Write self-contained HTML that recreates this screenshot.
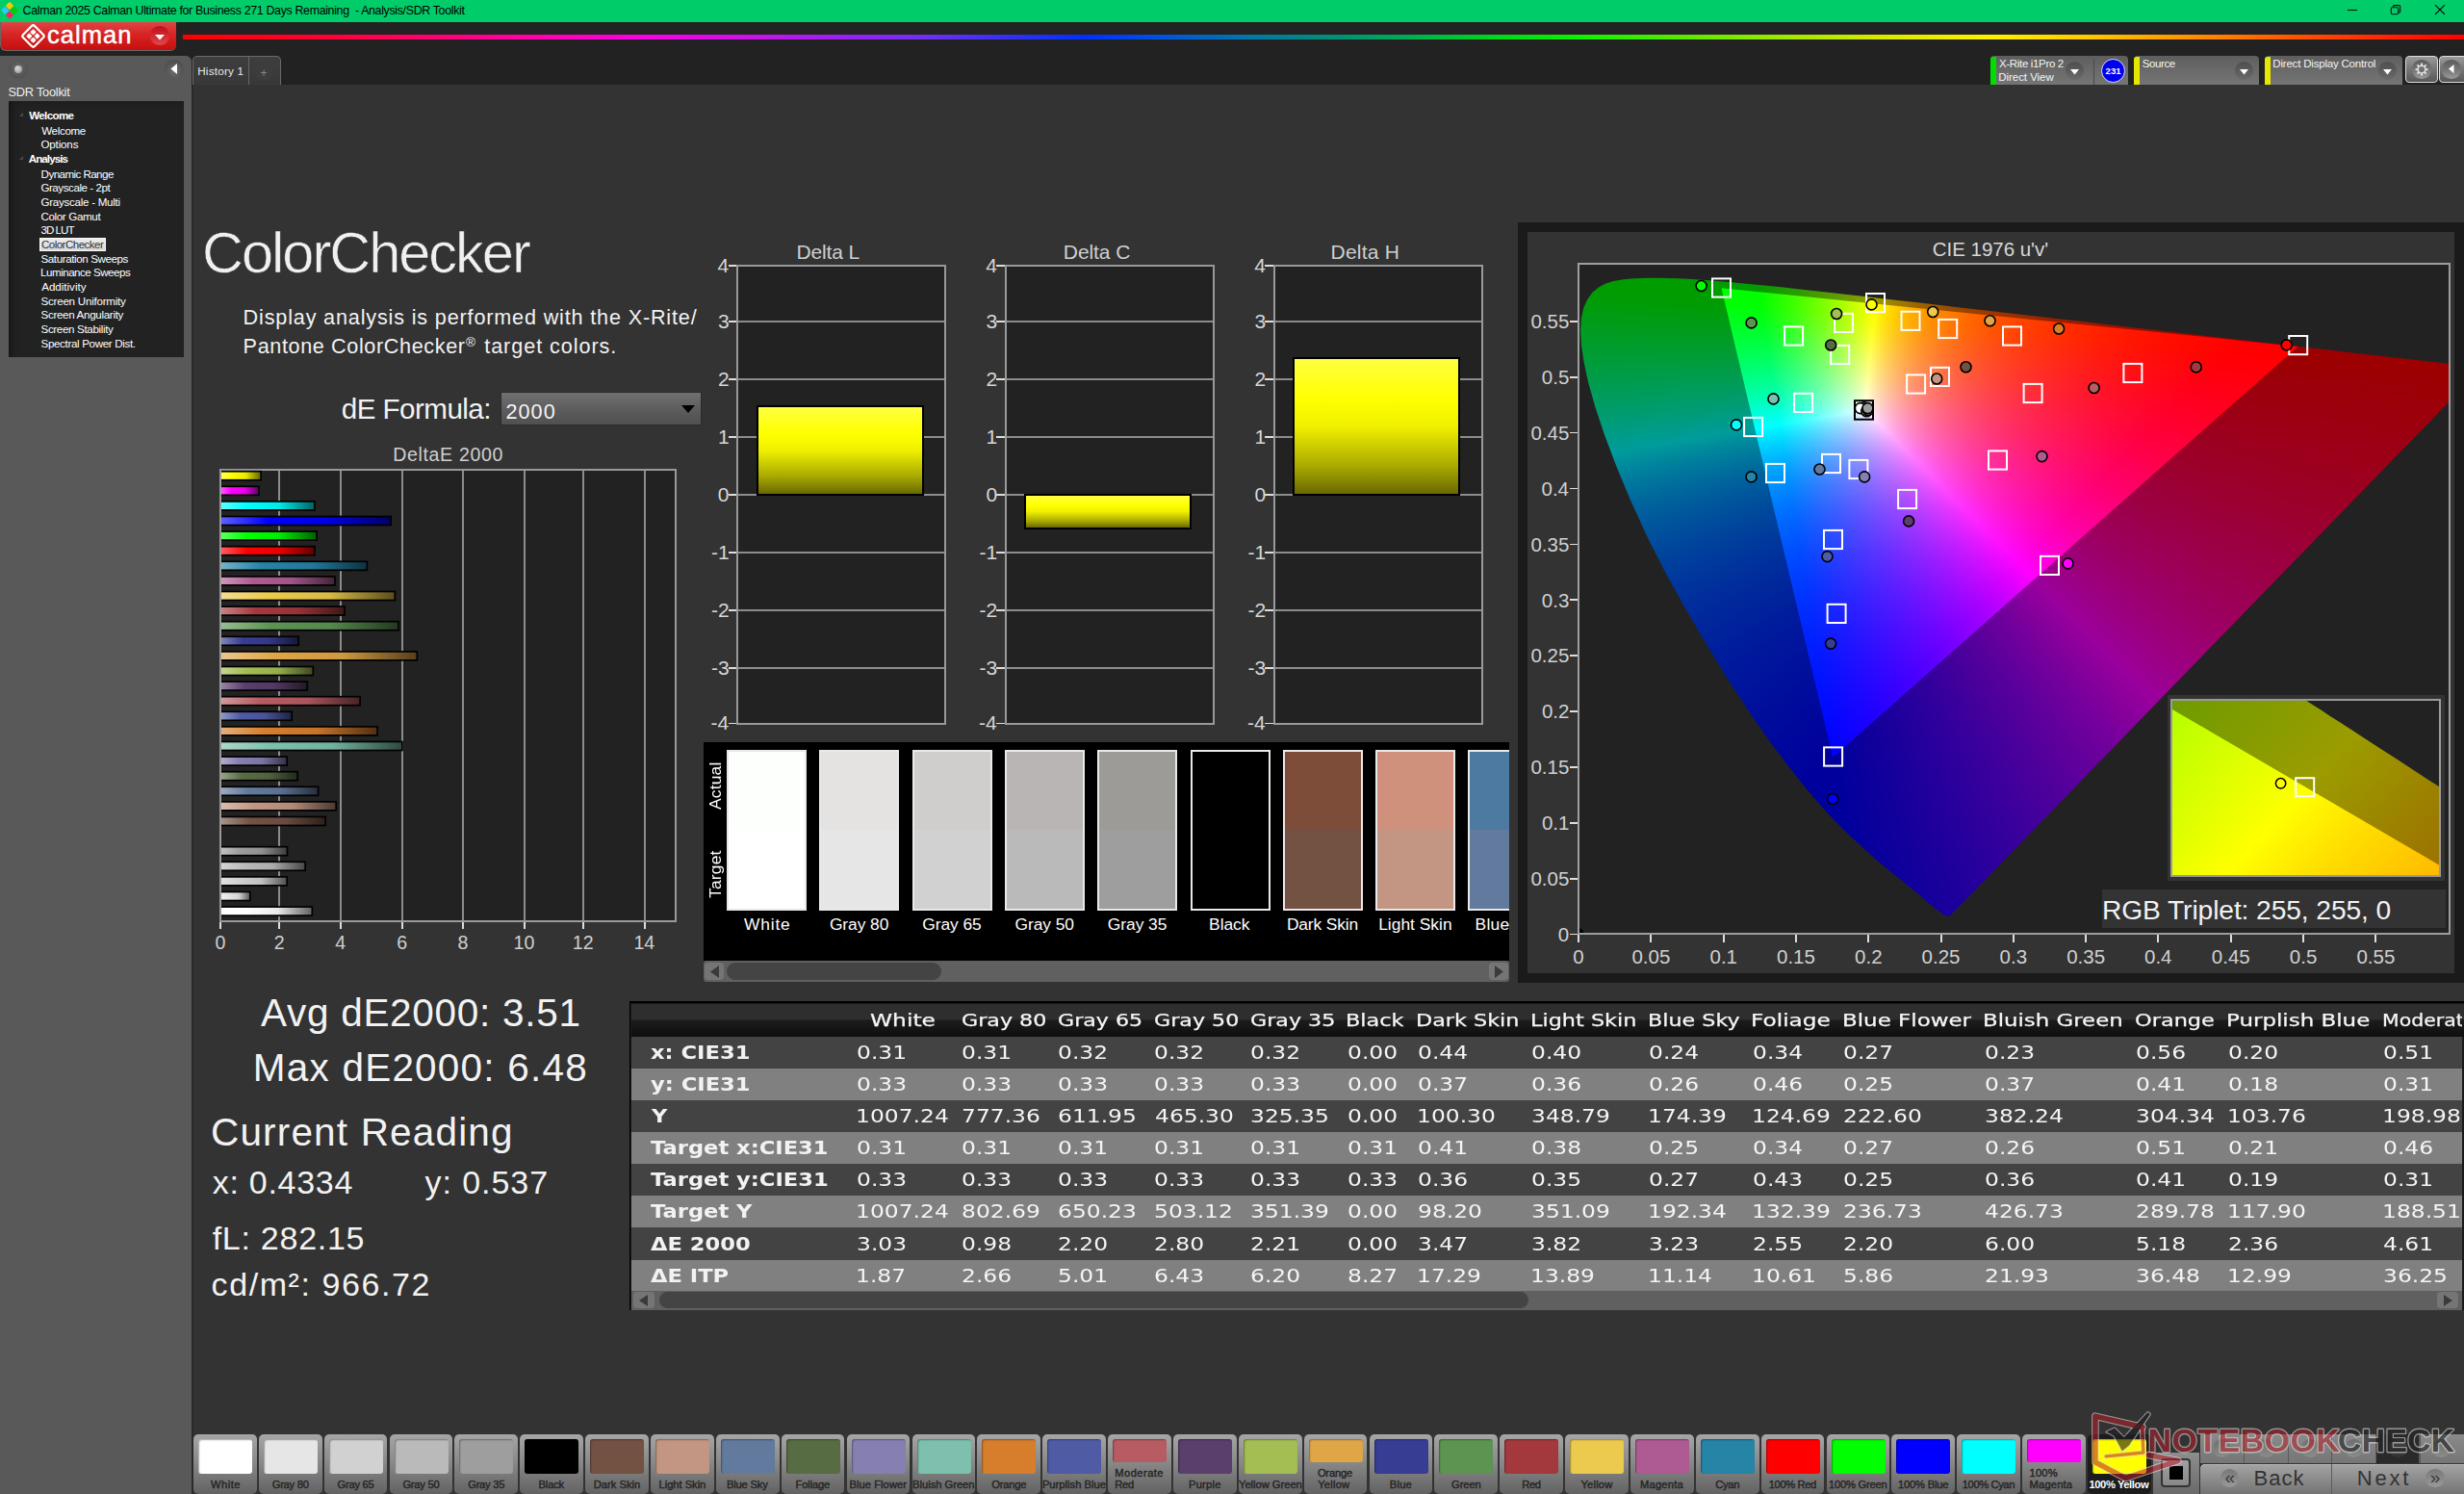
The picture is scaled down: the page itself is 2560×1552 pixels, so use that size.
<!DOCTYPE html>
<html><head><meta charset="utf-8"><title>Calman ColorChecker</title>
<style>
html,body{margin:0;padding:0;background:#333;}
body{width:2560px;height:1552px;overflow:hidden;position:relative;font-family:"Liberation Sans",sans-serif;color:#eee;}
.t{position:absolute;white-space:pre;}
.b{position:absolute;}
svg{position:absolute;overflow:visible;}
.r{position:absolute;height:3px;}

</style></head><body>
<div class="b" style="left:0.0px;top:23.0px;width:2560.0px;height:65.0px;background:#222;"></div>
<div class="b" style="left:200.0px;top:88.0px;width:2360.0px;height:1464.0px;background:#333;"></div>
<div class="b" style="left:0.0px;top:0.0px;width:2560.0px;height:23.0px;background:#00cc6a;"></div>
<svg style="left:2px;top:2px" width="18" height="18" viewBox="0 0 18 18"><g transform="rotate(45 8 9)"><rect x="1.5" y="2.5" width="6" height="6" rx="1" fill="#ffc400"/><rect x="8.3" y="2.5" width="6" height="6" rx="1" fill="#00d000"/><rect x="1.5" y="9.3" width="6" height="6" rx="1" fill="#2ec8ff"/><rect x="8.3" y="9.3" width="6" height="6" rx="1" fill="#ff2060"/></g></svg>
<span class="t" style="left:23.6px;top:5.4px;font-size:12.4px;line-height:12.4px;color:#000;letter-spacing:-0.334px;">Calman 2025 Calman Ultimate for Business 271 Days Remaining  - Analysis/SDR Toolkit</span>
<svg style="left:2420px;top:0" width="140" height="23" viewBox="0 0 140 23" fill="none" stroke="#111" stroke-width="1.1"><path d="M19 10.5h10"/><rect x="64.3" y="7.8" width="7.4" height="6.9" rx="1.2"/><path d="M66.3 7.6v-.8a1.2 1.2 0 0 1 1.2-1.2h5a1.2 1.2 0 0 1 1.2 1.2v5a1.2 1.2 0 0 1-1.2 1.2h-.6"/><path d="M110 5.2l10 9.8M120 5.2l-10 9.8"/></svg>
<div class="b" style="left:0;top:23px;width:183px;height:30px;border-radius:0 0 6px 6px;background:#666"></div>
<div class="b" style="left:1px;top:23px;width:181.5px;height:29px;border-radius:0 0 5px 5px;background:linear-gradient(#e04444,#d62424 45%,#c80e0e)"></div>
<svg style="left:22px;top:25px" width="25" height="25" viewBox="0 0 25 25"><g transform="rotate(45 12.5 12.5)" fill="#fff"><rect x="4" y="4" width="17" height="17" rx="2.2" fill="none" stroke="#fff" stroke-width="2.2"/><rect x="7.3" y="7.3" width="4.6" height="4.6" rx=".8"/><rect x="13.1" y="7.3" width="4.6" height="4.6" rx=".8"/><rect x="7.3" y="13.1" width="4.6" height="4.6" rx=".8"/><rect x="13.1" y="13.1" width="4.6" height="4.6" rx=".8"/></g></svg>
<span class="t" style="left:48.9px;top:23.5px;font-size:25.5px;line-height:25.5px;color:#fff;letter-spacing:1.082px;-webkit-text-stroke:.5px #fff;">calman</span>
<div class="b" style="left:156.3px;top:27.3px;width:19.4px;height:19.4px;border-radius:50%;background:linear-gradient(#c00c1c,#e04848)"></div>
<svg style="left:161px;top:35.5px" width="10" height="6" viewBox="0 0 10 6"><path d="M0 0h10L5 5.6z" fill="#fff"/></svg>
<div class="b" style="left:190.0px;top:35.6px;width:2370.0px;height:5.0px;background:linear-gradient(90deg,#ff0000 0%,#ff0030 6%,#ff0080 12%,#ff00b4 16%,#f800e8 20.3%,#d010e8 24.3%,#a020f0 28.4%,#7030f0 32.5%,#3030f0 36.5%,#0030ff 39.6%,#0050e0 42.6%,#0078a8 46.7%,#008c7c 50%,#00b050 54%,#00dc14 58.1%,#10f000 61.2%,#60e800 66.2%,#a0e800 70.3%,#d8e800 74.3%,#fff000 79.4%,#ffc800 83.5%,#ff8800 88.6%,#ff4800 93.6%,#ff1800 97.7%,#ff0000 100%);filter:blur(.5px);"></div>
<div class="b" style="left:0;top:58px;width:199px;height:1494px;background:#595959;border-radius:0 6px 0 0"></div>
<div class="b" style="left:199.0px;top:88.0px;width:1.5px;height:1464.0px;background:#2a2a2a;"></div>
<div class="b" style="left:9px;top:62px;width:20px;height:20px;border-radius:50%;background:radial-gradient(circle at 50% 45%,#6c6c6c,#505050 70%,#595959)"></div>
<div class="b" style="left:14.5px;top:68px;width:8px;height:8px;border-radius:50%;background:radial-gradient(circle at 40% 35%,#ddd,#888)"></div>
<div class="b" style="left:171px;top:62px;width:20px;height:20px;border-radius:50%;background:radial-gradient(circle at 50% 60%,#6e6e6e,#4c4c4c 75%,#595959)"></div>
<svg style="left:177px;top:66px" width="8" height="11" viewBox="0 0 8 11"><path d="M7 0v11L0.5 5.5z" fill="#fff"/></svg>
<span class="t" style="left:8.5px;top:90.2px;font-size:12.8px;line-height:12.8px;color:#f0f0f0;letter-spacing:-0.235px;">SDR Toolkit</span>
<div class="b" style="left:9px;top:105px;width:182px;height:266px;background:#222;box-shadow:inset 7px 3px 7px -4px #151515"></div>
<span class="t" style="left:30.2px;top:114.2px;font-size:11.6px;line-height:11.6px;color:#fff;font-weight:700;letter-spacing:-0.641px;">Welcome</span>
<svg style="left:19.5px;top:117.0px" width="4" height="4" viewBox="0 0 4 4"><path d="M4 0v4H0z" fill="#4a4a4a"/></svg>
<span class="t" style="left:43.2px;top:130.1px;font-size:11.6px;line-height:11.6px;color:#fff;letter-spacing:-0.329px;">Welcome</span>
<span class="t" style="left:42.5px;top:143.8px;font-size:11.6px;line-height:11.6px;color:#fff;letter-spacing:-0.172px;">Options</span>
<span class="t" style="left:29.7px;top:159.0px;font-size:11.6px;line-height:11.6px;color:#fff;font-weight:700;letter-spacing:-0.911px;">Analysis</span>
<svg style="left:19.5px;top:161.8px" width="4" height="4" viewBox="0 0 4 4"><path d="M4 0v4H0z" fill="#4a4a4a"/></svg>
<span class="t" style="left:42.6px;top:174.9px;font-size:11.6px;line-height:11.6px;color:#fff;letter-spacing:-0.562px;">Dynamic Range</span>
<span class="t" style="left:42.4px;top:188.9px;font-size:11.6px;line-height:11.6px;color:#fff;letter-spacing:-0.448px;">Grayscale - 2pt</span>
<span class="t" style="left:42.4px;top:204.1px;font-size:11.6px;line-height:11.6px;color:#fff;letter-spacing:-0.267px;">Grayscale - Multi</span>
<span class="t" style="left:42.4px;top:218.7px;font-size:11.6px;line-height:11.6px;color:#fff;letter-spacing:-0.343px;">Color Gamut</span>
<span class="t" style="left:42.6px;top:233.2px;font-size:11.6px;line-height:11.6px;color:#fff;letter-spacing:-1.005px;">3D LUT</span>
<div class="b" style="left:41.0px;top:247.2px;width:69.2px;height:13.8px;background:linear-gradient(#ececec,#d8d8d8);border:1px solid #fafafa;box-sizing:border-box;"></div>
<span class="t" style="left:42.9px;top:248.1px;font-size:11.6px;line-height:11.6px;color:#333;letter-spacing:-0.535px;">ColorChecker</span>
<span class="t" style="left:42.5px;top:263.0px;font-size:11.6px;line-height:11.6px;color:#fff;letter-spacing:-0.403px;">Saturation Sweeps</span>
<span class="t" style="left:42.1px;top:277.1px;font-size:11.6px;line-height:11.6px;color:#fff;letter-spacing:-0.502px;">Luminance Sweeps</span>
<span class="t" style="left:43.2px;top:291.9px;font-size:11.6px;line-height:11.6px;color:#fff;letter-spacing:-0.011px;">Additivity</span>
<span class="t" style="left:42.5px;top:306.8px;font-size:11.6px;line-height:11.6px;color:#fff;letter-spacing:-0.234px;">Screen Uniformity</span>
<span class="t" style="left:42.5px;top:320.9px;font-size:11.6px;line-height:11.6px;color:#fff;letter-spacing:-0.314px;">Screen Angularity</span>
<span class="t" style="left:42.5px;top:335.7px;font-size:11.6px;line-height:11.6px;color:#fff;letter-spacing:-0.347px;">Screen Stability</span>
<span class="t" style="left:42.5px;top:350.7px;font-size:11.6px;line-height:11.6px;color:#fff;letter-spacing:-0.344px;">Spectral Power Dist.</span>
<div class="b" style="left:200px;top:58px;width:92px;height:30px;border-radius:5px 5px 0 0;background:linear-gradient(#3e3e3e,#383838);border:1px solid #6a6a6a;border-bottom:none;box-sizing:border-box"></div>
<div class="b" style="left:258.0px;top:59.0px;width:1.2px;height:29.0px;background:#666;"></div>
<span class="t" style="left:205.2px;top:68.2px;font-size:11.7px;line-height:11.7px;color:#e8e8e8;letter-spacing:0.226px;">History 1</span>
<div class="b" style="left:264px;top:64px;width:20px;height:20px;border-radius:50%;background:#3d3d3d"></div>
<span class="t" style="left:270.5px;top:69.8px;font-size:12px;line-height:12px;color:#888;">+</span>
<div class="b" style="left:2068px;top:58px;width:143px;height:30px;border-radius:4px 4px 0 0;background:linear-gradient(#5e5e5e,#6a6a6a 50%,#757575)"></div>
<div class="b" style="left:2068px;top:59px;width:5.5px;height:29px;border-radius:3px 0 0 0;background:#0d0"></div>
<span class="t" style="left:2077.0px;top:60.6px;font-size:11.5px;line-height:11.5px;color:#f4f4f4;letter-spacing:-0.334px;">X-Rite i1Pro 2</span>
<span class="t" style="left:2076.3px;top:74.6px;font-size:11.5px;line-height:11.5px;color:#f4f4f4;letter-spacing:-0.054px;">Direct View</span>
<div class="b" style="left:2146.1px;top:63.5px;width:19px;height:19px;border-radius:50%;background:linear-gradient(#4e4e4e,#6a6a6a)"></div>
<svg style="left:2151.1px;top:72px" width="9" height="5.5" viewBox="0 0 9 5.5"><path d="M0 0h9L4.5 5.5z" fill="#fff"/></svg>
<div class="b" style="left:2174.5px;top:61.0px;width:1.0px;height:27.0px;background:#4a4a4a;"></div>
<div class="b" style="left:2183px;top:60.5px;width:25px;height:25px;border-radius:50%;background:#0000f0;border:1px solid #dde;box-sizing:border-box"></div>
<span class="t" style="left:2187.6px;top:68.5px;font-size:9.6px;line-height:9.6px;color:#fff;font-weight:700;">231</span>
<div class="b" style="left:2217px;top:58px;width:130px;height:30px;border-radius:4px 4px 0 0;background:linear-gradient(#5e5e5e,#6a6a6a 50%,#757575)"></div>
<div class="b" style="left:2217px;top:59px;width:5.5px;height:29px;border-radius:3px 0 0 0;background:#e6e600"></div>
<span class="t" style="left:2225.7px;top:60.6px;font-size:11.5px;line-height:11.5px;color:#f4f4f4;letter-spacing:-0.384px;">Source</span>
<div class="b" style="left:2321.5px;top:63.5px;width:19px;height:19px;border-radius:50%;background:linear-gradient(#4e4e4e,#6a6a6a)"></div>
<svg style="left:2326.5px;top:72px" width="9" height="5.5" viewBox="0 0 9 5.5"><path d="M0 0h9L4.5 5.5z" fill="#fff"/></svg>
<div class="b" style="left:2353px;top:58px;width:143px;height:30px;border-radius:4px 4px 0 0;background:linear-gradient(#5e5e5e,#6a6a6a 50%,#757575)"></div>
<div class="b" style="left:2353px;top:59px;width:5.5px;height:29px;border-radius:3px 0 0 0;background:#e6e600"></div>
<span class="t" style="left:2361.3px;top:60.6px;font-size:11.5px;line-height:11.5px;color:#f4f4f4;letter-spacing:-0.195px;">Direct Display Control</span>
<div class="b" style="left:2470.5px;top:63.5px;width:19px;height:19px;border-radius:50%;background:linear-gradient(#4e4e4e,#6a6a6a)"></div>
<svg style="left:2475.5px;top:72px" width="9" height="5.5" viewBox="0 0 9 5.5"><path d="M0 0h9L4.5 5.5z" fill="#fff"/></svg>
<div class="b" style="left:2499.2px;top:57.8px;width:34.2px;height:28.4px;border-radius:4px;background:linear-gradient(#9a9a9a,#787878 45%,#585858);border:1px solid #dcdcdc;box-sizing:border-box"></div>
<div class="b" style="left:2506.3px;top:62.4px;width:19.4px;height:19.4px;border-radius:50%;background:linear-gradient(#5c5c5c,#747474 50%,#9a9a9a)"></div>
<svg style="left:0;top:0" width="2560" height="100" viewBox="0 0 2560 100"><path d="M2515.14 65.56 L2516.86 65.56 L2517.06 67.62 L2518.41 68.18 L2520.02 66.87 L2521.23 68.08 L2519.92 69.69 L2520.48 71.04 L2522.54 71.24 L2522.54 72.96 L2520.48 73.16 L2519.92 74.51 L2521.23 76.12 L2520.02 77.33 L2518.41 76.02 L2517.06 76.58 L2516.86 78.64 L2515.14 78.64 L2514.94 76.58 L2513.59 76.02 L2511.98 77.33 L2510.77 76.12 L2512.08 74.51 L2511.52 73.16 L2509.46 72.96 L2509.46 71.24 L2511.52 71.04 L2512.08 69.69 L2510.77 68.08 L2511.98 66.87 L2513.59 68.18 L2514.94 67.62Z" fill="#dedede"/><circle cx="2516" cy="72.1" r="3.1" fill="#727272"/></svg>
<div class="b" style="left:2533.6px;top:57.8px;width:30px;height:28.4px;border-radius:4px;background:linear-gradient(#9a9a9a,#787878 45%,#585858);border:1px solid #dcdcdc;box-sizing:border-box"></div>
<div class="b" style="left:2537.2px;top:62.4px;width:19.4px;height:19.4px;border-radius:50%;background:linear-gradient(#5c5c5c,#747474 50%,#9a9a9a)"></div>
<svg style="left:2544px;top:66.9px" width="5.6" height="9.2" viewBox="0 0 5.6 9.2"><path d="M5.6 0v9.2L0 4.6z" fill="#fff"/></svg>
<span class="t" style="left:210.0px;top:232.6px;font-size:59.5px;line-height:59.5px;color:#f0f0f0;letter-spacing:-1.998px;-webkit-text-stroke:.6px #333;">ColorChecker</span>
<span class="t" style="left:252.6px;top:318.7px;font-size:21.6px;line-height:21.6px;color:#f2f2f2;letter-spacing:0.841px;">Display analysis is performed with the X-Rite/</span>
<span class="t" style="left:252.6px;top:349.3px;font-size:21.6px;line-height:21.6px;color:#f2f2f2;letter-spacing:0.629px;">Pantone ColorChecker</span>
<span class="t" style="left:484.1px;top:349.2px;font-size:13.5px;line-height:13.5px;color:#f2f2f2;">®</span>
<span class="t" style="left:503.2px;top:349.3px;font-size:21.6px;line-height:21.6px;color:#f2f2f2;letter-spacing:0.947px;">target colors.</span>
<span class="t" style="left:354.8px;top:409.9px;font-size:29.6px;line-height:29.6px;color:#f2f2f2;letter-spacing:-0.547px;">dE Formula:</span>
<div class="b" style="left:520px;top:407px;width:209px;height:35px;box-sizing:border-box;border:1.5px solid #2a2a2a;background:linear-gradient(#707070,#5a5a5a 60%,#505050)"></div>
<span class="t" style="left:525.4px;top:416.7px;font-size:21.6px;line-height:21.6px;color:#f4f4f4;letter-spacing:1.092px;">2000</span>
<svg style="left:707.5px;top:420.5px" width="14" height="8" viewBox="0 0 14 8"><path d="M0 0h14L7 8z" fill="#000"/></svg>
<span class="t" style="left:408.2px;top:462.8px;font-size:19.6px;line-height:19.6px;color:#cfcfcf;letter-spacing:0.636px;">DeltaE 2000</span>
<div class="b" style="left:228.0px;top:487.0px;width:475.0px;height:471.0px;background:#222;box-sizing:border-box;border:2px solid #999;"></div>
<div class="b" style="left:289.3px;top:489.0px;width:2.0px;height:467.0px;background:#8c8c8c;"></div>
<div class="b" style="left:289.4px;top:958.0px;width:1.8px;height:6.5px;background:#ddd;"></div>
<div class="b" style="left:352.7px;top:489.0px;width:2.0px;height:467.0px;background:#8c8c8c;"></div>
<div class="b" style="left:352.8px;top:958.0px;width:1.8px;height:6.5px;background:#ddd;"></div>
<div class="b" style="left:416.8px;top:489.0px;width:2.0px;height:467.0px;background:#8c8c8c;"></div>
<div class="b" style="left:416.9px;top:958.0px;width:1.8px;height:6.5px;background:#ddd;"></div>
<div class="b" style="left:479.9px;top:489.0px;width:2.0px;height:467.0px;background:#8c8c8c;"></div>
<div class="b" style="left:480.0px;top:958.0px;width:1.8px;height:6.5px;background:#ddd;"></div>
<div class="b" style="left:543.9px;top:489.0px;width:2.0px;height:467.0px;background:#8c8c8c;"></div>
<div class="b" style="left:544.0px;top:958.0px;width:1.8px;height:6.5px;background:#ddd;"></div>
<div class="b" style="left:605.0px;top:489.0px;width:2.0px;height:467.0px;background:#8c8c8c;"></div>
<div class="b" style="left:605.1px;top:958.0px;width:1.8px;height:6.5px;background:#ddd;"></div>
<div class="b" style="left:668.8px;top:489.0px;width:2.0px;height:467.0px;background:#8c8c8c;"></div>
<div class="b" style="left:668.9px;top:958.0px;width:1.8px;height:6.5px;background:#ddd;"></div>
<div class="b" style="left:228.0px;top:958.0px;width:1.8px;height:6.5px;background:#ddd;"></div>
<span class="t" style="left:223.5px;top:970.0px;font-size:19.6px;line-height:19.6px;color:#cfcfcf;">0</span>
<span class="t" style="left:284.8px;top:970.0px;font-size:19.6px;line-height:19.6px;color:#cfcfcf;">2</span>
<span class="t" style="left:348.3px;top:970.0px;font-size:19.6px;line-height:19.6px;color:#cfcfcf;">4</span>
<span class="t" style="left:412.3px;top:970.0px;font-size:19.6px;line-height:19.6px;color:#cfcfcf;">6</span>
<span class="t" style="left:475.5px;top:970.0px;font-size:19.6px;line-height:19.6px;color:#cfcfcf;">8</span>
<span class="t" style="left:533.6px;top:970.0px;font-size:19.6px;line-height:19.6px;color:#cfcfcf;">10</span>
<span class="t" style="left:594.8px;top:970.0px;font-size:19.6px;line-height:19.6px;color:#cfcfcf;">12</span>
<span class="t" style="left:658.4px;top:970.0px;font-size:19.6px;line-height:19.6px;color:#cfcfcf;">14</span>
<svg style="left:0;top:0" width="760" height="1000" viewBox="0 0 760 1000"><defs><linearGradient id="b0"><stop offset="0" stop-color="#ffff61"/><stop offset=".28" stop-color="#ffff00"/><stop offset=".62" stop-color="#ebeb00"/><stop offset="1" stop-color="#616100"/></linearGradient><linearGradient id="b1"><stop offset="0" stop-color="#ff61ff"/><stop offset=".28" stop-color="#ff00ff"/><stop offset=".62" stop-color="#eb00eb"/><stop offset="1" stop-color="#610061"/></linearGradient><linearGradient id="b2"><stop offset="0" stop-color="#61ffff"/><stop offset=".28" stop-color="#00ffff"/><stop offset=".62" stop-color="#00ebeb"/><stop offset="1" stop-color="#006161"/></linearGradient><linearGradient id="b3"><stop offset="0" stop-color="#6161ff"/><stop offset=".28" stop-color="#0000ff"/><stop offset=".62" stop-color="#0000eb"/><stop offset="1" stop-color="#000061"/></linearGradient><linearGradient id="b4"><stop offset="0" stop-color="#61ff61"/><stop offset=".28" stop-color="#00ff00"/><stop offset=".62" stop-color="#00eb00"/><stop offset="1" stop-color="#006100"/></linearGradient><linearGradient id="b5"><stop offset="0" stop-color="#ff6161"/><stop offset=".28" stop-color="#ff0000"/><stop offset=".62" stop-color="#eb0000"/><stop offset="1" stop-color="#610000"/></linearGradient><linearGradient id="b6"><stop offset="0" stop-color="#78b3c8"/><stop offset=".28" stop-color="#2684a7"/><stop offset=".62" stop-color="#23799a"/><stop offset="1" stop-color="#0e323f"/></linearGradient><linearGradient id="b7"><stop offset="0" stop-color="#cd99bc"/><stop offset=".28" stop-color="#af5b93"/><stop offset=".62" stop-color="#a15487"/><stop offset="1" stop-color="#422338"/></linearGradient><linearGradient id="b8"><stop offset="0" stop-color="#f3de91"/><stop offset=".28" stop-color="#ecca4d"/><stop offset=".62" stop-color="#d9ba47"/><stop offset="1" stop-color="#5a4d1d"/></linearGradient><linearGradient id="b9"><stop offset="0" stop-color="#c68487"/><stop offset=".28" stop-color="#a3393d"/><stop offset=".62" stop-color="#963438"/><stop offset="1" stop-color="#3e1617"/></linearGradient><linearGradient id="b10"><stop offset="0" stop-color="#9abd94"/><stop offset=".28" stop-color="#5c9452"/><stop offset=".62" stop-color="#55884b"/><stop offset="1" stop-color="#23381f"/></linearGradient><linearGradient id="b11"><stop offset="0" stop-color="#8487bd"/><stop offset=".28" stop-color="#383d94"/><stop offset=".62" stop-color="#343888"/><stop offset="1" stop-color="#151738"/></linearGradient><linearGradient id="b12"><stop offset="0" stop-color="#ebc78d"/><stop offset=".28" stop-color="#dfa547"/><stop offset=".62" stop-color="#cd9841"/><stop offset="1" stop-color="#553f1b"/></linearGradient><linearGradient id="b13"><stop offset="0" stop-color="#c6d794"/><stop offset=".28" stop-color="#a3be52"/><stop offset=".62" stop-color="#96af4b"/><stop offset="1" stop-color="#3e481f"/></linearGradient><linearGradient id="b14"><stop offset="0" stop-color="#9987a4"/><stop offset=".28" stop-color="#5a3e6c"/><stop offset=".62" stop-color="#533963"/><stop offset="1" stop-color="#221829"/></linearGradient><linearGradient id="b15"><stop offset="0" stop-color="#d39a9e"/><stop offset=".28" stop-color="#b85c63"/><stop offset=".62" stop-color="#a9555b"/><stop offset="1" stop-color="#462326"/></linearGradient><linearGradient id="b16"><stop offset="0" stop-color="#9299c8"/><stop offset=".28" stop-color="#505ba6"/><stop offset=".62" stop-color="#4a5499"/><stop offset="1" stop-color="#1e233f"/></linearGradient><linearGradient id="b17"><stop offset="0" stop-color="#e6af7c"/><stop offset=".28" stop-color="#d67e2c"/><stop offset=".62" stop-color="#c57428"/><stop offset="1" stop-color="#513011"/></linearGradient><linearGradient id="b18"><stop offset="0" stop-color="#aed8cc"/><stop offset=".28" stop-color="#7cc0ad"/><stop offset=".62" stop-color="#72b19f"/><stop offset="1" stop-color="#2f4942"/></linearGradient><linearGradient id="b19"><stop offset="0" stop-color="#b3b0cf"/><stop offset=".28" stop-color="#8580b1"/><stop offset=".62" stop-color="#7a76a3"/><stop offset="1" stop-color="#333143"/></linearGradient><linearGradient id="b20"><stop offset="0" stop-color="#97a48a"/><stop offset=".28" stop-color="#576c43"/><stop offset=".62" stop-color="#50633e"/><stop offset="1" stop-color="#212919"/></linearGradient><linearGradient id="b21"><stop offset="0" stop-color="#9eadc2"/><stop offset=".28" stop-color="#627a9d"/><stop offset=".62" stop-color="#5a7090"/><stop offset="1" stop-color="#252e3c"/></linearGradient><linearGradient id="b22"><stop offset="0" stop-color="#d9beb2"/><stop offset=".28" stop-color="#c29682"/><stop offset=".62" stop-color="#b28a78"/><stop offset="1" stop-color="#4a3931"/></linearGradient><linearGradient id="b23"><stop offset="0" stop-color="#a8948b"/><stop offset=".28" stop-color="#735244"/><stop offset=".62" stop-color="#6a4b3f"/><stop offset="1" stop-color="#2c1f1a"/></linearGradient><linearGradient id="b25"><stop offset="0" stop-color="#c3c3c3"/><stop offset=".28" stop-color="#9e9e9e"/><stop offset=".62" stop-color="#919191"/><stop offset="1" stop-color="#3c3c3c"/></linearGradient><linearGradient id="b26"><stop offset="0" stop-color="#d4d4d4"/><stop offset=".28" stop-color="#bababa"/><stop offset=".62" stop-color="#ababab"/><stop offset="1" stop-color="#474747"/></linearGradient><linearGradient id="b27"><stop offset="0" stop-color="#e2e2e2"/><stop offset=".28" stop-color="#d1d1d1"/><stop offset=".62" stop-color="#c0c0c0"/><stop offset="1" stop-color="#4f4f4f"/></linearGradient><linearGradient id="b28"><stop offset="0" stop-color="#f0f0f0"/><stop offset=".28" stop-color="#e6e6e6"/><stop offset=".62" stop-color="#d4d4d4"/><stop offset="1" stop-color="#575757"/></linearGradient><linearGradient id="b29"><stop offset="0" stop-color="#ffffff"/><stop offset=".28" stop-color="#ffffff"/><stop offset=".62" stop-color="#ebebeb"/><stop offset="1" stop-color="#616161"/></linearGradient></defs><g stroke="#000" stroke-width="1.7"><rect x="229" y="489.7" width="42.1" height="9" fill="url(#b0)"/><rect x="229" y="505.3" width="39.9" height="9" fill="url(#b1)"/><rect x="229" y="520.9" width="97.9" height="9" fill="url(#b2)"/><rect x="229" y="536.5" width="177.2" height="9" fill="url(#b3)"/><rect x="229" y="552.1" width="100.1" height="9" fill="url(#b4)"/><rect x="229" y="567.7" width="97.9" height="9" fill="url(#b5)"/><rect x="229" y="583.3" width="152.4" height="9" fill="url(#b6)"/><rect x="229" y="598.9" width="119.0" height="9" fill="url(#b7)"/><rect x="229" y="614.5" width="181.3" height="9" fill="url(#b8)"/><rect x="229" y="630.1" width="129.0" height="9" fill="url(#b9)"/><rect x="229" y="645.7" width="185.1" height="9" fill="url(#b10)"/><rect x="229" y="661.3" width="81.2" height="9" fill="url(#b11)"/><rect x="229" y="676.9" width="204.3" height="9" fill="url(#b12)"/><rect x="229" y="692.5" width="96.3" height="9" fill="url(#b13)"/><rect x="229" y="708.1" width="90.3" height="9" fill="url(#b14)"/><rect x="229" y="723.7" width="145.1" height="9" fill="url(#b15)"/><rect x="229" y="739.3" width="74.2" height="9" fill="url(#b16)"/><rect x="229" y="754.9" width="163.1" height="9" fill="url(#b17)"/><rect x="229" y="770.5" width="188.9" height="9" fill="url(#b18)"/><rect x="229" y="786.1" width="69.2" height="9" fill="url(#b19)"/><rect x="229" y="801.7" width="80.2" height="9" fill="url(#b20)"/><rect x="229" y="817.3" width="101.6" height="9" fill="url(#b21)"/><rect x="229" y="832.9" width="120.2" height="9" fill="url(#b22)"/><rect x="229" y="848.5" width="109.2" height="9" fill="url(#b23)"/><rect x="229" y="879.7" width="69.5" height="9" fill="url(#b25)"/><rect x="229" y="895.3" width="88.1" height="9" fill="url(#b26)"/><rect x="229" y="910.9" width="69.2" height="9" fill="url(#b27)"/><rect x="229" y="926.5" width="30.8" height="9" fill="url(#b28)"/><rect x="229" y="942.1" width="95.3" height="9" fill="url(#b29)"/></g></svg>
<div class="b" style="left:228.0px;top:487.0px;width:2.0px;height:471.0px;background:#999;"></div>
<span class="t" style="left:827.4px;top:251.3px;font-size:21px;line-height:21px;color:#cfcfcf;letter-spacing:-0.109px;">Delta L</span>
<div class="b" style="left:765.0px;top:275.0px;width:218.0px;height:477.5px;background:#222;box-sizing:border-box;border:2px solid #999;"></div>
<div class="b" style="left:756.5px;top:750.6px;width:8.5px;height:1.8px;background:#ddd;"></div>
<span class="t" style="left:738.5px;top:740.3px;font-size:21px;line-height:21px;color:#d6d6d6;">-4</span>
<div class="b" style="left:767.0px;top:693.2px;width:214.0px;height:2.0px;background:#8c8c8c;"></div>
<div class="b" style="left:756.5px;top:693.3px;width:8.5px;height:1.8px;background:#ddd;"></div>
<span class="t" style="left:738.9px;top:683.0px;font-size:21px;line-height:21px;color:#d6d6d6;">-3</span>
<div class="b" style="left:767.0px;top:633.2px;width:214.0px;height:2.0px;background:#8c8c8c;"></div>
<div class="b" style="left:756.5px;top:633.3px;width:8.5px;height:1.8px;background:#ddd;"></div>
<span class="t" style="left:739.0px;top:623.0px;font-size:21px;line-height:21px;color:#d6d6d6;">-2</span>
<div class="b" style="left:767.0px;top:573.2px;width:214.0px;height:2.0px;background:#8c8c8c;"></div>
<div class="b" style="left:756.5px;top:573.3px;width:8.5px;height:1.8px;background:#ddd;"></div>
<span class="t" style="left:739.0px;top:563.0px;font-size:21px;line-height:21px;color:#d6d6d6;">-1</span>
<div class="b" style="left:767.0px;top:513.2px;width:214.0px;height:2.0px;background:#8c8c8c;"></div>
<div class="b" style="left:756.5px;top:513.3px;width:8.5px;height:1.8px;background:#ddd;"></div>
<span class="t" style="left:745.8px;top:503.0px;font-size:21px;line-height:21px;color:#d6d6d6;">0</span>
<div class="b" style="left:767.0px;top:453.2px;width:214.0px;height:2.0px;background:#8c8c8c;"></div>
<div class="b" style="left:756.5px;top:453.3px;width:8.5px;height:1.8px;background:#ddd;"></div>
<span class="t" style="left:746.0px;top:443.0px;font-size:21px;line-height:21px;color:#d6d6d6;">1</span>
<div class="b" style="left:767.0px;top:393.2px;width:214.0px;height:2.0px;background:#8c8c8c;"></div>
<div class="b" style="left:756.5px;top:393.3px;width:8.5px;height:1.8px;background:#ddd;"></div>
<span class="t" style="left:746.0px;top:383.0px;font-size:21px;line-height:21px;color:#d6d6d6;">2</span>
<div class="b" style="left:767.0px;top:333.2px;width:214.0px;height:2.0px;background:#8c8c8c;"></div>
<div class="b" style="left:756.5px;top:333.3px;width:8.5px;height:1.8px;background:#ddd;"></div>
<span class="t" style="left:745.9px;top:323.0px;font-size:21px;line-height:21px;color:#d6d6d6;">3</span>
<div class="b" style="left:756.5px;top:275.1px;width:8.5px;height:1.8px;background:#ddd;"></div>
<span class="t" style="left:745.6px;top:264.8px;font-size:21px;line-height:21px;color:#d6d6d6;">4</span>
<div class="b" style="left:785.5px;top:421.2px;width:174px;height:94.0px;box-sizing:border-box;border:2.1px solid #000;background:linear-gradient(#ffff40,#ffff00 30%,#f0f000 50%,#a8a800 80%,#686800)"></div>
<span class="t" style="left:1104.8px;top:251.3px;font-size:21px;line-height:21px;color:#cfcfcf;letter-spacing:-0.086px;">Delta C</span>
<div class="b" style="left:1043.6px;top:275.0px;width:218.0px;height:477.5px;background:#222;box-sizing:border-box;border:2px solid #999;"></div>
<div class="b" style="left:1035.1px;top:750.6px;width:8.5px;height:1.8px;background:#ddd;"></div>
<span class="t" style="left:1017.1px;top:740.3px;font-size:21px;line-height:21px;color:#d6d6d6;">-4</span>
<div class="b" style="left:1045.6px;top:693.2px;width:214.0px;height:2.0px;background:#8c8c8c;"></div>
<div class="b" style="left:1035.1px;top:693.3px;width:8.5px;height:1.8px;background:#ddd;"></div>
<span class="t" style="left:1017.4px;top:683.0px;font-size:21px;line-height:21px;color:#d6d6d6;">-3</span>
<div class="b" style="left:1045.6px;top:633.2px;width:214.0px;height:2.0px;background:#8c8c8c;"></div>
<div class="b" style="left:1035.1px;top:633.3px;width:8.5px;height:1.8px;background:#ddd;"></div>
<span class="t" style="left:1017.6px;top:623.0px;font-size:21px;line-height:21px;color:#d6d6d6;">-2</span>
<div class="b" style="left:1045.6px;top:573.2px;width:214.0px;height:2.0px;background:#8c8c8c;"></div>
<div class="b" style="left:1035.1px;top:573.3px;width:8.5px;height:1.8px;background:#ddd;"></div>
<span class="t" style="left:1017.6px;top:563.0px;font-size:21px;line-height:21px;color:#d6d6d6;">-1</span>
<div class="b" style="left:1045.6px;top:513.2px;width:214.0px;height:2.0px;background:#8c8c8c;"></div>
<div class="b" style="left:1035.1px;top:513.3px;width:8.5px;height:1.8px;background:#ddd;"></div>
<span class="t" style="left:1024.4px;top:503.0px;font-size:21px;line-height:21px;color:#d6d6d6;">0</span>
<div class="b" style="left:1045.6px;top:453.2px;width:214.0px;height:2.0px;background:#8c8c8c;"></div>
<div class="b" style="left:1035.1px;top:453.3px;width:8.5px;height:1.8px;background:#ddd;"></div>
<span class="t" style="left:1024.6px;top:443.0px;font-size:21px;line-height:21px;color:#d6d6d6;">1</span>
<div class="b" style="left:1045.6px;top:393.2px;width:214.0px;height:2.0px;background:#8c8c8c;"></div>
<div class="b" style="left:1035.1px;top:393.3px;width:8.5px;height:1.8px;background:#ddd;"></div>
<span class="t" style="left:1024.6px;top:383.0px;font-size:21px;line-height:21px;color:#d6d6d6;">2</span>
<div class="b" style="left:1045.6px;top:333.2px;width:214.0px;height:2.0px;background:#8c8c8c;"></div>
<div class="b" style="left:1035.1px;top:333.3px;width:8.5px;height:1.8px;background:#ddd;"></div>
<span class="t" style="left:1024.5px;top:323.0px;font-size:21px;line-height:21px;color:#d6d6d6;">3</span>
<div class="b" style="left:1035.1px;top:275.1px;width:8.5px;height:1.8px;background:#ddd;"></div>
<span class="t" style="left:1024.2px;top:264.8px;font-size:21px;line-height:21px;color:#d6d6d6;">4</span>
<div class="b" style="left:1064.1px;top:513.4px;width:174px;height:36.9px;box-sizing:border-box;border:2.1px solid #000;background:linear-gradient(#ffff40,#ffff00 30%,#f0f000 50%,#a8a800 80%,#686800)"></div>
<span class="t" style="left:1382.5px;top:251.3px;font-size:21px;line-height:21px;color:#cfcfcf;letter-spacing:0.221px;">Delta H</span>
<div class="b" style="left:1322.6px;top:275.0px;width:218.0px;height:477.5px;background:#222;box-sizing:border-box;border:2px solid #999;"></div>
<div class="b" style="left:1314.1px;top:750.6px;width:8.5px;height:1.8px;background:#ddd;"></div>
<span class="t" style="left:1296.1px;top:740.3px;font-size:21px;line-height:21px;color:#d6d6d6;">-4</span>
<div class="b" style="left:1324.6px;top:693.2px;width:214.0px;height:2.0px;background:#8c8c8c;"></div>
<div class="b" style="left:1314.1px;top:693.3px;width:8.5px;height:1.8px;background:#ddd;"></div>
<span class="t" style="left:1296.5px;top:683.0px;font-size:21px;line-height:21px;color:#d6d6d6;">-3</span>
<div class="b" style="left:1324.6px;top:633.2px;width:214.0px;height:2.0px;background:#8c8c8c;"></div>
<div class="b" style="left:1314.1px;top:633.3px;width:8.5px;height:1.8px;background:#ddd;"></div>
<span class="t" style="left:1296.6px;top:623.0px;font-size:21px;line-height:21px;color:#d6d6d6;">-2</span>
<div class="b" style="left:1324.6px;top:573.2px;width:214.0px;height:2.0px;background:#8c8c8c;"></div>
<div class="b" style="left:1314.1px;top:573.3px;width:8.5px;height:1.8px;background:#ddd;"></div>
<span class="t" style="left:1296.6px;top:563.0px;font-size:21px;line-height:21px;color:#d6d6d6;">-1</span>
<div class="b" style="left:1324.6px;top:513.2px;width:214.0px;height:2.0px;background:#8c8c8c;"></div>
<div class="b" style="left:1314.1px;top:513.3px;width:8.5px;height:1.8px;background:#ddd;"></div>
<span class="t" style="left:1303.4px;top:503.0px;font-size:21px;line-height:21px;color:#d6d6d6;">0</span>
<div class="b" style="left:1324.6px;top:453.2px;width:214.0px;height:2.0px;background:#8c8c8c;"></div>
<div class="b" style="left:1314.1px;top:453.3px;width:8.5px;height:1.8px;background:#ddd;"></div>
<span class="t" style="left:1303.6px;top:443.0px;font-size:21px;line-height:21px;color:#d6d6d6;">1</span>
<div class="b" style="left:1324.6px;top:393.2px;width:214.0px;height:2.0px;background:#8c8c8c;"></div>
<div class="b" style="left:1314.1px;top:393.3px;width:8.5px;height:1.8px;background:#ddd;"></div>
<span class="t" style="left:1303.6px;top:383.0px;font-size:21px;line-height:21px;color:#d6d6d6;">2</span>
<div class="b" style="left:1324.6px;top:333.2px;width:214.0px;height:2.0px;background:#8c8c8c;"></div>
<div class="b" style="left:1314.1px;top:333.3px;width:8.5px;height:1.8px;background:#ddd;"></div>
<span class="t" style="left:1303.5px;top:323.0px;font-size:21px;line-height:21px;color:#d6d6d6;">3</span>
<div class="b" style="left:1314.1px;top:275.1px;width:8.5px;height:1.8px;background:#ddd;"></div>
<span class="t" style="left:1303.2px;top:264.8px;font-size:21px;line-height:21px;color:#d6d6d6;">4</span>
<div class="b" style="left:1343.1px;top:371.2px;width:174px;height:144.0px;box-sizing:border-box;border:2.1px solid #000;background:linear-gradient(#ffff40,#ffff00 30%,#f0f000 50%,#a8a800 80%,#686800)"></div>
<div class="b" style="left:730.5px;top:770.5px;width:837.5px;height:227.0px;background:#000;"></div>
<div class="b" style="left:755.0px;top:779px;width:83.0px;height:167px;box-sizing:border-box;border:2px solid #e9e9e9;background:linear-gradient(#fcfffc 50%,#ffffff 50%)"></div>
<span class="t" style="left:773.0px;top:951.8px;font-size:17.4px;line-height:17.4px;color:#fff;letter-spacing:0.810px;">White</span>
<div class="b" style="left:851.3px;top:779px;width:83.0px;height:167px;box-sizing:border-box;border:2px solid #e9e9e9;background:linear-gradient(#e4e3e1 50%,#e6e6e6 50%)"></div>
<span class="t" style="left:861.9px;top:951.8px;font-size:17.4px;line-height:17.4px;color:#fff;letter-spacing:-0.063px;">Gray 80</span>
<div class="b" style="left:947.6px;top:779px;width:83.0px;height:167px;box-sizing:border-box;border:2px solid #e9e9e9;background:linear-gradient(#cfcecc 50%,#d1d1d1 50%)"></div>
<span class="t" style="left:958.2px;top:951.8px;font-size:17.4px;line-height:17.4px;color:#fff;letter-spacing:-0.048px;">Gray 65</span>
<div class="b" style="left:1043.9px;top:779px;width:83.0px;height:167px;box-sizing:border-box;border:2px solid #e9e9e9;background:linear-gradient(#b9b5b4 50%,#bababa 50%)"></div>
<span class="t" style="left:1054.5px;top:951.8px;font-size:17.4px;line-height:17.4px;color:#fff;letter-spacing:-0.063px;">Gray 50</span>
<div class="b" style="left:1140.2px;top:779px;width:83.0px;height:167px;box-sizing:border-box;border:2px solid #e9e9e9;background:linear-gradient(#9d9b98 50%,#9e9e9e 50%)"></div>
<span class="t" style="left:1150.8px;top:951.8px;font-size:17.4px;line-height:17.4px;color:#fff;letter-spacing:-0.048px;">Gray 35</span>
<div class="b" style="left:1236.5px;top:779px;width:83.0px;height:167px;box-sizing:border-box;border:2px solid #e9e9e9;background:linear-gradient(#000000 50%,#000000 50%)"></div>
<span class="t" style="left:1256.1px;top:951.8px;font-size:17.4px;line-height:17.4px;color:#fff;letter-spacing:-0.059px;">Black</span>
<div class="b" style="left:1332.8px;top:779px;width:83.0px;height:167px;box-sizing:border-box;border:2px solid #e9e9e9;background:linear-gradient(#7d4d3a 50%,#735244 50%)"></div>
<span class="t" style="left:1336.9px;top:951.8px;font-size:17.4px;line-height:17.4px;color:#fff;letter-spacing:-0.124px;">Dark Skin</span>
<div class="b" style="left:1429.1px;top:779px;width:83.0px;height:167px;box-sizing:border-box;border:2px solid #e9e9e9;background:linear-gradient(#cf917b 50%,#c29682 50%)"></div>
<span class="t" style="left:1432.2px;top:951.8px;font-size:17.4px;line-height:17.4px;color:#fff;letter-spacing:0.006px;">Light Skin</span>
<div class="b" style="left:1525.4px;top:779px;width:42.6px;height:167px;box-sizing:border-box;border:2px solid #e9e9e9;border-right:none;background:linear-gradient(#4d7aa0 50%,#627a9d 50%)"></div>
<span class="t" style="left:1532.6px;top:951.8px;font-size:17.4px;line-height:17.4px;color:#fff;letter-spacing:0.263px;">Blue</span>
<span class="t" style="left:734px;top:789px;width:18px;height:54px;font-size:17.4px;line-height:18px;color:#fff;writing-mode:vertical-rl;transform:rotate(180deg);text-align:center;letter-spacing:.2px">Actual</span>
<span class="t" style="left:734px;top:880px;width:18px;height:56px;font-size:17.4px;line-height:18px;color:#fff;writing-mode:vertical-rl;transform:rotate(180deg);text-align:center;letter-spacing:.2px">Target</span>
<div class="b" style="left:730.5px;top:998.0px;width:837.5px;height:21.5px;background:#606060;border-radius:3px;"></div>
<div class="b" style="left:755px;top:999.5px;width:223px;height:18.5px;border-radius:9px;background:#444"></div>
<div class="b" style="left:732px;top:999.5px;width:20px;height:18.5px;border-radius:4px;background:#757575"></div>
<svg style="left:737.5px;top:1002.5px" width="9" height="13" viewBox="0 0 9 13"><path d="M9 0v13L0 6.5z" fill="#3a3a3a"/></svg>
<div class="b" style="left:1546.5px;top:999.5px;width:20px;height:18.5px;border-radius:4px;background:#757575"></div>
<svg style="left:1553px;top:1002.5px" width="9" height="13" viewBox="0 0 9 13"><path d="M0 0v13L9 6.5z" fill="#3a3a3a"/></svg>
<span class="t" style="left:271.0px;top:1031.7px;font-size:40.5px;line-height:40.5px;color:#f2f2f2;letter-spacing:0.711px;">Avg dE2000: 3.51</span>
<span class="t" style="left:262.8px;top:1088.5px;font-size:40.5px;line-height:40.5px;color:#f2f2f2;letter-spacing:1.213px;">Max dE2000: 6.48</span>
<span class="t" style="left:219.0px;top:1155.7px;font-size:40.5px;line-height:40.5px;color:#f2f2f2;letter-spacing:1.171px;">Current Reading</span>
<span class="t" style="left:220.7px;top:1211.2px;font-size:34px;line-height:34px;color:#f2f2f2;letter-spacing:0.723px;">x: 0.4334</span>
<span class="t" style="left:441.5px;top:1211.2px;font-size:34px;line-height:34px;color:#f2f2f2;letter-spacing:0.951px;">y: 0.537</span>
<span class="t" style="left:220.7px;top:1268.7px;font-size:34px;line-height:34px;color:#f2f2f2;letter-spacing:0.730px;">fL: 282.15</span>
<span class="t" style="left:219.6px;top:1317.0px;font-size:34px;line-height:34px;color:#f2f2f2;letter-spacing:1.582px;">cd/m²: 966.72</span>
<div class="b" style="left:653.7px;top:1040.0px;width:1906.3px;height:321.0px;background:#000;"></div>
<div class="b" style="left:655.2px;top:1041.5px;width:1905.3px;height:319.5px;background:#1a1a1a;"></div>
<div class="b" style="left:656.2px;top:1043.0px;width:1905.3px;height:34.0px;background:linear-gradient(#2e2e2e 0,#2e2e2e 46%,#1c1c1c 50%,#0e0e0e 100%);"></div>
<div class="b" style="left:656.2px;top:1041px;width:1901.8px;height:320px;overflow:hidden">
<span class="t" style="left:247.5px;top:10.6px;font-size:17.7px;line-height:17.7px;color:#f6f6f6;font-family:'DejaVu Sans','Liberation Sans',sans-serif;transform:scaleX(1.3216);transform-origin:0 50%;-webkit-text-stroke:.25px #f6f6f6;">White</span>
<span class="t" style="left:342.5px;top:10.6px;font-size:17.7px;line-height:17.7px;color:#f6f6f6;font-family:'DejaVu Sans','Liberation Sans',sans-serif;transform:scaleX(1.2544);transform-origin:0 50%;-webkit-text-stroke:.25px #f6f6f6;">Gray 80</span>
<span class="t" style="left:442.6px;top:10.6px;font-size:17.7px;line-height:17.7px;color:#f6f6f6;font-family:'DejaVu Sans','Liberation Sans',sans-serif;transform:scaleX(1.2506);transform-origin:0 50%;-webkit-text-stroke:.25px #f6f6f6;">Gray 65</span>
<span class="t" style="left:542.6px;top:10.6px;font-size:17.7px;line-height:17.7px;color:#f6f6f6;font-family:'DejaVu Sans','Liberation Sans',sans-serif;transform:scaleX(1.2544);transform-origin:0 50%;-webkit-text-stroke:.25px #f6f6f6;">Gray 50</span>
<span class="t" style="left:642.6px;top:10.6px;font-size:17.7px;line-height:17.7px;color:#f6f6f6;font-family:'DejaVu Sans','Liberation Sans',sans-serif;transform:scaleX(1.2550);transform-origin:0 50%;-webkit-text-stroke:.25px #f6f6f6;">Gray 35</span>
<span class="t" style="left:742.1px;top:10.6px;font-size:17.7px;line-height:17.7px;color:#f6f6f6;font-family:'DejaVu Sans','Liberation Sans',sans-serif;transform:scaleX(1.2642);transform-origin:0 50%;-webkit-text-stroke:.25px #f6f6f6;">Black</span>
<span class="t" style="left:815.3px;top:10.6px;font-size:17.7px;line-height:17.7px;color:#f6f6f6;font-family:'DejaVu Sans','Liberation Sans',sans-serif;transform:scaleX(1.2614);transform-origin:0 50%;-webkit-text-stroke:.25px #f6f6f6;">Dark Skin</span>
<span class="t" style="left:933.4px;top:10.6px;font-size:17.7px;line-height:17.7px;color:#f6f6f6;font-family:'DejaVu Sans','Liberation Sans',sans-serif;transform:scaleX(1.2641);transform-origin:0 50%;-webkit-text-stroke:.25px #f6f6f6;">Light Skin</span>
<span class="t" style="left:1055.5px;top:10.6px;font-size:17.7px;line-height:17.7px;color:#f6f6f6;font-family:'DejaVu Sans','Liberation Sans',sans-serif;transform:scaleX(1.2583);transform-origin:0 50%;-webkit-text-stroke:.25px #f6f6f6;">Blue Sky</span>
<span class="t" style="left:1162.9px;top:10.6px;font-size:17.7px;line-height:17.7px;color:#f6f6f6;font-family:'DejaVu Sans','Liberation Sans',sans-serif;transform:scaleX(1.3114);transform-origin:0 50%;-webkit-text-stroke:.25px #f6f6f6;">Foliage</span>
<span class="t" style="left:1257.6px;top:10.6px;font-size:17.7px;line-height:17.7px;color:#f6f6f6;font-family:'DejaVu Sans','Liberation Sans',sans-serif;transform:scaleX(1.2970);transform-origin:0 50%;-webkit-text-stroke:.25px #f6f6f6;">Blue Flower</span>
<span class="t" style="left:1404.1px;top:10.6px;font-size:17.7px;line-height:17.7px;color:#f6f6f6;font-family:'DejaVu Sans','Liberation Sans',sans-serif;transform:scaleX(1.2921);transform-origin:0 50%;-webkit-text-stroke:.25px #f6f6f6;">Bluish Green</span>
<span class="t" style="left:1562.1px;top:10.6px;font-size:17.7px;line-height:17.7px;color:#f6f6f6;font-family:'DejaVu Sans','Liberation Sans',sans-serif;transform:scaleX(1.2684);transform-origin:0 50%;-webkit-text-stroke:.25px #f6f6f6;">Orange</span>
<span class="t" style="left:1656.9px;top:10.6px;font-size:17.7px;line-height:17.7px;color:#f6f6f6;font-family:'DejaVu Sans','Liberation Sans',sans-serif;transform:scaleX(1.2969);transform-origin:0 50%;-webkit-text-stroke:.25px #f6f6f6;">Purplish Blue</span>
<span class="t" style="left:1818.5px;top:10.6px;font-size:17.7px;line-height:17.7px;color:#f6f6f6;font-family:'DejaVu Sans','Liberation Sans',sans-serif;transform:scaleX(1.1566);transform-origin:0 50%;-webkit-text-stroke:.25px #f6f6f6;">Moderate Red</span>
<div class="b" style="left:0;top:35.8px;width:1910px;height:33.2px;background:#434343"></div>
<span class="t" style="left:20.0px;top:41.9px;font-size:20px;line-height:20px;color:#f2f2f2;font-weight:700;font-family:'DejaVu Sans','Liberation Sans',sans-serif;transform:scaleX(1.1300);transform-origin:0 50%;">x: CIE31</span>
<span class="t" style="left:233.7px;top:41.9px;font-size:20px;line-height:20px;color:#f4f4f4;font-family:'DejaVu Sans','Liberation Sans',sans-serif;transform:scaleX(1.1700);transform-origin:0 50%;">0.31</span>
<span class="t" style="left:343.2px;top:41.9px;font-size:20px;line-height:20px;color:#f4f4f4;font-family:'DejaVu Sans','Liberation Sans',sans-serif;transform:scaleX(1.1700);transform-origin:0 50%;">0.31</span>
<span class="t" style="left:443.3px;top:41.9px;font-size:20px;line-height:20px;color:#f4f4f4;font-family:'DejaVu Sans','Liberation Sans',sans-serif;transform:scaleX(1.1700);transform-origin:0 50%;">0.32</span>
<span class="t" style="left:543.3px;top:41.9px;font-size:20px;line-height:20px;color:#f4f4f4;font-family:'DejaVu Sans','Liberation Sans',sans-serif;transform:scaleX(1.1700);transform-origin:0 50%;">0.32</span>
<span class="t" style="left:643.3px;top:41.9px;font-size:20px;line-height:20px;color:#f4f4f4;font-family:'DejaVu Sans','Liberation Sans',sans-serif;transform:scaleX(1.1700);transform-origin:0 50%;">0.32</span>
<span class="t" style="left:743.7px;top:41.9px;font-size:20px;line-height:20px;color:#f4f4f4;font-family:'DejaVu Sans','Liberation Sans',sans-serif;transform:scaleX(1.1700);transform-origin:0 50%;">0.00</span>
<span class="t" style="left:816.9px;top:41.9px;font-size:20px;line-height:20px;color:#f4f4f4;font-family:'DejaVu Sans','Liberation Sans',sans-serif;transform:scaleX(1.1700);transform-origin:0 50%;">0.44</span>
<span class="t" style="left:935.0px;top:41.9px;font-size:20px;line-height:20px;color:#f4f4f4;font-family:'DejaVu Sans','Liberation Sans',sans-serif;transform:scaleX(1.1700);transform-origin:0 50%;">0.40</span>
<span class="t" style="left:1057.1px;top:41.9px;font-size:20px;line-height:20px;color:#f4f4f4;font-family:'DejaVu Sans','Liberation Sans',sans-serif;transform:scaleX(1.1700);transform-origin:0 50%;">0.24</span>
<span class="t" style="left:1164.6px;top:41.9px;font-size:20px;line-height:20px;color:#f4f4f4;font-family:'DejaVu Sans','Liberation Sans',sans-serif;transform:scaleX(1.1700);transform-origin:0 50%;">0.34</span>
<span class="t" style="left:1259.3px;top:41.9px;font-size:20px;line-height:20px;color:#f4f4f4;font-family:'DejaVu Sans','Liberation Sans',sans-serif;transform:scaleX(1.1700);transform-origin:0 50%;">0.27</span>
<span class="t" style="left:1405.8px;top:41.9px;font-size:20px;line-height:20px;color:#f4f4f4;font-family:'DejaVu Sans','Liberation Sans',sans-serif;transform:scaleX(1.1700);transform-origin:0 50%;">0.23</span>
<span class="t" style="left:1562.8px;top:41.9px;font-size:20px;line-height:20px;color:#f4f4f4;font-family:'DejaVu Sans','Liberation Sans',sans-serif;transform:scaleX(1.1700);transform-origin:0 50%;">0.56</span>
<span class="t" style="left:1658.6px;top:41.9px;font-size:20px;line-height:20px;color:#f4f4f4;font-family:'DejaVu Sans','Liberation Sans',sans-serif;transform:scaleX(1.1700);transform-origin:0 50%;">0.20</span>
<span class="t" style="left:1819.9px;top:41.9px;font-size:20px;line-height:20px;color:#f4f4f4;font-family:'DejaVu Sans','Liberation Sans',sans-serif;transform:scaleX(1.1700);transform-origin:0 50%;">0.51</span>
<div class="b" style="left:0;top:68.9px;width:1910px;height:33.2px;background:#808080"></div>
<span class="t" style="left:20.1px;top:75.0px;font-size:20px;line-height:20px;color:#f2f2f2;font-weight:700;font-family:'DejaVu Sans','Liberation Sans',sans-serif;transform:scaleX(1.1300);transform-origin:0 50%;">y: CIE31</span>
<span class="t" style="left:233.7px;top:75.0px;font-size:20px;line-height:20px;color:#f4f4f4;font-family:'DejaVu Sans','Liberation Sans',sans-serif;transform:scaleX(1.1700);transform-origin:0 50%;">0.33</span>
<span class="t" style="left:343.2px;top:75.0px;font-size:20px;line-height:20px;color:#f4f4f4;font-family:'DejaVu Sans','Liberation Sans',sans-serif;transform:scaleX(1.1700);transform-origin:0 50%;">0.33</span>
<span class="t" style="left:443.3px;top:75.0px;font-size:20px;line-height:20px;color:#f4f4f4;font-family:'DejaVu Sans','Liberation Sans',sans-serif;transform:scaleX(1.1700);transform-origin:0 50%;">0.33</span>
<span class="t" style="left:543.3px;top:75.0px;font-size:20px;line-height:20px;color:#f4f4f4;font-family:'DejaVu Sans','Liberation Sans',sans-serif;transform:scaleX(1.1700);transform-origin:0 50%;">0.33</span>
<span class="t" style="left:643.3px;top:75.0px;font-size:20px;line-height:20px;color:#f4f4f4;font-family:'DejaVu Sans','Liberation Sans',sans-serif;transform:scaleX(1.1700);transform-origin:0 50%;">0.33</span>
<span class="t" style="left:743.7px;top:75.0px;font-size:20px;line-height:20px;color:#f4f4f4;font-family:'DejaVu Sans','Liberation Sans',sans-serif;transform:scaleX(1.1700);transform-origin:0 50%;">0.00</span>
<span class="t" style="left:816.9px;top:75.0px;font-size:20px;line-height:20px;color:#f4f4f4;font-family:'DejaVu Sans','Liberation Sans',sans-serif;transform:scaleX(1.1700);transform-origin:0 50%;">0.37</span>
<span class="t" style="left:935.0px;top:75.0px;font-size:20px;line-height:20px;color:#f4f4f4;font-family:'DejaVu Sans','Liberation Sans',sans-serif;transform:scaleX(1.1700);transform-origin:0 50%;">0.36</span>
<span class="t" style="left:1057.1px;top:75.0px;font-size:20px;line-height:20px;color:#f4f4f4;font-family:'DejaVu Sans','Liberation Sans',sans-serif;transform:scaleX(1.1700);transform-origin:0 50%;">0.26</span>
<span class="t" style="left:1164.6px;top:75.0px;font-size:20px;line-height:20px;color:#f4f4f4;font-family:'DejaVu Sans','Liberation Sans',sans-serif;transform:scaleX(1.1700);transform-origin:0 50%;">0.46</span>
<span class="t" style="left:1259.3px;top:75.0px;font-size:20px;line-height:20px;color:#f4f4f4;font-family:'DejaVu Sans','Liberation Sans',sans-serif;transform:scaleX(1.1700);transform-origin:0 50%;">0.25</span>
<span class="t" style="left:1405.8px;top:75.0px;font-size:20px;line-height:20px;color:#f4f4f4;font-family:'DejaVu Sans','Liberation Sans',sans-serif;transform:scaleX(1.1700);transform-origin:0 50%;">0.37</span>
<span class="t" style="left:1562.8px;top:75.0px;font-size:20px;line-height:20px;color:#f4f4f4;font-family:'DejaVu Sans','Liberation Sans',sans-serif;transform:scaleX(1.1700);transform-origin:0 50%;">0.41</span>
<span class="t" style="left:1658.6px;top:75.0px;font-size:20px;line-height:20px;color:#f4f4f4;font-family:'DejaVu Sans','Liberation Sans',sans-serif;transform:scaleX(1.1700);transform-origin:0 50%;">0.18</span>
<span class="t" style="left:1819.9px;top:75.0px;font-size:20px;line-height:20px;color:#f4f4f4;font-family:'DejaVu Sans','Liberation Sans',sans-serif;transform:scaleX(1.1700);transform-origin:0 50%;">0.31</span>
<div class="b" style="left:0;top:102.0px;width:1910px;height:33.2px;background:#434343"></div>
<span class="t" style="left:20.5px;top:108.1px;font-size:20px;line-height:20px;color:#f2f2f2;font-weight:700;font-family:'DejaVu Sans','Liberation Sans',sans-serif;transform:scaleX(1.1300);transform-origin:0 50%;">Y</span>
<span class="t" style="left:232.7px;top:108.1px;font-size:20px;line-height:20px;color:#f4f4f4;font-family:'DejaVu Sans','Liberation Sans',sans-serif;transform:scaleX(1.1700);transform-origin:0 50%;">1007.24</span>
<span class="t" style="left:342.8px;top:108.1px;font-size:20px;line-height:20px;color:#f4f4f4;font-family:'DejaVu Sans','Liberation Sans',sans-serif;transform:scaleX(1.1700);transform-origin:0 50%;">777.36</span>
<span class="t" style="left:443.3px;top:108.1px;font-size:20px;line-height:20px;color:#f4f4f4;font-family:'DejaVu Sans','Liberation Sans',sans-serif;transform:scaleX(1.1700);transform-origin:0 50%;">611.95</span>
<span class="t" style="left:543.7px;top:108.1px;font-size:20px;line-height:20px;color:#f4f4f4;font-family:'DejaVu Sans','Liberation Sans',sans-serif;transform:scaleX(1.1700);transform-origin:0 50%;">465.30</span>
<span class="t" style="left:643.0px;top:108.1px;font-size:20px;line-height:20px;color:#f4f4f4;font-family:'DejaVu Sans','Liberation Sans',sans-serif;transform:scaleX(1.1700);transform-origin:0 50%;">325.35</span>
<span class="t" style="left:743.7px;top:108.1px;font-size:20px;line-height:20px;color:#f4f4f4;font-family:'DejaVu Sans','Liberation Sans',sans-serif;transform:scaleX(1.1700);transform-origin:0 50%;">0.00</span>
<span class="t" style="left:815.9px;top:108.1px;font-size:20px;line-height:20px;color:#f4f4f4;font-family:'DejaVu Sans','Liberation Sans',sans-serif;transform:scaleX(1.1700);transform-origin:0 50%;">100.30</span>
<span class="t" style="left:934.7px;top:108.1px;font-size:20px;line-height:20px;color:#f4f4f4;font-family:'DejaVu Sans','Liberation Sans',sans-serif;transform:scaleX(1.1700);transform-origin:0 50%;">348.79</span>
<span class="t" style="left:1056.1px;top:108.1px;font-size:20px;line-height:20px;color:#f4f4f4;font-family:'DejaVu Sans','Liberation Sans',sans-serif;transform:scaleX(1.1700);transform-origin:0 50%;">174.39</span>
<span class="t" style="left:1163.6px;top:108.1px;font-size:20px;line-height:20px;color:#f4f4f4;font-family:'DejaVu Sans','Liberation Sans',sans-serif;transform:scaleX(1.1700);transform-origin:0 50%;">124.69</span>
<span class="t" style="left:1259.2px;top:108.1px;font-size:20px;line-height:20px;color:#f4f4f4;font-family:'DejaVu Sans','Liberation Sans',sans-serif;transform:scaleX(1.1700);transform-origin:0 50%;">222.60</span>
<span class="t" style="left:1405.5px;top:108.1px;font-size:20px;line-height:20px;color:#f4f4f4;font-family:'DejaVu Sans','Liberation Sans',sans-serif;transform:scaleX(1.1700);transform-origin:0 50%;">382.24</span>
<span class="t" style="left:1562.5px;top:108.1px;font-size:20px;line-height:20px;color:#f4f4f4;font-family:'DejaVu Sans','Liberation Sans',sans-serif;transform:scaleX(1.1700);transform-origin:0 50%;">304.34</span>
<span class="t" style="left:1657.6px;top:108.1px;font-size:20px;line-height:20px;color:#f4f4f4;font-family:'DejaVu Sans','Liberation Sans',sans-serif;transform:scaleX(1.1700);transform-origin:0 50%;">103.76</span>
<span class="t" style="left:1818.9px;top:108.1px;font-size:20px;line-height:20px;color:#f4f4f4;font-family:'DejaVu Sans','Liberation Sans',sans-serif;transform:scaleX(1.1700);transform-origin:0 50%;">198.98</span>
<div class="b" style="left:0;top:135.1px;width:1910px;height:33.2px;background:#808080"></div>
<span class="t" style="left:20.3px;top:141.2px;font-size:20px;line-height:20px;color:#f2f2f2;font-weight:700;font-family:'DejaVu Sans','Liberation Sans',sans-serif;transform:scaleX(1.1300);transform-origin:0 50%;">Target x:CIE31</span>
<span class="t" style="left:233.7px;top:141.2px;font-size:20px;line-height:20px;color:#f4f4f4;font-family:'DejaVu Sans','Liberation Sans',sans-serif;transform:scaleX(1.1700);transform-origin:0 50%;">0.31</span>
<span class="t" style="left:343.2px;top:141.2px;font-size:20px;line-height:20px;color:#f4f4f4;font-family:'DejaVu Sans','Liberation Sans',sans-serif;transform:scaleX(1.1700);transform-origin:0 50%;">0.31</span>
<span class="t" style="left:443.3px;top:141.2px;font-size:20px;line-height:20px;color:#f4f4f4;font-family:'DejaVu Sans','Liberation Sans',sans-serif;transform:scaleX(1.1700);transform-origin:0 50%;">0.31</span>
<span class="t" style="left:543.3px;top:141.2px;font-size:20px;line-height:20px;color:#f4f4f4;font-family:'DejaVu Sans','Liberation Sans',sans-serif;transform:scaleX(1.1700);transform-origin:0 50%;">0.31</span>
<span class="t" style="left:643.3px;top:141.2px;font-size:20px;line-height:20px;color:#f4f4f4;font-family:'DejaVu Sans','Liberation Sans',sans-serif;transform:scaleX(1.1700);transform-origin:0 50%;">0.31</span>
<span class="t" style="left:743.7px;top:141.2px;font-size:20px;line-height:20px;color:#f4f4f4;font-family:'DejaVu Sans','Liberation Sans',sans-serif;transform:scaleX(1.1700);transform-origin:0 50%;">0.31</span>
<span class="t" style="left:816.9px;top:141.2px;font-size:20px;line-height:20px;color:#f4f4f4;font-family:'DejaVu Sans','Liberation Sans',sans-serif;transform:scaleX(1.1700);transform-origin:0 50%;">0.41</span>
<span class="t" style="left:935.0px;top:141.2px;font-size:20px;line-height:20px;color:#f4f4f4;font-family:'DejaVu Sans','Liberation Sans',sans-serif;transform:scaleX(1.1700);transform-origin:0 50%;">0.38</span>
<span class="t" style="left:1057.1px;top:141.2px;font-size:20px;line-height:20px;color:#f4f4f4;font-family:'DejaVu Sans','Liberation Sans',sans-serif;transform:scaleX(1.1700);transform-origin:0 50%;">0.25</span>
<span class="t" style="left:1164.6px;top:141.2px;font-size:20px;line-height:20px;color:#f4f4f4;font-family:'DejaVu Sans','Liberation Sans',sans-serif;transform:scaleX(1.1700);transform-origin:0 50%;">0.34</span>
<span class="t" style="left:1259.3px;top:141.2px;font-size:20px;line-height:20px;color:#f4f4f4;font-family:'DejaVu Sans','Liberation Sans',sans-serif;transform:scaleX(1.1700);transform-origin:0 50%;">0.27</span>
<span class="t" style="left:1405.8px;top:141.2px;font-size:20px;line-height:20px;color:#f4f4f4;font-family:'DejaVu Sans','Liberation Sans',sans-serif;transform:scaleX(1.1700);transform-origin:0 50%;">0.26</span>
<span class="t" style="left:1562.8px;top:141.2px;font-size:20px;line-height:20px;color:#f4f4f4;font-family:'DejaVu Sans','Liberation Sans',sans-serif;transform:scaleX(1.1700);transform-origin:0 50%;">0.51</span>
<span class="t" style="left:1658.6px;top:141.2px;font-size:20px;line-height:20px;color:#f4f4f4;font-family:'DejaVu Sans','Liberation Sans',sans-serif;transform:scaleX(1.1700);transform-origin:0 50%;">0.21</span>
<span class="t" style="left:1819.9px;top:141.2px;font-size:20px;line-height:20px;color:#f4f4f4;font-family:'DejaVu Sans','Liberation Sans',sans-serif;transform:scaleX(1.1700);transform-origin:0 50%;">0.46</span>
<div class="b" style="left:0;top:168.2px;width:1910px;height:33.2px;background:#434343"></div>
<span class="t" style="left:20.3px;top:174.3px;font-size:20px;line-height:20px;color:#f2f2f2;font-weight:700;font-family:'DejaVu Sans','Liberation Sans',sans-serif;transform:scaleX(1.1300);transform-origin:0 50%;">Target y:CIE31</span>
<span class="t" style="left:233.7px;top:174.3px;font-size:20px;line-height:20px;color:#f4f4f4;font-family:'DejaVu Sans','Liberation Sans',sans-serif;transform:scaleX(1.1700);transform-origin:0 50%;">0.33</span>
<span class="t" style="left:343.2px;top:174.3px;font-size:20px;line-height:20px;color:#f4f4f4;font-family:'DejaVu Sans','Liberation Sans',sans-serif;transform:scaleX(1.1700);transform-origin:0 50%;">0.33</span>
<span class="t" style="left:443.3px;top:174.3px;font-size:20px;line-height:20px;color:#f4f4f4;font-family:'DejaVu Sans','Liberation Sans',sans-serif;transform:scaleX(1.1700);transform-origin:0 50%;">0.33</span>
<span class="t" style="left:543.3px;top:174.3px;font-size:20px;line-height:20px;color:#f4f4f4;font-family:'DejaVu Sans','Liberation Sans',sans-serif;transform:scaleX(1.1700);transform-origin:0 50%;">0.33</span>
<span class="t" style="left:643.3px;top:174.3px;font-size:20px;line-height:20px;color:#f4f4f4;font-family:'DejaVu Sans','Liberation Sans',sans-serif;transform:scaleX(1.1700);transform-origin:0 50%;">0.33</span>
<span class="t" style="left:743.7px;top:174.3px;font-size:20px;line-height:20px;color:#f4f4f4;font-family:'DejaVu Sans','Liberation Sans',sans-serif;transform:scaleX(1.1700);transform-origin:0 50%;">0.33</span>
<span class="t" style="left:816.9px;top:174.3px;font-size:20px;line-height:20px;color:#f4f4f4;font-family:'DejaVu Sans','Liberation Sans',sans-serif;transform:scaleX(1.1700);transform-origin:0 50%;">0.36</span>
<span class="t" style="left:935.0px;top:174.3px;font-size:20px;line-height:20px;color:#f4f4f4;font-family:'DejaVu Sans','Liberation Sans',sans-serif;transform:scaleX(1.1700);transform-origin:0 50%;">0.35</span>
<span class="t" style="left:1057.1px;top:174.3px;font-size:20px;line-height:20px;color:#f4f4f4;font-family:'DejaVu Sans','Liberation Sans',sans-serif;transform:scaleX(1.1700);transform-origin:0 50%;">0.27</span>
<span class="t" style="left:1164.6px;top:174.3px;font-size:20px;line-height:20px;color:#f4f4f4;font-family:'DejaVu Sans','Liberation Sans',sans-serif;transform:scaleX(1.1700);transform-origin:0 50%;">0.43</span>
<span class="t" style="left:1259.3px;top:174.3px;font-size:20px;line-height:20px;color:#f4f4f4;font-family:'DejaVu Sans','Liberation Sans',sans-serif;transform:scaleX(1.1700);transform-origin:0 50%;">0.25</span>
<span class="t" style="left:1405.8px;top:174.3px;font-size:20px;line-height:20px;color:#f4f4f4;font-family:'DejaVu Sans','Liberation Sans',sans-serif;transform:scaleX(1.1700);transform-origin:0 50%;">0.36</span>
<span class="t" style="left:1562.8px;top:174.3px;font-size:20px;line-height:20px;color:#f4f4f4;font-family:'DejaVu Sans','Liberation Sans',sans-serif;transform:scaleX(1.1700);transform-origin:0 50%;">0.41</span>
<span class="t" style="left:1658.6px;top:174.3px;font-size:20px;line-height:20px;color:#f4f4f4;font-family:'DejaVu Sans','Liberation Sans',sans-serif;transform:scaleX(1.1700);transform-origin:0 50%;">0.19</span>
<span class="t" style="left:1819.9px;top:174.3px;font-size:20px;line-height:20px;color:#f4f4f4;font-family:'DejaVu Sans','Liberation Sans',sans-serif;transform:scaleX(1.1700);transform-origin:0 50%;">0.31</span>
<div class="b" style="left:0;top:201.3px;width:1910px;height:33.2px;background:#808080"></div>
<span class="t" style="left:20.3px;top:207.4px;font-size:20px;line-height:20px;color:#f2f2f2;font-weight:700;font-family:'DejaVu Sans','Liberation Sans',sans-serif;transform:scaleX(1.1300);transform-origin:0 50%;">Target Y</span>
<span class="t" style="left:232.7px;top:207.4px;font-size:20px;line-height:20px;color:#f4f4f4;font-family:'DejaVu Sans','Liberation Sans',sans-serif;transform:scaleX(1.1700);transform-origin:0 50%;">1007.24</span>
<span class="t" style="left:343.2px;top:207.4px;font-size:20px;line-height:20px;color:#f4f4f4;font-family:'DejaVu Sans','Liberation Sans',sans-serif;transform:scaleX(1.1700);transform-origin:0 50%;">802.69</span>
<span class="t" style="left:443.3px;top:207.4px;font-size:20px;line-height:20px;color:#f4f4f4;font-family:'DejaVu Sans','Liberation Sans',sans-serif;transform:scaleX(1.1700);transform-origin:0 50%;">650.23</span>
<span class="t" style="left:543.0px;top:207.4px;font-size:20px;line-height:20px;color:#f4f4f4;font-family:'DejaVu Sans','Liberation Sans',sans-serif;transform:scaleX(1.1700);transform-origin:0 50%;">503.12</span>
<span class="t" style="left:643.0px;top:207.4px;font-size:20px;line-height:20px;color:#f4f4f4;font-family:'DejaVu Sans','Liberation Sans',sans-serif;transform:scaleX(1.1700);transform-origin:0 50%;">351.39</span>
<span class="t" style="left:743.7px;top:207.4px;font-size:20px;line-height:20px;color:#f4f4f4;font-family:'DejaVu Sans','Liberation Sans',sans-serif;transform:scaleX(1.1700);transform-origin:0 50%;">0.00</span>
<span class="t" style="left:817.0px;top:207.4px;font-size:20px;line-height:20px;color:#f4f4f4;font-family:'DejaVu Sans','Liberation Sans',sans-serif;transform:scaleX(1.1700);transform-origin:0 50%;">98.20</span>
<span class="t" style="left:934.7px;top:207.4px;font-size:20px;line-height:20px;color:#f4f4f4;font-family:'DejaVu Sans','Liberation Sans',sans-serif;transform:scaleX(1.1700);transform-origin:0 50%;">351.09</span>
<span class="t" style="left:1056.1px;top:207.4px;font-size:20px;line-height:20px;color:#f4f4f4;font-family:'DejaVu Sans','Liberation Sans',sans-serif;transform:scaleX(1.1700);transform-origin:0 50%;">192.34</span>
<span class="t" style="left:1163.6px;top:207.4px;font-size:20px;line-height:20px;color:#f4f4f4;font-family:'DejaVu Sans','Liberation Sans',sans-serif;transform:scaleX(1.1700);transform-origin:0 50%;">132.39</span>
<span class="t" style="left:1259.2px;top:207.4px;font-size:20px;line-height:20px;color:#f4f4f4;font-family:'DejaVu Sans','Liberation Sans',sans-serif;transform:scaleX(1.1700);transform-origin:0 50%;">236.73</span>
<span class="t" style="left:1406.2px;top:207.4px;font-size:20px;line-height:20px;color:#f4f4f4;font-family:'DejaVu Sans','Liberation Sans',sans-serif;transform:scaleX(1.1700);transform-origin:0 50%;">426.73</span>
<span class="t" style="left:1562.7px;top:207.4px;font-size:20px;line-height:20px;color:#f4f4f4;font-family:'DejaVu Sans','Liberation Sans',sans-serif;transform:scaleX(1.1700);transform-origin:0 50%;">289.78</span>
<span class="t" style="left:1657.6px;top:207.4px;font-size:20px;line-height:20px;color:#f4f4f4;font-family:'DejaVu Sans','Liberation Sans',sans-serif;transform:scaleX(1.1700);transform-origin:0 50%;">117.90</span>
<span class="t" style="left:1818.9px;top:207.4px;font-size:20px;line-height:20px;color:#f4f4f4;font-family:'DejaVu Sans','Liberation Sans',sans-serif;transform:scaleX(1.1700);transform-origin:0 50%;">188.51</span>
<div class="b" style="left:0;top:234.4px;width:1910px;height:33.2px;background:#434343"></div>
<span class="t" style="left:20.2px;top:240.5px;font-size:20px;line-height:20px;color:#f2f2f2;font-weight:700;font-family:'DejaVu Sans','Liberation Sans',sans-serif;transform:scaleX(1.1300);transform-origin:0 50%;">ΔE 2000</span>
<span class="t" style="left:233.4px;top:240.5px;font-size:20px;line-height:20px;color:#f4f4f4;font-family:'DejaVu Sans','Liberation Sans',sans-serif;transform:scaleX(1.1700);transform-origin:0 50%;">3.03</span>
<span class="t" style="left:343.2px;top:240.5px;font-size:20px;line-height:20px;color:#f4f4f4;font-family:'DejaVu Sans','Liberation Sans',sans-serif;transform:scaleX(1.1700);transform-origin:0 50%;">0.98</span>
<span class="t" style="left:443.2px;top:240.5px;font-size:20px;line-height:20px;color:#f4f4f4;font-family:'DejaVu Sans','Liberation Sans',sans-serif;transform:scaleX(1.1700);transform-origin:0 50%;">2.20</span>
<span class="t" style="left:543.2px;top:240.5px;font-size:20px;line-height:20px;color:#f4f4f4;font-family:'DejaVu Sans','Liberation Sans',sans-serif;transform:scaleX(1.1700);transform-origin:0 50%;">2.80</span>
<span class="t" style="left:643.2px;top:240.5px;font-size:20px;line-height:20px;color:#f4f4f4;font-family:'DejaVu Sans','Liberation Sans',sans-serif;transform:scaleX(1.1700);transform-origin:0 50%;">2.21</span>
<span class="t" style="left:743.7px;top:240.5px;font-size:20px;line-height:20px;color:#f4f4f4;font-family:'DejaVu Sans','Liberation Sans',sans-serif;transform:scaleX(1.1700);transform-origin:0 50%;">0.00</span>
<span class="t" style="left:816.6px;top:240.5px;font-size:20px;line-height:20px;color:#f4f4f4;font-family:'DejaVu Sans','Liberation Sans',sans-serif;transform:scaleX(1.1700);transform-origin:0 50%;">3.47</span>
<span class="t" style="left:934.7px;top:240.5px;font-size:20px;line-height:20px;color:#f4f4f4;font-family:'DejaVu Sans','Liberation Sans',sans-serif;transform:scaleX(1.1700);transform-origin:0 50%;">3.82</span>
<span class="t" style="left:1056.8px;top:240.5px;font-size:20px;line-height:20px;color:#f4f4f4;font-family:'DejaVu Sans','Liberation Sans',sans-serif;transform:scaleX(1.1700);transform-origin:0 50%;">3.23</span>
<span class="t" style="left:1164.5px;top:240.5px;font-size:20px;line-height:20px;color:#f4f4f4;font-family:'DejaVu Sans','Liberation Sans',sans-serif;transform:scaleX(1.1700);transform-origin:0 50%;">2.55</span>
<span class="t" style="left:1259.2px;top:240.5px;font-size:20px;line-height:20px;color:#f4f4f4;font-family:'DejaVu Sans','Liberation Sans',sans-serif;transform:scaleX(1.1700);transform-origin:0 50%;">2.20</span>
<span class="t" style="left:1405.8px;top:240.5px;font-size:20px;line-height:20px;color:#f4f4f4;font-family:'DejaVu Sans','Liberation Sans',sans-serif;transform:scaleX(1.1700);transform-origin:0 50%;">6.00</span>
<span class="t" style="left:1562.5px;top:240.5px;font-size:20px;line-height:20px;color:#f4f4f4;font-family:'DejaVu Sans','Liberation Sans',sans-serif;transform:scaleX(1.1700);transform-origin:0 50%;">5.18</span>
<span class="t" style="left:1658.5px;top:240.5px;font-size:20px;line-height:20px;color:#f4f4f4;font-family:'DejaVu Sans','Liberation Sans',sans-serif;transform:scaleX(1.1700);transform-origin:0 50%;">2.36</span>
<span class="t" style="left:1820.3px;top:240.5px;font-size:20px;line-height:20px;color:#f4f4f4;font-family:'DejaVu Sans','Liberation Sans',sans-serif;transform:scaleX(1.1700);transform-origin:0 50%;">4.61</span>
<div class="b" style="left:0;top:267.5px;width:1910px;height:33.2px;background:#808080"></div>
<span class="t" style="left:20.2px;top:273.6px;font-size:20px;line-height:20px;color:#f2f2f2;font-weight:700;font-family:'DejaVu Sans','Liberation Sans',sans-serif;transform:scaleX(1.1300);transform-origin:0 50%;">ΔE ITP</span>
<span class="t" style="left:232.7px;top:273.6px;font-size:20px;line-height:20px;color:#f4f4f4;font-family:'DejaVu Sans','Liberation Sans',sans-serif;transform:scaleX(1.1700);transform-origin:0 50%;">1.87</span>
<span class="t" style="left:343.1px;top:273.6px;font-size:20px;line-height:20px;color:#f4f4f4;font-family:'DejaVu Sans','Liberation Sans',sans-serif;transform:scaleX(1.1700);transform-origin:0 50%;">2.66</span>
<span class="t" style="left:443.0px;top:273.6px;font-size:20px;line-height:20px;color:#f4f4f4;font-family:'DejaVu Sans','Liberation Sans',sans-serif;transform:scaleX(1.1700);transform-origin:0 50%;">5.01</span>
<span class="t" style="left:543.3px;top:273.6px;font-size:20px;line-height:20px;color:#f4f4f4;font-family:'DejaVu Sans','Liberation Sans',sans-serif;transform:scaleX(1.1700);transform-origin:0 50%;">6.43</span>
<span class="t" style="left:643.3px;top:273.6px;font-size:20px;line-height:20px;color:#f4f4f4;font-family:'DejaVu Sans','Liberation Sans',sans-serif;transform:scaleX(1.1700);transform-origin:0 50%;">6.20</span>
<span class="t" style="left:743.7px;top:273.6px;font-size:20px;line-height:20px;color:#f4f4f4;font-family:'DejaVu Sans','Liberation Sans',sans-serif;transform:scaleX(1.1700);transform-origin:0 50%;">8.27</span>
<span class="t" style="left:815.9px;top:273.6px;font-size:20px;line-height:20px;color:#f4f4f4;font-family:'DejaVu Sans','Liberation Sans',sans-serif;transform:scaleX(1.1700);transform-origin:0 50%;">17.29</span>
<span class="t" style="left:934.0px;top:273.6px;font-size:20px;line-height:20px;color:#f4f4f4;font-family:'DejaVu Sans','Liberation Sans',sans-serif;transform:scaleX(1.1700);transform-origin:0 50%;">13.89</span>
<span class="t" style="left:1056.1px;top:273.6px;font-size:20px;line-height:20px;color:#f4f4f4;font-family:'DejaVu Sans','Liberation Sans',sans-serif;transform:scaleX(1.1700);transform-origin:0 50%;">11.14</span>
<span class="t" style="left:1163.6px;top:273.6px;font-size:20px;line-height:20px;color:#f4f4f4;font-family:'DejaVu Sans','Liberation Sans',sans-serif;transform:scaleX(1.1700);transform-origin:0 50%;">10.61</span>
<span class="t" style="left:1259.0px;top:273.6px;font-size:20px;line-height:20px;color:#f4f4f4;font-family:'DejaVu Sans','Liberation Sans',sans-serif;transform:scaleX(1.1700);transform-origin:0 50%;">5.86</span>
<span class="t" style="left:1405.7px;top:273.6px;font-size:20px;line-height:20px;color:#f4f4f4;font-family:'DejaVu Sans','Liberation Sans',sans-serif;transform:scaleX(1.1700);transform-origin:0 50%;">21.93</span>
<span class="t" style="left:1562.5px;top:273.6px;font-size:20px;line-height:20px;color:#f4f4f4;font-family:'DejaVu Sans','Liberation Sans',sans-serif;transform:scaleX(1.1700);transform-origin:0 50%;">36.48</span>
<span class="t" style="left:1657.6px;top:273.6px;font-size:20px;line-height:20px;color:#f4f4f4;font-family:'DejaVu Sans','Liberation Sans',sans-serif;transform:scaleX(1.1700);transform-origin:0 50%;">12.99</span>
<span class="t" style="left:1819.6px;top:273.6px;font-size:20px;line-height:20px;color:#f4f4f4;font-family:'DejaVu Sans','Liberation Sans',sans-serif;transform:scaleX(1.1700);transform-origin:0 50%;">36.25</span>
</div>
<div class="b" style="left:656.2px;top:1340.5px;width:1902.3px;height:20.0px;background:#606060;"></div>
<div class="b" style="left:685px;top:1342px;width:903px;height:17px;border-radius:8.5px;background:#444"></div>
<div class="b" style="left:658px;top:1342px;width:22px;height:17px;border-radius:4px;background:#757575"></div>
<svg style="left:664px;top:1344.5px" width="9" height="12" viewBox="0 0 9 12"><path d="M9 0v12L0 6z" fill="#3a3a3a"/></svg>
<div class="b" style="left:2532px;top:1342px;width:22px;height:17px;border-radius:4px;background:#757575"></div>
<svg style="left:2539px;top:1344.5px" width="9" height="12" viewBox="0 0 9 12"><path d="M0 0v12L9 6z" fill="#3a3a3a"/></svg>
<div class="b" style="left:1577.0px;top:231.0px;width:983.0px;height:790.0px;background:#1a1a1a;"></div>
<div class="b" style="left:1587.0px;top:241.0px;width:962.5px;height:770.0px;background:#333;"></div>
<span class="t" style="left:2007.7px;top:249.4px;font-size:20.5px;line-height:20.5px;color:#d8d8d8;letter-spacing:-0.016px;">CIE 1976 u'v'</span>
<div class="b" style="left:1639.0px;top:273.0px;width:907.0px;height:698.0px;background:#222;box-sizing:border-box;border:2px solid #9e9e9e;"></div>
<div class="b" style="left:1639.0px;top:971.0px;width:2.0px;height:7.5px;background:#ddd;"></div>
<span class="t" style="left:1634.3px;top:983.6px;font-size:20.5px;line-height:20.5px;color:#d0d0d0;">0</span>
<div class="b" style="left:1631.0px;top:969.7px;width:8.0px;height:1.8px;background:#ddd;"></div>
<span class="t" style="left:1618.8px;top:960.8px;font-size:20.5px;line-height:20.5px;color:#d0d0d0;">0</span>
<div class="b" style="left:1714.3px;top:971.0px;width:2.0px;height:7.5px;background:#ddd;"></div>
<span class="t" style="left:1695.4px;top:983.6px;font-size:20.5px;line-height:20.5px;color:#d0d0d0;">0.05</span>
<div class="b" style="left:1631.0px;top:911.8px;width:8.0px;height:1.8px;background:#ddd;"></div>
<span class="t" style="left:1590.4px;top:903.0px;font-size:20.5px;line-height:20.5px;color:#d0d0d0;">0.05</span>
<div class="b" style="left:1789.6px;top:971.0px;width:2.0px;height:7.5px;background:#ddd;"></div>
<span class="t" style="left:1776.5px;top:983.6px;font-size:20.5px;line-height:20.5px;color:#d0d0d0;">0.1</span>
<div class="b" style="left:1631.0px;top:853.9px;width:8.0px;height:1.8px;background:#ddd;"></div>
<span class="t" style="left:1601.9px;top:845.1px;font-size:20.5px;line-height:20.5px;color:#d0d0d0;">0.1</span>
<div class="b" style="left:1864.9px;top:971.0px;width:2.0px;height:7.5px;background:#ddd;"></div>
<span class="t" style="left:1846.0px;top:983.6px;font-size:20.5px;line-height:20.5px;color:#d0d0d0;">0.15</span>
<div class="b" style="left:1631.0px;top:796.0px;width:8.0px;height:1.8px;background:#ddd;"></div>
<span class="t" style="left:1590.4px;top:787.2px;font-size:20.5px;line-height:20.5px;color:#d0d0d0;">0.15</span>
<div class="b" style="left:1940.2px;top:971.0px;width:2.0px;height:7.5px;background:#ddd;"></div>
<span class="t" style="left:1927.1px;top:983.6px;font-size:20.5px;line-height:20.5px;color:#d0d0d0;">0.2</span>
<div class="b" style="left:1631.0px;top:738.1px;width:8.0px;height:1.8px;background:#ddd;"></div>
<span class="t" style="left:1601.9px;top:729.3px;font-size:20.5px;line-height:20.5px;color:#d0d0d0;">0.2</span>
<div class="b" style="left:2015.5px;top:971.0px;width:2.0px;height:7.5px;background:#ddd;"></div>
<span class="t" style="left:1996.6px;top:983.6px;font-size:20.5px;line-height:20.5px;color:#d0d0d0;">0.25</span>
<div class="b" style="left:1631.0px;top:680.3px;width:8.0px;height:1.8px;background:#ddd;"></div>
<span class="t" style="left:1590.4px;top:671.4px;font-size:20.5px;line-height:20.5px;color:#d0d0d0;">0.25</span>
<div class="b" style="left:2090.8px;top:971.0px;width:2.0px;height:7.5px;background:#ddd;"></div>
<span class="t" style="left:2077.6px;top:983.6px;font-size:20.5px;line-height:20.5px;color:#d0d0d0;">0.3</span>
<div class="b" style="left:1631.0px;top:622.4px;width:8.0px;height:1.8px;background:#ddd;"></div>
<span class="t" style="left:1601.8px;top:613.5px;font-size:20.5px;line-height:20.5px;color:#d0d0d0;">0.3</span>
<div class="b" style="left:2166.1px;top:971.0px;width:2.0px;height:7.5px;background:#ddd;"></div>
<span class="t" style="left:2147.2px;top:983.6px;font-size:20.5px;line-height:20.5px;color:#d0d0d0;">0.35</span>
<div class="b" style="left:1631.0px;top:564.5px;width:8.0px;height:1.8px;background:#ddd;"></div>
<span class="t" style="left:1590.4px;top:555.6px;font-size:20.5px;line-height:20.5px;color:#d0d0d0;">0.35</span>
<div class="b" style="left:2241.4px;top:971.0px;width:2.0px;height:7.5px;background:#ddd;"></div>
<span class="t" style="left:2228.0px;top:983.6px;font-size:20.5px;line-height:20.5px;color:#d0d0d0;">0.4</span>
<div class="b" style="left:1631.0px;top:506.6px;width:8.0px;height:1.8px;background:#ddd;"></div>
<span class="t" style="left:1601.5px;top:497.7px;font-size:20.5px;line-height:20.5px;color:#d0d0d0;">0.4</span>
<div class="b" style="left:2316.7px;top:971.0px;width:2.0px;height:7.5px;background:#ddd;"></div>
<span class="t" style="left:2297.8px;top:983.6px;font-size:20.5px;line-height:20.5px;color:#d0d0d0;">0.45</span>
<div class="b" style="left:1631.0px;top:448.7px;width:8.0px;height:1.8px;background:#ddd;"></div>
<span class="t" style="left:1590.4px;top:439.8px;font-size:20.5px;line-height:20.5px;color:#d0d0d0;">0.45</span>
<div class="b" style="left:2392.0px;top:971.0px;width:2.0px;height:7.5px;background:#ddd;"></div>
<span class="t" style="left:2378.8px;top:983.6px;font-size:20.5px;line-height:20.5px;color:#d0d0d0;">0.5</span>
<div class="b" style="left:1631.0px;top:390.8px;width:8.0px;height:1.8px;background:#ddd;"></div>
<span class="t" style="left:1601.8px;top:381.9px;font-size:20.5px;line-height:20.5px;color:#d0d0d0;">0.5</span>
<div class="b" style="left:2467.3px;top:971.0px;width:2.0px;height:7.5px;background:#ddd;"></div>
<span class="t" style="left:2448.4px;top:983.6px;font-size:20.5px;line-height:20.5px;color:#d0d0d0;">0.55</span>
<div class="b" style="left:1631.0px;top:332.9px;width:8.0px;height:1.8px;background:#ddd;"></div>
<span class="t" style="left:1590.4px;top:324.1px;font-size:20.5px;line-height:20.5px;color:#d0d0d0;">0.55</span>
<div class="b" style="left:1641px;top:275px;width:903px;height:694px;overflow:hidden"><div class="b" style="left:0;top:0;width:100%;height:100%;clip-path:polygon(385.7px 675.7px,385.6px 675.6px,385.5px 675.7px,385.4px 675.9px,385.2px 676.1px,385.0px 676.1px,384.8px 676.1px,384.5px 676.2px,384.3px 676.4px,384.0px 676.5px,383.7px 676.5px,383.3px 676.5px,382.8px 676.5px,382.3px 676.5px,381.8px 676.6px,381.2px 676.5px,380.4px 676.3px,379.3px 675.7px,377.9px 674.8px,376.0px 673.6px,374.0px 672.1px,371.6px 670.3px,368.8px 668.1px,365.4px 665.4px,361.6px 662.2px,357.4px 658.6px,352.7px 654.6px,347.6px 650.3px,341.8px 645.5px,335.1px 640.0px,327.6px 633.9px,319.5px 627.2px,310.7px 619.9px,301.0px 611.5px,290.3px 601.8px,278.8px 591.1px,266.4px 578.8px,252.3px 563.7px,236.0px 544.7px,217.8px 522.0px,198.2px 495.9px,177.4px 466.2px,155.7px 433.0px,133.5px 397.0px,111.2px 359.2px,89.7px 320.6px,70.2px 282.2px,53.1px 244.8px,38.4px 209.5px,26.2px 177.2px,16.5px 148.2px,9.4px 123.2px,4.7px 101.8px,2.0px 83.7px,1.1px 68.4px,1.9px 55.6px,4.3px 44.8px,8.3px 35.9px,13.5px 28.8px,19.9px 23.4px,27.3px 19.5px,35.4px 17.0px,44.1px 15.4px,53.4px 14.5px,63.0px 14.0px,72.8px 13.8px,82.7px 13.8px,92.6px 14.0px,102.7px 14.3px,113.0px 14.8px,123.7px 15.4px,134.8px 16.2px,146.3px 17.2px,158.3px 18.2px,170.7px 19.4px,183.7px 20.7px,197.4px 22.1px,211.7px 23.6px,226.7px 25.3px,242.4px 27.0px,258.8px 28.8px,276.1px 30.8px,294.2px 32.8px,313.1px 35.0px,332.8px 37.3px,353.3px 39.6px,374.7px 42.1px,396.9px 44.7px,419.9px 47.3px,443.6px 50.0px,467.9px 52.8px,492.8px 55.7px,518.1px 58.6px,543.5px 61.6px,568.4px 64.4px,592.9px 67.3px,617.3px 70.1px,641.4px 72.8px,664.6px 75.5px,686.6px 78.0px,707.5px 80.4px,727.2px 82.7px,745.7px 84.8px,762.9px 86.8px,778.7px 88.6px,793.3px 90.3px,806.8px 91.9px,819.2px 93.3px,830.6px 94.6px,841.4px 95.9px,851.5px 97.0px,860.9px 98.1px,869.6px 99.1px,877.5px 100.0px,884.7px 100.8px,891.2px 101.6px,896.9px 102.2px,902.0px 102.8px,906.6px 103.3px,910.6px 103.8px,914.2px 104.2px,917.3px 104.6px,919.9px 104.9px,922.1px 105.1px,923.9px 105.4px,925.5px 105.5px,927.0px 105.7px,928.4px 105.9px,929.7px 106.0px,931.0px 106.2px,932.2px 106.3px,933.3px 106.4px,934.3px 106.6px,935.3px 106.7px,936.0px 106.8px,936.7px 106.8px,937.2px 106.9px,937.6px 106.9px,937.8px 107.0px,937.8px 107.0px)">
<i class="r" style="left:60px;top:12px;width:36px;height:2px;background:linear-gradient(90deg,#009c00,#009c00)"></i>
<i class="r" style="left:38px;top:14px;width:96px;height:2px;background:linear-gradient(90deg,#009c00,#009c00)"></i>
<i class="r" style="left:30px;top:16px;width:128px;height:2px;background:linear-gradient(90deg,#009c00,#009c00)"></i>
<i class="r" style="left:24px;top:18px;width:155px;height:2px;background:linear-gradient(90deg,#009c00,#009c00)"></i>
<i class="r" style="left:20px;top:20px;width:179px;height:2px;background:linear-gradient(90deg,#009c00,#009c00 163px,#0f9c00)"></i>
<i class="r" style="left:17px;top:22px;width:201px;height:2px;background:linear-gradient(90deg,#009c00,#009c00 167px,#239c00)"></i>
<i class="r" style="left:14px;top:24px;width:222px;height:2px;background:linear-gradient(90deg,#009c00,#009c00 170px,#189c00 194px,#379c00)"></i>
<i class="r" style="left:12px;top:26px;width:242px;height:2px;background:linear-gradient(90deg,#009c01,#009c00 173px,#269c00 209px,#4d9c00)"></i>
<i class="r" style="left:10px;top:28px;width:262px;height:2px;background:linear-gradient(90deg,#009c03,#009c00 40px,#009c00 175px,#309c00 220px,#659c00)"></i>
<i class="r" style="left:9px;top:30px;width:280px;height:2px;background:linear-gradient(90deg,#009c04,#009c00 62px,#009c00 176px,#1a9c00 202px,#3a9c00 230px,#5c9c00 256px,#7e9c00)"></i>
<i class="r" style="left:7px;top:32px;width:300px;height:2px;background:linear-gradient(90deg,#009c06,#009c00 85px,#009c00 179px,#239c00 212px,#489c00 243px,#6f9c00 272px,#9a9c00)"></i>
<i class="r" style="left:6px;top:34px;width:318px;height:2px;background:linear-gradient(90deg,#009c07,#009c00 107px,#009c00 180px,#239c00 213px,#489c00 244px,#6f9c00 273px,#9a9c00 301px,#9c8400)"></i>
<i class="r" style="left:5px;top:36px;width:337px;height:2px;background:linear-gradient(90deg,#009c08,#009c00 130px,#009c00 181px,#209c00 212px,#489c00 245px,#6f9c00 274px,#9b9c00 302px,#9c8200 320px,#9c6f00)"></i>
<i class="r" style="left:4px;top:38px;width:355px;height:2px;background:linear-gradient(90deg,#009c0a,#009c00 152px,#009c00 183px,#239c00 216px,#499c00 247px,#719c00 276px,#9b9c00 303px,#9c7a00 328px,#9c6000)"></i>
<i class="r" style="left:3px;top:40px;width:373px;height:2px;background:linear-gradient(90deg,#009c0b,#009c00 184px,#239c00 217px,#499c00 248px,#719c00 277px,#9b9c00 304px,#9c8600 319px,#9c7300 335px,#9c6200 353px,#9c5300)"></i>
<i class="r" style="left:2px;top:42px;width:392px;height:2px;background:linear-gradient(90deg,#009c0d,#009c01 185px,#219c00 216px,#489c00 248px,#709c00 277px,#9b9c00 305px,#9c8100 323px,#9c6b00 343px,#9c5800 366px,#9c4700)"></i>
<i class="r" style="left:2px;top:44px;width:409px;height:2px;background:linear-gradient(90deg,#009c0e,#009c03 186px,#239c00 218px,#499c00 249px,#709c00 277px,#9c9b00 305px,#9c7f00 325px,#9c6500 349px,#9c5000 377px,#9c3e00)"></i>
<i class="r" style="left:1px;top:46px;width:427px;height:2px;background:linear-gradient(90deg,#009c10,#009c05 187px,#239c02 219px,#499c00 250px,#709c00 278px,#9a9c00 305px,#9c7900 330px,#9c6000 356px,#9c4900 388px,#9c3600)"></i>
<i class="r" style="left:1px;top:48px;width:445px;height:2px;background:linear-gradient(90deg,#009c11,#009c07 187px,#219c04 218px,#479c01 249px,#709c00 278px,#9b9c00 305px,#9c8700 319px,#9c7700 332px,#9c6800 346px,#9c5b00 362px,#9c4300 399px,#9c2f00)"></i>
<i class="r" style="left:0px;top:50px;width:463px;height:2px;background:linear-gradient(90deg,#009c13,#009c08 189px,#239c06 221px,#499c03 251px,#709c01 279px,#9b9c00 306px,#9c8700 320px,#9c7500 334px,#9c6500 350px,#9c5700 368px,#9c4900 388px,#9c3e00 410px,#9c2900)"></i>
<i class="r" style="left:0px;top:52px;width:481px;height:2px;background:linear-gradient(90deg,#009c14,#009c0a 189px,#239c08 221px,#489c06 251px,#709c03 279px,#9b9c00 306px,#9c8600 320px,#9c7300 336px,#9c6100 354px,#9c5200 374px,#9c4500 396px,#9c3800 421px,#9c2300)"></i>
<i class="r" style="left:0px;top:54px;width:498px;height:2px;background:linear-gradient(90deg,#009c16,#009c0c 189px,#229c0a 220px,#489c08 251px,#709c05 279px,#9c9b02 306px,#9c8501 321px,#9c7000 338px,#9c5f00 357px,#9c4e00 379px,#9c4000 403px,#9c3400 431px,#9c1f00)"></i>
<i class="r" style="left:0px;top:56px;width:515px;height:2px;background:linear-gradient(90deg,#009c17,#009c0e 190px,#239c0c 221px,#489c0a 251px,#709c08 279px,#9a9c05 305px,#9c8002 324px,#9c6d01 341px,#9c5b00 361px,#9c4b00 384px,#9c3c00 411px,#9c3000 441px,#9c2400 476px,#9c1b00)"></i>
<i class="r" style="left:0px;top:58px;width:533px;height:2px;background:linear-gradient(90deg,#009c19,#009c10 190px,#229c0e 221px,#489c0c 251px,#709c0a 279px,#9b9c08 305px,#9c8005 324px,#9c6c02 342px,#9c5800 364px,#9c4800 389px,#9c3900 418px,#9c2c00 451px,#9c2100 489px,#9c1700)"></i>
<i class="r" style="left:0px;top:60px;width:550px;height:2px;background:linear-gradient(90deg,#009c1a,#009c12 190px,#219c11 220px,#489c0e 251px,#709c0c 279px,#9b9c0a 305px,#9c8007 324px,#9c6904 344px,#9c5602 367px,#9c4400 394px,#9c3500 425px,#9c2800 461px,#9c1d00 502px,#9c1300)"></i>
<i class="r" style="left:0px;top:62px;width:567px;height:2px;background:linear-gradient(90deg,#009c1c,#009c14 191px,#239c13 222px,#499c11 252px,#719c0f 279px,#9b9c0d 305px,#9c7f09 324px,#9c6806 345px,#9c5303 370px,#9c4201 398px,#9c3300 431px,#9c2500 470px,#9c1a00 515px,#9c1000)"></i>
<i class="r" style="left:0px;top:64px;width:585px;height:2px;background:linear-gradient(90deg,#009c1d,#009c16 191px,#239c15 222px,#499c13 252px,#719c11 279px,#9c9c0f 305px,#9c7f0b 324px,#9c6708 346px,#9c5105 372px,#9c3f02 403px,#9c2f00 439px,#9c2200 480px,#9c1700 528px,#9c0d00)"></i>
<i class="r" style="left:0px;top:66px;width:602px;height:2px;background:linear-gradient(90deg,#009c1f,#009c18 191px,#229c17 221px,#489c15 251px,#6f9c14 278px,#9c9b12 305px,#9c7d0d 325px,#9c6409 348px,#9c4f06 375px,#9c3d03 407px,#9c2d01 445px,#9c2000 489px,#9c1400 541px,#9c0b00)"></i>
<i class="r" style="left:0px;top:68px;width:619px;height:2px;background:linear-gradient(90deg,#009c20,#009c1a 192px,#239c19 222px,#489c18 251px,#6e9c16 277px,#9c9b14 305px,#9c8b12 315px,#9c7c0f 326px,#9c620b 350px,#9c4d07 378px,#9c3a04 412px,#9c2a01 452px,#9c1d00 499px,#9c1200 554px,#9c0800)"></i>
<i class="r" style="left:0px;top:70px;width:637px;height:2px;background:linear-gradient(90deg,#009c22,#009c1d 192px,#229c1b 222px,#489c1a 251px,#6c9c19 276px,#9c9b17 305px,#9c8a14 315px,#9c7b11 326px,#9c610c 351px,#9c4a08 381px,#9c3805 416px,#9c2802 458px,#9c1a00 508px,#9c0f00 567px,#9c0600)"></i>
<i class="r" style="left:0px;top:72px;width:654px;height:2px;background:linear-gradient(90deg,#009c23,#009c1f 192px,#219c1e 221px,#469c1c 250px,#6b9c1b 275px,#9c9a1a 305px,#9c8a16 315px,#9c7b14 326px,#9c600e 352px,#9c490a 383px,#9c3606 420px,#9c2603 464px,#9c1800 517px,#9c0d00 579px,#9c0400)"></i>
<i class="r" style="left:0px;top:74px;width:671px;height:2px;background:linear-gradient(90deg,#009c25,#009c21 193px,#239c20 223px,#499c1f 252px,#719c1e 279px,#9b9c1d 304px,#9c8a19 315px,#9c7b16 326px,#9c5e10 353px,#9c470b 385px,#9c3407 424px,#9c2403 470px,#9c1601 525px,#9c0b00 591px,#9c0200)"></i>
<i class="r" style="left:0px;top:76px;width:689px;height:2px;background:linear-gradient(90deg,#009c26,#009c23 193px,#239c22 223px,#499c21 252px,#709c20 278px,#9c9b1f 304px,#9c891b 315px,#9c7918 327px,#9c6a14 340px,#9c5c11 355px,#9c450c 388px,#9c3208 428px,#9c2204 476px,#9c1401 535px,#9c0900 605px,#9c0000)"></i>
<i class="r" style="left:0px;top:78px;width:706px;height:2px;background:linear-gradient(90deg,#009c28,#009c25 193px,#219c24 222px,#479c24 251px,#6e9c23 277px,#9c9b22 304px,#9c891e 315px,#9c771a 328px,#9c6916 341px,#9c5b13 356px,#9c430d 391px,#9c2f08 433px,#9c1f04 486px,#9c1101 550px,#9c0400 642px,#9c0000 686px,#9c0000)"></i>
<i class="r" style="left:0px;top:80px;width:724px;height:2px;background:linear-gradient(90deg,#009c29,#009c27 194px,#229c27 223px,#479c26 251px,#6d9c26 276px,#9c9b25 304px,#9c8920 315px,#9c771c 328px,#9c6818 342px,#9c5914 358px,#9c410e 394px,#9c2d09 438px,#9c1c05 496px,#9c0e01 567px,#9c0000 684px,#9c0000)"></i>
<i class="r" style="left:0px;top:82px;width:741px;height:2px;background:linear-gradient(90deg,#009c2b,#009c29 194px,#229c29 223px,#479c29 251px,#6b9c28 275px,#9c9a28 304px,#9c8722 316px,#9c751e 329px,#9c6519 344px,#9c5716 360px,#9c3f0f 397px,#9c2b0a 443px,#9c1a05 505px,#9c0b01 583px,#9c0000 682px,#9c0000)"></i>
<i class="r" style="left:0px;top:84px;width:758px;height:2px;background:linear-gradient(90deg,#009c2d,#009c2c 194px,#219c2b 222px,#469c2b 250px,#6a9c2b 274px,#9b9c2b 303px,#9c9a2a 304px,#9c8625 316px,#9c7420 330px,#9c641b 345px,#9c5617 361px,#9c4914 379px,#9c3d10 400px,#9c290b 448px,#9c1706 515px,#9c0902 600px,#9c0000 681px,#9c0000)"></i>
<i class="r" style="left:0px;top:86px;width:776px;height:2px;background:linear-gradient(90deg,#009c2e,#009c2e 194px,#1f9c2e 221px,#479c2e 251px,#709c2e 278px,#9c9b2e 303px,#9c8728 315px,#9c7522 329px,#9c641d 345px,#9c5519 362px,#9c4815 381px,#9c3c11 402px,#9c280b 452px,#9c1506 524px,#9c0702 617px,#9c0000 679px,#9c0000)"></i>
<i class="r" style="left:0px;top:88px;width:793px;height:2px;background:linear-gradient(90deg,#009c30,#009c30 195px,#239c30 224px,#499c30 252px,#6f9c30 277px,#9c9b30 303px,#9c862a 316px,#9c7324 330px,#9c621f 346px,#9c541a 363px,#9c4716 382px,#9c3b12 404px,#9c260c 456px,#9c1306 533px,#9c0402 633px,#9c0000 677px,#9c0000)"></i>
<i class="r" style="left:0px;top:90px;width:811px;height:2px;background:linear-gradient(90deg,#009c31,#009c32 195px,#219c33 223px,#479c33 251px,#6d9c33 276px,#9c9b33 303px,#9c852c 316px,#9c7326 330px,#9c6221 346px,#9c531c 364px,#9c4517 384px,#9c3913 407px,#9c240d 461px,#9c1a09 500px,#9c1106 544px,#9c0202 652px,#9c0001 675px,#9c0000)"></i>
<i class="r" style="left:1px;top:92px;width:827px;height:2px;background:linear-gradient(90deg,#009c33,#009c35 194px,#1e9c35 220px,#459c36 249px,#6c9c36 274px,#9c9a36 302px,#9c852f 315px,#9c7128 330px,#9c6122 346px,#9c511d 365px,#9c4318 386px,#9c3714 409px,#9c230d 464px,#9c180a 505px,#9c0f07 552px,#9c0002 669px,#9c0000)"></i>
<i class="r" style="left:1px;top:94px;width:844px;height:2px;background:linear-gradient(90deg,#009c35,#009c37 195px,#229c38 223px,#479c38 250px,#6a9c39 273px,#9b9c39 301px,#9c9a39 302px,#9c8531 315px,#9c712a 330px,#9c5f24 347px,#9c501f 366px,#9c421a 387px,#9c3615 411px,#9c210e 469px,#9c0e07 555px,#9c0002 669px,#9c0000)"></i>
<i class="r" style="left:1px;top:96px;width:861px;height:2px;background:linear-gradient(90deg,#009c36,#009c39 195px,#229c3a 223px,#489c3b 251px,#719c3c 277px,#9c9c3c 301px,#9c8434 315px,#9c702d 330px,#9c5f26 347px,#9c4f20 366px,#9c411b 388px,#9c3516 413px,#9c200f 472px,#9c0e08 557px,#9c0003 668px,#9c0000 773px,#9c0000)"></i>
<i class="r" style="left:2px;top:98px;width:878px;height:2px;background:linear-gradient(90deg,#009c38,#009c3c 194px,#209c3d 221px,#479c3d 249px,#6f9c3e 275px,#9c9b3f 300px,#9c8436 314px,#9c702f 329px,#9c5e28 347px,#9c4e22 367px,#9c401c 389px,#9c3317 414px,#9c1e0f 475px,#9c0d09 558px,#9c0004 665px,#9c0000 794px,#9c0000)"></i>
<i class="r" style="left:2px;top:100px;width:895px;height:2px;background:linear-gradient(90deg,#009c3a,#009c3e 195px,#239c3f 223px,#489c40 250px,#6e9c41 274px,#9c9b42 300px,#9c8339 314px,#9c6f31 330px,#9c5c29 348px,#9c4c23 368px,#9c3e1d 391px,#9c3218 417px,#9c1d10 479px,#9c0d09 560px,#9c0004 663px,#9c0000 815px,#9c0000)"></i>
<i class="r" style="left:2px;top:102px;width:901px;height:2px;background:linear-gradient(90deg,#009c3b,#009c41 195px,#219c42 222px,#469c43 249px,#6c9c44 273px,#9c9a45 300px,#9c833c 314px,#9c6e33 330px,#9c5c2b 348px,#9c4c25 368px,#9c3e1f 391px,#9c311a 417px,#9c2615 447px,#9c1d11 480px,#9c0d0a 559px,#9c0005 661px,#9c0000 834px,#9c0000)"></i>
<i class="r" style="left:3px;top:104px;width:900px;height:2px;background:linear-gradient(90deg,#009c3d,#009c43 194px,#1f9c44 220px,#459c46 247px,#6b9c47 271px,#9b9c49 298px,#9c9a48 299px,#9c833e 313px,#9c6e35 329px,#9c5c2d 347px,#9c4c26 367px,#9c3e20 390px,#9c311b 416px,#9c1c12 479px,#9c0c0b 558px,#9c0006 658px,#9c0000)"></i>
<i class="r" style="left:3px;top:106px;width:900px;height:2px;background:linear-gradient(90deg,#009c3f,#009c46 195px,#239c47 223px,#499c49 250px,#719c4a 275px,#9b9c4c 298px,#9c8441 312px,#9c6f38 328px,#9c5c30 346px,#9c4c29 366px,#9c3e22 389px,#9c311c 415px,#9c2617 445px,#9c1c13 478px,#9c0c0c 556px,#9c0007 656px,#9c0000)"></i>
<i class="r" style="left:4px;top:108px;width:899px;height:2px;background:linear-gradient(90deg,#009c41,#009c48 194px,#239c4a 222px,#489c4b 248px,#709c4d 273px,#9c9b4f 297px,#9c8344 311px,#9c6e3a 327px,#9c5c32 345px,#9c4c2a 365px,#9c3d24 388px,#9c311e 414px,#9c2619 444px,#9c1c14 477px,#9c0c0d 554px,#9c0007 653px,#9c0000)"></i>
<i class="r" style="left:4px;top:110px;width:899px;height:2px;background:linear-gradient(90deg,#009c42,#009c4b 194px,#209c4c 220px,#469c4e 247px,#6e9c50 272px,#9c9b52 297px,#9c8347 311px,#9c6e3d 327px,#9c5b34 345px,#9c4b2c 365px,#9c3d25 388px,#9c301f 414px,#9c251a 444px,#9c1c15 477px,#9c0c0e 554px,#9c0008 651px,#9c0000)"></i>
<i class="r" style="left:4px;top:112px;width:899px;height:2px;background:linear-gradient(90deg,#009c44,#009c4d 195px,#229c4f 222px,#489c51 248px,#6d9c53 271px,#9c9b55 297px,#9c8349 311px,#9c6d3f 327px,#9c5b36 345px,#9c4b2e 365px,#9c3d27 388px,#9c3021 414px,#9c251b 444px,#9c1b16 477px,#9c0c0f 553px,#9c0009 649px,#9c0001)"></i>
<i class="r" style="left:5px;top:114px;width:898px;height:2px;background:linear-gradient(90deg,#009c46,#009c50 194px,#229c52 221px,#469c54 246px,#6b9c56 269px,#9c9a58 296px,#9c824c 310px,#9c6d41 326px,#9c5a38 344px,#9c4b30 364px,#9c3c28 387px,#9c3022 413px,#9c251c 443px,#9c1b17 476px,#9c0c10 551px,#9c0009 646px,#9c0001)"></i>
<i class="r" style="left:5px;top:116px;width:898px;height:2px;background:linear-gradient(90deg,#009c48,#009c52 194px,#1f9c54 219px,#469c57 246px,#699c59 268px,#9b9c5c 295px,#9c9a5c 296px,#9c824f 310px,#9c6e44 325px,#9c5b3a 343px,#9c4b32 363px,#9c3d2a 386px,#9c3024 412px,#9c251e 442px,#9c1b19 475px,#9c0c10 550px,#9c000a 644px,#9c0002)"></i>
<i class="r" style="left:6px;top:118px;width:897px;height:2px;background:linear-gradient(90deg,#009c49,#009c55 194px,#239c57 221px,#499c5a 247px,#719c5d 271px,#9c9b60 294px,#9c8352 308px,#9c6f47 323px,#9c5c3d 341px,#9c4b34 361px,#9c3d2c 384px,#9c3025 410px,#9c251f 439px,#9c1b1a 473px,#9c0c11 547px,#9c000b 641px,#9c0002)"></i>
<i class="r" style="left:6px;top:120px;width:897px;height:2px;background:linear-gradient(90deg,#009c4b,#009c58 194px,#239c5a 221px,#499c5d 247px,#6f9c60 270px,#9c9b63 294px,#9c8355 308px,#9c6e4a 323px,#9c5b3f 341px,#9c4b36 361px,#9c3c2e 384px,#9c3027 410px,#9c2520 439px,#9c1b1b 473px,#9c0c12 546px,#9c000c 639px,#9c0002)"></i>
<i class="r" style="left:7px;top:122px;width:896px;height:2px;background:linear-gradient(90deg,#009c4d,#009c5a 193px,#219c5d 219px,#479c60 245px,#6d9c63 268px,#9c9b66 293px,#9c8258 307px,#9c6e4c 322px,#9c5b41 340px,#9c4a38 360px,#9c3c2f 383px,#9c2f28 409px,#9c2422 438px,#9c1a1c 472px,#9c0c13 545px,#9c000d 636px,#9c0003)"></i>
<i class="r" style="left:7px;top:124px;width:896px;height:2px;background:linear-gradient(90deg,#009c4f,#009c5d 194px,#229c60 220px,#479c63 245px,#6c9c66 267px,#9c9a69 293px,#9c825b 307px,#9c6d4f 322px,#9c5a43 340px,#9c4a3a 360px,#9c3c31 383px,#9c2f29 409px,#9c2423 438px,#9c1a1d 472px,#9c0c14 544px,#9c000d 634px,#9c0003)"></i>
<i class="r" style="left:8px;top:126px;width:895px;height:2px;background:linear-gradient(90deg,#009c51,#009c58 105px,#009c60 193px,#229c63 219px,#479c66 244px,#6a9c69 265px,#9b9c6e 291px,#9c9a6d 292px,#9c815e 306px,#9c6d51 321px,#9c5a45 339px,#9c4a3b 359px,#9c3b32 382px,#9c2f2b 408px,#9c2424 437px,#9c1a1e 471px,#9c0c15 542px,#9c000e 631px,#9c0004)"></i>
<i class="r" style="left:8px;top:128px;width:895px;height:2px;background:linear-gradient(90deg,#009c53,#009c5a 105px,#009c62 193px,#229c66 219px,#489c69 245px,#719c6d 269px,#9c9c71 291px,#9c8261 305px,#9c6e54 320px,#9c5b49 337px,#9c4b3e 357px,#9c3c35 380px,#9c2f2d 406px,#9c2426 435px,#9c1a1f 469px,#9c0c16 540px,#9c000f 629px,#9c0004)"></i>
<i class="r" style="left:9px;top:130px;width:894px;height:2px;background:linear-gradient(90deg,#009c55,#009c5c 105px,#009c65 193px,#239c69 219px,#489c6c 244px,#6f9c70 267px,#9c9b75 290px,#9c8264 304px,#9c6d57 319px,#9c5b4b 336px,#9c4a40 356px,#9c3c36 379px,#9c2f2e 405px,#9c2427 434px,#9c1a20 468px,#9c0b17 539px,#9c0010 627px,#9c0009 745px,#9c0005)"></i>
<i class="r" style="left:9px;top:132px;width:894px;height:2px;background:linear-gradient(90deg,#009c56,#009c5e 105px,#009c68 193px,#239c6c 219px,#489c70 244px,#6e9c74 266px,#9c9b78 290px,#9c8267 304px,#9c6d59 319px,#9c5b4d 336px,#9c4a42 356px,#9c3b38 379px,#9c2e30 405px,#9c2428 434px,#9c1a22 468px,#9c0b18 538px,#9c0010 625px,#9c000a 743px,#9c0005)"></i>
<i class="r" style="left:10px;top:134px;width:893px;height:2px;background:linear-gradient(90deg,#009c58,#009c61 105px,#009c6b 192px,#219c6f 217px,#479c73 242px,#6c9c77 264px,#9c9a7b 289px,#9c816a 303px,#9c6c5c 318px,#9c5a4f 335px,#9c4a44 355px,#9c3b3a 378px,#9c2e31 404px,#9c2329 433px,#9c1923 467px,#9c0b19 536px,#9c0011 622px,#9c000b 741px,#9c0005)"></i>
<i class="r" style="left:11px;top:136px;width:892px;height:2px;background:linear-gradient(90deg,#009c5a,#009c63 105px,#009c6e 192px,#229c72 217px,#469c76 241px,#6a9c7a 262px,#9b9c80 287px,#9c9a7f 288px,#9c816d 302px,#9c6c5e 317px,#9c5a51 334px,#9c4946 354px,#9c3b3b 377px,#9c2e32 403px,#9c232b 432px,#9c1924 466px,#9c0b1a 534px,#9c0012 619px,#9c000b 739px,#9c0006)"></i>
<i class="r" style="left:11px;top:138px;width:892px;height:2px;background:linear-gradient(90deg,#009c5c,#009c65 105px,#009c71 192px,#239c75 218px,#4a9c7a 243px,#729c7f 266px,#9b9c84 287px,#9c8271 301px,#9c6d62 316px,#9c5a54 333px,#9c4a48 353px,#9c3b3e 375px,#9c2e35 401px,#9c232c 430px,#9c1925 464px,#9c0b1b 532px,#9c0013 617px,#9c000c 737px,#9c0006)"></i>
<i class="r" style="left:12px;top:140px;width:891px;height:2px;background:linear-gradient(90deg,#009c5e,#009c68 104px,#009c74 191px,#229c78 216px,#489c7d 241px,#709c82 264px,#9c9b87 286px,#9c8274 300px,#9c6c64 315px,#9c5a57 332px,#9c494a 352px,#9c3b40 374px,#9c2e36 400px,#9c232e 429px,#9c1926 463px,#9c0b1c 530px,#9c0014 614px,#9c000c 735px,#9c0007)"></i>
<i class="r" style="left:12px;top:142px;width:891px;height:2px;background:linear-gradient(90deg,#009c60,#009c6a 105px,#019c77 192px,#239c7b 217px,#489c80 241px,#6e9c85 263px,#9c9b8b 286px,#9c8177 300px,#9c6c67 315px,#9c5959 332px,#9c494c 352px,#9c3b41 374px,#9c2e37 400px,#9c232f 429px,#9c1927 463px,#9c0b1d 529px,#9c0015 612px,#9c000d 734px,#9c0007)"></i>
<i class="r" style="left:13px;top:144px;width:890px;height:2px;background:linear-gradient(90deg,#009c62,#009c6d 104px,#009c7a 191px,#229c7e 216px,#489c84 240px,#6d9c89 261px,#9c9b8e 285px,#9c817a 299px,#9c6c6a 314px,#9c595b 331px,#9c484e 351px,#9c3a43 373px,#9c2d39 399px,#9c2230 428px,#9c1829 462px,#9c0b1e 528px,#9c0016 609px,#9c000e 732px,#9c0007)"></i>
<i class="r" style="left:13px;top:146px;width:889px;height:2px;background:linear-gradient(90deg,#009c64,#009c6f 104px,#009c7d 191px,#219c81 215px,#469c87 239px,#6b9c8c 260px,#9b9c93 284px,#9c9a92 285px,#9c807d 299px,#9c6b6c 314px,#9c595d 331px,#9c4850 351px,#9c3a45 373px,#9c2d3a 399px,#9c2232 428px,#9c182a 462px,#9c0b1f 527px,#9c0016 607px,#9c000e 730px,#9c0008)"></i>
<i class="r" style="left:14px;top:148px;width:886px;height:2px;background:linear-gradient(90deg,#009c66,#009c72 104px,#009c80 190px,#1d9c84 212px,#449c8a 237px,#699c8f 258px,#9b9c97 283px,#9c9a95 284px,#9c8182 297px,#9c6c70 312px,#9c5960 329px,#9c4853 349px,#9c3a47 371px,#9c2d3c 397px,#9c2233 426px,#9c182b 460px,#9c0b20 524px,#9c0017 604px,#9c000f 727px,#9c0008)"></i>
<i class="r" style="left:15px;top:150px;width:884px;height:2px;background:linear-gradient(90deg,#009c68,#009c74 104px,#009c83 190px,#239c88 215px,#499c8e 239px,#719c94 261px,#9c9b9b 282px,#9c8386 295px,#9c6d74 310px,#9c5a64 327px,#9c4955 347px,#9c3a49 369px,#9c2d3e 395px,#9c2235 424px,#9c182d 457px,#9c0b21 521px,#9c0018 601px,#9c0010 724px,#9c0009)"></i>
<i class="r" style="left:15px;top:152px;width:882px;height:2px;background:linear-gradient(90deg,#009c6a,#009c77 104px,#009c86 190px,#1e9c8b 212px,#419c90 234px,#629c96 253px,#859c9b 271px,#9c979b 284px,#9c7f86 297px,#9c6a74 312px,#9c5764 329px,#9c4756 349px,#9c394a 371px,#9c2c3f 397px,#9c2135 426px,#9c172d 460px,#9c0a22 522px,#9c0019 599px,#9c0010 722px,#9c0009)"></i>
<i class="r" style="left:16px;top:154px;width:879px;height:2px;background:linear-gradient(90deg,#009c6c,#009c79 103px,#009c89 189px,#189c8d 207px,#389c93 228px,#6f9b9c 259px,#9c929b 285px,#9c7a85 299px,#9c6674 314px,#9c5464 331px,#9c4456 351px,#9c374a 373px,#9c2a3f 399px,#9c2036 428px,#9c162d 462px,#9c0a23 522px,#9c001a 596px,#9c0011 719px,#9c000a)"></i>
<i class="r" style="left:17px;top:156px;width:876px;height:2px;background:linear-gradient(90deg,#009c6f,#009c7c 104px,#009c8c 189px,#2a9c94 218px,#579c9b 245px,#9c8e9b 286px,#9c7686 300px,#9c6374 315px,#9c5265 332px,#9c4257 352px,#9c354a 375px,#9c2940 401px,#9c152e 464px,#9c0a24 522px,#9c001b 593px,#9c0012 716px,#9c000a)"></i>
<i class="r" style="left:17px;top:158px;width:874px;height:2px;background:linear-gradient(90deg,#009c71,#009c7f 104px,#009c90 189px,#1f9c95 211px,#449b9c 234px,#9c8a9b 288px,#9c7386 302px,#9c6075 317px,#9c4f65 335px,#9c4057 355px,#9c334b 377px,#9c2840 403px,#9c142f 466px,#9c0924 523px,#9c001c 591px,#9c0012 714px,#9c000b)"></i>
<i class="r" style="left:18px;top:160px;width:871px;height:2px;background:linear-gradient(90deg,#009c73,#009c81 103px,#009c93 188px,#139c96 202px,#309b9c 221px,#9c869b 289px,#9c7086 303px,#9c5e75 318px,#9c4d65 336px,#9c3e58 356px,#9c314b 379px,#9c2641 405px,#9c132f 468px,#9c0925 523px,#9c001d 588px,#9c0013 711px,#9c000b)"></i>
<i class="r" style="left:19px;top:162px;width:868px;height:2px;background:linear-gradient(90deg,#009c75,#009c84 103px,#009c96 188px,#1d9b9c 208px,#57909c 247px,#9c829b 290px,#9c6d87 304px,#9c5a75 320px,#9c4a65 338px,#9c3c58 358px,#9c2f4c 381px,#9c2541 407px,#9c122f 470px,#9c0826 523px,#9c001e 585px,#9c0014 708px,#9c000c)"></i>
<i class="r" style="left:19px;top:164px;width:866px;height:2px;background:linear-gradient(90deg,#009c77,#009c87 103px,#009c9a 188px,#0b9b9c 196px,#488f9c 238px,#9c7e9b 292px,#9c6a87 306px,#9c5875 322px,#9c4866 340px,#9c3a58 360px,#9c2e4c 383px,#9c2342 409px,#9c1130 473px,#9c0827 524px,#9c001f 583px,#9c0014 705px,#9c000c)"></i>
<i class="r" style="left:20px;top:166px;width:863px;height:2px;background:linear-gradient(90deg,#009c79,#009c88 94px,#009a9c 187px,#468c9c 237px,#9c7a9b 293px,#9c6787 307px,#9c5576 323px,#9c4666 341px,#9c3959 361px,#9c2d4d 384px,#9c2242 410px,#9c1131 474px,#9c0827 524px,#9c0020 581px,#9c0015 703px,#9c000d)"></i>
<i class="r" style="left:21px;top:168px;width:860px;height:2px;background:linear-gradient(90deg,#009c7c,#009c8a 92px,#009c9b 169px,#00979c 187px,#4a889c 240px,#9c779b 294px,#9c6488 308px,#9c5376 324px,#9c4467 342px,#9c3759 363px,#9c2b4d 386px,#9c2142 413px,#9c1031 476px,#9c0021 578px,#9c0016 700px,#9c000d)"></i>
<i class="r" style="left:21px;top:170px;width:858px;height:2px;background:linear-gradient(90deg,#009c7e,#009c8c 85px,#009c9b 157px,#00949c 187px,#49859c 240px,#9c739b 296px,#9c6188 310px,#9c5177 326px,#9c4268 344px,#9c355a 365px,#9c2a4e 388px,#9c2043 415px,#9c0f31 479px,#9c0022 576px,#9c0016 698px,#9c000e)"></i>
<i class="r" style="left:22px;top:172px;width:855px;height:2px;background:linear-gradient(90deg,#009c80,#009c8d 77px,#009c9b 144px,#00919c 186px,#46829c 238px,#9c709b 297px,#9c5d87 312px,#9c4e76 328px,#9c4067 346px,#9c335a 367px,#9c284e 390px,#9c1e43 417px,#9c0e32 480px,#9c0023 573px,#9c0017 695px,#9c000e)"></i>
<i class="r" style="left:23px;top:174px;width:852px;height:2px;background:linear-gradient(90deg,#009c83,#009c8e 70px,#009c9b 131px,#008d9c 186px,#497e9c 241px,#9c6d9b 298px,#9c5b87 313px,#9c4b77 329px,#9c3e68 347px,#9c325a 368px,#9c274f 391px,#9c1d44 418px,#9c0d32 482px,#9c0024 570px,#9c0018 692px,#9c000f)"></i>
<i class="r" style="left:23px;top:176px;width:850px;height:2px;background:linear-gradient(90deg,#009c85,#009c8f 63px,#009c9b 119px,#008b9c 186px,#497b9c 242px,#9c699b 300px,#9c5a8a 313px,#9c4c7a 328px,#9c3f6b 345px,#9c345f 363px,#9c2149 407px,#9c1138 461px,#9c082e 510px,#9c0025 568px,#9c0019 690px,#9c000f)"></i>
<i class="r" style="left:24px;top:178px;width:847px;height:2px;background:linear-gradient(90deg,#009c87,#009c9b 106px,#00889c 185px,#46799c 240px,#9c669b 301px,#9c578a 314px,#9c4a7a 329px,#9c3d6c 346px,#9c3260 364px,#9c204a 408px,#9c1139 462px,#9c082f 509px,#9c0026 565px,#9c0019 687px,#9c0010)"></i>
<i class="r" style="left:25px;top:180px;width:844px;height:2px;background:linear-gradient(90deg,#009c8a,#009c9b 93px,#00859c 185px,#4a759c 243px,#9c639b 302px,#9c558a 315px,#9c487b 330px,#9c3b6c 347px,#9c3160 365px,#9c1f4b 409px,#9c103a 463px,#9c072f 509px,#9c0027 562px,#9c001a 683px,#9c0010)"></i>
<i class="r" style="left:26px;top:182px;width:841px;height:2px;background:linear-gradient(90deg,#009c8c,#009c9b 80px,#00829c 184px,#4a729c 243px,#9c619b 303px,#9c5289 317px,#9c457a 332px,#9c396c 349px,#9c2f60 367px,#9c1e4b 410px,#9c0f3a 464px,#9c0730 508px,#9c0028 559px,#9c001b 680px,#9c0011)"></i>
<i class="r" style="left:26px;top:184px;width:840px;height:2px;background:linear-gradient(90deg,#009c8e,#009c9b 68px,#00809c 184px,#47709c 242px,#9c5e9b 305px,#9c4f8a 319px,#9c437a 334px,#9c376d 351px,#9c2e61 369px,#9c1d4c 412px,#9c0e3b 466px,#9c0029 557px,#9c001c 679px,#9c0012)"></i>
<i class="r" style="left:27px;top:186px;width:837px;height:2px;background:linear-gradient(90deg,#009c91,#009c9c 55px,#007d9c 184px,#4b6d9c 245px,#9c5b9b 306px,#9c4d8a 320px,#9c417b 335px,#9c366d 352px,#9c2c61 370px,#9c1c4c 413px,#9c0e3c 466px,#9c002a 554px,#9c001c 676px,#9c0012)"></i>
<i class="r" style="left:28px;top:188px;width:834px;height:2px;background:linear-gradient(90deg,#009c93,#009b9c 43px,#007b9c 183px,#4b6a9c 245px,#9c589b 307px,#9c4b8a 321px,#9c3f7b 336px,#9c346e 353px,#9c2b62 371px,#9c1b4d 414px,#9c0d3c 467px,#9c002b 551px,#9c001d 672px,#9c0013)"></i>
<i class="r" style="left:29px;top:190px;width:831px;height:2px;background:linear-gradient(90deg,#009c96,#009b9c 30px,#00789c 182px,#48689c 243px,#9c569b 308px,#9c498a 322px,#9c3d7c 337px,#9c2a62 372px,#9c1a4e 415px,#9c0d3d 468px,#9c002c 548px,#9c001e 669px,#9c0013)"></i>
<i class="r" style="left:29px;top:192px;width:829px;height:2px;background:linear-gradient(90deg,#009c98,#009b9c 18px,#00769c 183px,#4a659c 246px,#9c539b 310px,#9c468b 324px,#9c3b7c 339px,#9c2863 374px,#9c194e 417px,#9c0c3d 470px,#9c002e 546px,#9c001f 667px,#9c0014)"></i>
<i class="r" style="left:30px;top:194px;width:826px;height:2px;background:linear-gradient(90deg,#009c9b,#008c9c 76px,#00749c 182px,#4a639c 246px,#9c519b 311px,#9c448b 325px,#9c3a7c 340px,#9c2763 375px,#9c184f 418px,#9c0b3e 470px,#9c002f 543px,#9c0020 664px,#9c0014)"></i>
<i class="r" style="left:31px;top:196px;width:823px;height:2px;background:linear-gradient(90deg,#009a9c,#00729c 181px,#49619c 245px,#9c4e9b 312px,#9c428b 326px,#9c387d 341px,#9c2664 376px,#9c174f 419px,#9c0b3f 471px,#9c0030 540px,#9c0020 661px,#9c0015)"></i>
<i class="r" style="left:32px;top:198px;width:820px;height:2px;background:linear-gradient(90deg,#00979c,#006f9c 181px,#4b5e9c 247px,#9c4c9b 313px,#9c408b 327px,#9c367d 342px,#9c2564 377px,#9c1650 420px,#9c0a3f 472px,#9c0031 537px,#9c0021 658px,#9c0015)"></i>
<i class="r" style="left:32px;top:200px;width:818px;height:2px;background:linear-gradient(90deg,#00959c,#006d9c 181px,#4b5c9c 248px,#9c4a9b 315px,#9c3f8b 329px,#9c357d 344px,#9c2365 379px,#9c1551 421px,#9c0a40 473px,#9c0032 535px,#9c0027 612px,#9c001e 705px,#9c0016)"></i>
<i class="r" style="left:33px;top:202px;width:815px;height:2px;background:linear-gradient(90deg,#00939c,#006b9c 180px,#495a9c 247px,#9c489b 316px,#9c3d8c 330px,#9c337e 345px,#9c2265 380px,#9c1451 422px,#9c0940 474px,#9c0034 532px,#9c0028 612px,#9c001e 704px,#9c0017)"></i>
<i class="r" style="left:34px;top:204px;width:812px;height:2px;background:linear-gradient(90deg,#00909c,#00699c 180px,#4b589c 249px,#9c459b 317px,#9c3b8c 331px,#9c317e 346px,#9c2166 381px,#9c1452 423px,#9c0841 474px,#9c0035 529px,#9c0028 611px,#9c001f 702px,#9c0017)"></i>
<i class="r" style="left:35px;top:206px;width:809px;height:2px;background:linear-gradient(90deg,#008e9c,#00679c 179px,#4b569c 249px,#9c439b 318px,#9c398c 332px,#9c307e 347px,#9c2066 382px,#9c1352 424px,#9c0842 475px,#9c0036 526px,#9c0029 611px,#9c001f 701px,#9c0018)"></i>
<i class="r" style="left:35px;top:208px;width:807px;height:2px;background:linear-gradient(90deg,#008c9c,#00659c 179px,#49549c 248px,#9c419b 320px,#9c378c 334px,#9c2e7e 349px,#9c1f67 384px,#9c1253 426px,#9c0743 476px,#9c0037 524px,#9c002a 611px,#9c0020 700px,#9c0018)"></i>
<i class="r" style="left:36px;top:210px;width:804px;height:2px;background:linear-gradient(90deg,#00899c,#00639c 179px,#4b529c 250px,#9c3f9b 321px,#9c358c 335px,#9c2d7f 350px,#9c1e67 385px,#9c1153 427px,#9c0743 477px,#9c0039 521px,#9c002a 611px,#9c0021 699px,#9c0019)"></i>
<i class="r" style="left:37px;top:212px;width:801px;height:2px;background:linear-gradient(90deg,#00879c,#00629c 178px,#4b509c 250px,#9c3d9b 322px,#9c2b7f 351px,#9c1d67 386px,#9c1054 428px,#9c0644 478px,#9c003a 519px,#9c002b 610px,#9c0021 697px,#9c001a)"></i>
<i class="r" style="left:38px;top:214px;width:798px;height:2px;background:linear-gradient(90deg,#00859c,#00609c 177px,#494f9c 249px,#9c3b9b 323px,#9c2a7f 352px,#9c1b68 387px,#9c1055 428px,#9c0644 478px,#9c003b 516px,#9c002b 609px,#9c0022 695px,#9c001a)"></i>
<i class="r" style="left:39px;top:216px;width:795px;height:2px;background:linear-gradient(90deg,#00839c,#005e9c 177px,#4b4c9c 251px,#9c399b 324px,#9c2980 353px,#9c1a68 388px,#9c0f55 429px,#9c0545 479px,#9c003c 513px,#9c002c 609px,#9c0023 694px,#9c001b)"></i>
<i class="r" style="left:39px;top:218px;width:794px;height:2px;background:linear-gradient(90deg,#00819c,#005c9c 177px,#4b4b9c 252px,#9c389b 326px,#9c2780 355px,#9c1a69 389px,#9c0e56 430px,#9c0546 480px,#9c003e 511px,#9c002d 609px,#9c0023 693px,#9c001b)"></i>
<i class="r" style="left:40px;top:220px;width:791px;height:2px;background:linear-gradient(90deg,#007f9c,#005b9c 176px,#4a499c 251px,#9c369b 327px,#9c2680 356px,#9c1869 391px,#9c0d56 432px,#9c0446 481px,#9c003f 508px,#9c002d 609px,#9c0024 692px,#9c001c)"></i>
<i class="r" style="left:41px;top:222px;width:788px;height:2px;background:linear-gradient(90deg,#007d9c,#00599c 176px,#4c479c 253px,#9c349b 328px,#9c2580 357px,#9c186a 391px,#9c0d57 432px,#9c0347 481px,#9c0041 505px,#9c002e 608px,#9c0025 690px,#9c001d)"></i>
<i class="r" style="left:42px;top:224px;width:785px;height:2px;background:linear-gradient(90deg,#007b9c,#00589c 175px,#4c459c 253px,#9c329b 329px,#9c2381 358px,#9c176a 392px,#9c0c57 433px,#9c0347 482px,#9c0042 502px,#9c0038 551px,#9c002f 608px,#9c0025 689px,#9c001d)"></i>
<i class="r" style="left:43px;top:226px;width:782px;height:2px;background:linear-gradient(90deg,#00799c,#00569c 174px,#4a449c 252px,#9c319b 330px,#9c2281 359px,#9c166b 393px,#9c0b58 434px,#9c0248 482px,#9c0044 499px,#9c0039 549px,#9c002f 607px,#9c0026 687px,#9c001e)"></i>
<i class="r" style="left:44px;top:228px;width:779px;height:2px;background:linear-gradient(90deg,#00779c,#00549c 174px,#4b429c 253px,#9c2f9b 331px,#9c2181 360px,#9c156b 394px,#9c0b59 434px,#9c0249 482px,#9c0045 496px,#9c003b 539px,#9c0030 606px,#9c0026 685px,#9c001e)"></i>
<i class="r" style="left:44px;top:230px;width:777px;height:2px;background:linear-gradient(90deg,#00769c,#00539c 174px,#4b419c 254px,#9c2d9b 333px,#9c1f81 362px,#9c146c 396px,#9c0a59 436px,#9c0149 484px,#9c003c 540px,#9c0031 606px,#9c0027 684px,#9c001f)"></i>
<i class="r" style="left:45px;top:232px;width:774px;height:2px;background:linear-gradient(90deg,#00749c,#00529c 173px,#4b3f9c 254px,#9c2c9b 334px,#9c1e82 363px,#9c136c 397px,#9c0959 437px,#9c014a 484px,#9c003d 540px,#9c0031 605px,#9c0028 683px,#9c0020)"></i>
<i class="r" style="left:46px;top:234px;width:771px;height:2px;background:linear-gradient(90deg,#00729c,#00509c 172px,#493e9c 252px,#9c2a9b 335px,#9c1d82 364px,#9c126d 397px,#9c095a 437px,#9c014b 484px,#9c003d 539px,#9c0032 604px,#9c0028 681px,#9c0020)"></i>
<i class="r" style="left:47px;top:236px;width:768px;height:2px;background:linear-gradient(90deg,#00719c,#004f9c 172px,#4c3c9c 255px,#9c299b 336px,#9c1c82 365px,#9c116d 399px,#9c085a 439px,#9c004b 485px,#9c003e 540px,#9c0033 604px,#9c0029 679px,#9c0021)"></i>
<i class="r" style="left:48px;top:238px;width:765px;height:2px;background:linear-gradient(90deg,#006f9c,#004d9c 171px,#4b3b9c 255px,#9c279b 337px,#9c1b82 366px,#9c106d 399px,#9c075b 439px,#9c004c 485px,#9c003f 539px,#9c0033 603px,#9c002a 678px,#9c0022)"></i>
<i class="r" style="left:49px;top:240px;width:762px;height:2px;background:linear-gradient(90deg,#006d9c,#004c9c 170px,#493a9c 253px,#9c269b 338px,#9c1a83 367px,#9c0f6e 400px,#9c075c 439px,#9c004c 485px,#9c003f 539px,#9c0034 602px,#9c002a 676px,#9c0022)"></i>
<i class="r" style="left:49px;top:242px;width:760px;height:2px;background:linear-gradient(90deg,#006c9c,#004b9c 171px,#4c389c 257px,#9c249b 340px,#9c1883 369px,#9c0f6e 402px,#9c065c 441px,#9c004d 487px,#9c0040 540px,#9c0035 602px,#9c002b 675px,#9c0023)"></i>
<i class="r" style="left:50px;top:244px;width:757px;height:2px;background:linear-gradient(90deg,#006a9c,#00499c 170px,#4b379c 256px,#9c239b 341px,#9c1783 370px,#9c0e6e 403px,#9c055d 442px,#9c0052 474px,#9c004e 487px,#9c0041 540px,#9c0036 601px,#9c002c 673px,#9c0024)"></i>
<i class="r" style="left:51px;top:246px;width:754px;height:2px;background:linear-gradient(90deg,#00699c,#00489c 169px,#4a369c 255px,#9c229b 342px,#9c1683 371px,#9c0d6f 404px,#9c0661 433px,#9c0155 465px,#9c004e 487px,#9c0041 539px,#9c0036 600px,#9c002d 671px,#9c0024)"></i>
<i class="r" style="left:52px;top:248px;width:751px;height:2px;background:linear-gradient(90deg,#00679c,#00479c 169px,#4c349c 258px,#9c209c 343px,#9c1684 371px,#9c0c70 404px,#9c0662 434px,#9c0055 468px,#9c004f 487px,#9c0042 539px,#9c0037 599px,#9c002d 669px,#9c0025)"></i>
<i class="r" style="left:53px;top:250px;width:748px;height:2px;background:linear-gradient(90deg,#00659c,#00469c 168px,#4b339c 257px,#9c1f9c 344px,#9c1584 372px,#9c0b70 405px,#9c0563 433px,#9c0057 465px,#9c0050 487px,#9c0043 538px,#9c0038 598px,#9c002e 667px,#9c0026)"></i>
<i class="r" style="left:54px;top:252px;width:746px;height:2px;background:linear-gradient(90deg,#00649c,#00459c 167px,#4a329c 256px,#9c1e9c 345px,#9c1384 373px,#9c0b70 406px,#9c0058 462px,#9c0050 488px,#9c0043 539px,#9c0038 598px,#9c002f 667px,#9c0026)"></i>
<i class="r" style="left:55px;top:254px;width:743px;height:2px;background:linear-gradient(90deg,#00629c,#00439c 167px,#4c309c 258px,#9c1c9c 346px,#9c1285 374px,#9c0a71 407px,#9c005a 459px,#9c0051 488px,#9c0044 539px,#9c0039 597px,#9c002f 665px,#9c0027)"></i>
<i class="r" style="left:56px;top:256px;width:740px;height:2px;background:linear-gradient(90deg,#00619c,#00429c 166px,#4c2f9c 258px,#9c1b9c 347px,#9c1185 375px,#9c0971 407px,#9c005c 456px,#9c0051 488px,#9c0045 538px,#9c003a 596px,#9c0028)"></i>
<i class="r" style="left:57px;top:258px;width:737px;height:2px;background:linear-gradient(90deg,#00609c,#00419c 165px,#4a2e9c 256px,#9c1a9c 348px,#9c1085 376px,#9c0872 408px,#9c005e 453px,#9c0052 488px,#9c0045 538px,#9c003a 595px,#9c0028)"></i>
<i class="r" style="left:57px;top:260px;width:735px;height:2px;background:linear-gradient(90deg,#005e9c,#00409c 166px,#4c2d9c 260px,#9c199c 350px,#9c1085 378px,#9c0872 410px,#9c0060 451px,#9c0053 490px,#9c0046 539px,#9c003b 595px,#9c0029)"></i>
<i class="r" style="left:58px;top:262px;width:732px;height:2px;background:linear-gradient(90deg,#005d9c,#003f9c 165px,#4c2c9c 260px,#9c189c 351px,#9c0f85 379px,#9c0772 411px,#9c0062 448px,#9c0053 490px,#9c0047 538px,#9c003c 594px,#9c002a)"></i>
<i class="r" style="left:59px;top:264px;width:729px;height:2px;background:linear-gradient(90deg,#005c9c,#003e9c 164px,#4a2b9c 258px,#9c169c 352px,#9c0e86 380px,#9c0673 412px,#9c0063 446px,#9c0054 490px,#9c0047 538px,#9c003c 593px,#9c002b)"></i>
<i class="r" style="left:60px;top:266px;width:726px;height:2px;background:linear-gradient(90deg,#005a9c,#003d9c 164px,#4c299c 260px,#9c159c 353px,#9c0d86 381px,#9c0673 412px,#9c0065 443px,#9c0055 490px,#9c0048 538px,#9c003d 592px,#9c002b)"></i>
<i class="r" style="left:61px;top:268px;width:723px;height:2px;background:linear-gradient(90deg,#00599c,#003c9c 163px,#4c289c 260px,#9c149c 354px,#9c0c86 382px,#9c0574 413px,#9c0067 440px,#9c0055 490px,#9c0049 537px,#9c003e 591px,#9c002c)"></i>
<i class="r" style="left:62px;top:270px;width:720px;height:2px;background:linear-gradient(90deg,#00589c,#003b9c 162px,#4b289c 259px,#9c139c 355px,#9c0b86 383px,#9c0474 414px,#9c0069 437px,#9c0056 490px,#9c0049 537px,#9c003f 590px,#9c002d)"></i>
<i class="r" style="left:63px;top:272px;width:717px;height:2px;background:linear-gradient(90deg,#00569c,#003a9c 162px,#4c269c 261px,#9c129c 356px,#9c0a87 383px,#9c0475 414px,#9c006b 434px,#9c0057 490px,#9c004a 536px,#9c003f 589px,#9c002e)"></i>
<i class="r" style="left:64px;top:274px;width:714px;height:2px;background:linear-gradient(90deg,#00559c,#00399c 161px,#4c259c 261px,#9c119c 357px,#9c0987 384px,#9c0375 415px,#9c006d 431px,#9c0057 490px,#9c004b 536px,#9c0040 588px,#9c002e)"></i>
<i class="r" style="left:65px;top:276px;width:711px;height:2px;background:linear-gradient(90deg,#00549c,#00389c 160px,#4b259c 260px,#9c109c 358px,#9c0987 385px,#9c0275 416px,#9c006f 428px,#9c0065 451px,#9c0058 490px,#9c004c 535px,#9c0041 586px,#9c002f)"></i>
<i class="r" style="left:66px;top:278px;width:708px;height:2px;background:linear-gradient(90deg,#00539c,#00379c 160px,#4d239c 262px,#9c0f9c 359px,#9c0887 386px,#9c0276 416px,#9c0066 451px,#9c0059 490px,#9c004c 535px,#9c0042 585px,#9c0030)"></i>
<i class="r" style="left:67px;top:280px;width:705px;height:2px;background:linear-gradient(90deg,#00519c,#00369c 159px,#4c229c 262px,#9c0e9c 360px,#9c0788 387px,#9c0176 417px,#9c0067 451px,#9c0059 490px,#9c004d 534px,#9c0042 584px,#9c0031)"></i>
<i class="r" style="left:68px;top:282px;width:702px;height:2px;background:linear-gradient(90deg,#00509c,#00359c 158px,#4b229c 260px,#9c0d9c 361px,#9c0688 388px,#9c0076 418px,#9c0067 452px,#9c005a 490px,#9c004e 534px,#9c0043 583px,#9c0032)"></i>
<i class="r" style="left:69px;top:284px;width:699px;height:2px;background:linear-gradient(90deg,#004f9c,#00349c 158px,#4c209c 262px,#9b0c9c 362px,#9c0589 388px,#9c0077 418px,#9c0068 452px,#9c005a 490px,#9c004f 533px,#9c0044 582px,#9c0032)"></i>
<i class="r" style="left:70px;top:286px;width:697px;height:2px;background:linear-gradient(90deg,#004e9c,#00339c 157px,#4c209c 262px,#9b0b9c 363px,#9c0488 390px,#9c0077 419px,#9c0068 453px,#9c005b 491px,#9c004f 534px,#9c0044 582px,#9c0033)"></i>
<i class="r" style="left:71px;top:288px;width:694px;height:2px;background:linear-gradient(90deg,#004d9c,#00329c 156px,#4b1f9c 261px,#9b0a9c 364px,#9c0488 391px,#9c0078 420px,#9c0069 453px,#9c005b 491px,#9c0050 533px,#9c0045 581px,#9c0034)"></i>
<i class="r" style="left:72px;top:290px;width:691px;height:2px;background:linear-gradient(90deg,#004c9c,#00319c 156px,#4d1e9c 263px,#9b099c 365px,#9c007f 407px,#9c0078 421px,#9c0069 454px,#9c005c 491px,#9c0046 579px,#9c0035)"></i>
<i class="r" style="left:73px;top:292px;width:688px;height:2px;background:linear-gradient(90deg,#004b9c,#00319c 155px,#4c1d9c 263px,#9b089c 366px,#9c0082 404px,#9c0079 421px,#9c006a 454px,#9c005d 490px,#9c0047 578px,#9c0035)"></i>
<i class="r" style="left:74px;top:294px;width:685px;height:2px;background:linear-gradient(90deg,#004a9c,#00309c 154px,#4c1c9c 262px,#9b079c 367px,#9c0084 401px,#9c0079 422px,#9c006b 454px,#9c005e 490px,#9c0048 576px,#9c0036)"></i>
<i class="r" style="left:75px;top:296px;width:682px;height:2px;background:linear-gradient(90deg,#00489c,#002f9c 154px,#4c1b9c 263px,#9b069c 368px,#9c0087 398px,#9c007a 422px,#9c006b 454px,#9c005e 490px,#9c0049 575px,#9c0037)"></i>
<i class="r" style="left:76px;top:298px;width:679px;height:2px;background:linear-gradient(90deg,#00479c,#002e9c 153px,#4c1a9c 263px,#9b059c 369px,#9c0089 395px,#9c007a 423px,#9c006b 455px,#9c005f 490px,#9c0049 574px,#9c0038)"></i>
<i class="r" style="left:77px;top:300px;width:676px;height:2px;background:linear-gradient(90deg,#00469c,#002e9c 152px,#4b1a9c 262px,#9b059c 370px,#9c008c 392px,#9c007a 424px,#9c006c 455px,#9c0060 490px,#9c004a 573px,#9c0039)"></i>
<i class="r" style="left:78px;top:302px;width:673px;height:2px;background:linear-gradient(90deg,#00459c,#002d9c 152px,#4c199c 264px,#9b049c 371px,#9c008f 389px,#9c007b 424px,#9c006d 455px,#9c0060 490px,#9c004b 572px,#9c003a)"></i>
<i class="r" style="left:79px;top:304px;width:670px;height:2px;background:linear-gradient(90deg,#00449c,#002c9c 151px,#4c189c 264px,#9b039c 372px,#9c0091 387px,#9c007b 425px,#9c006d 456px,#9c0061 490px,#9c004c 570px,#9c003b)"></i>
<i class="r" style="left:80px;top:306px;width:667px;height:2px;background:linear-gradient(90deg,#00439c,#002b9c 150px,#4b179c 263px,#9b029c 373px,#9c008b 398px,#9c007b 426px,#9c006e 456px,#9c0061 490px,#9c004c 569px,#9c003b)"></i>
<i class="r" style="left:81px;top:308px;width:664px;height:2px;background:linear-gradient(90deg,#00429c,#002a9c 150px,#4c169c 264px,#9b019c 374px,#9c008b 399px,#9c007c 426px,#9c006e 456px,#9c0062 490px,#9c004d 568px,#9c003c)"></i>
<i class="r" style="left:82px;top:310px;width:661px;height:2px;background:linear-gradient(90deg,#00419c,#002a9c 149px,#4c169c 264px,#9b019c 375px,#9c008b 400px,#9c007d 426px,#9c006f 456px,#9c0063 489px,#9c004e 566px,#9c003d)"></i>
<i class="r" style="left:83px;top:312px;width:658px;height:2px;background:linear-gradient(90deg,#00409c,#00299c 148px,#4c159c 264px,#9b009c 376px,#9c008b 401px,#9c007d 427px,#9c0064 489px,#9c004f 565px,#9c003e)"></i>
<i class="r" style="left:84px;top:314px;width:655px;height:2px;background:linear-gradient(90deg,#00409c,#00289c 148px,#4c149c 265px,#9b009c 377px,#9c008b 402px,#9c007d 428px,#9c0064 489px,#9c0050 564px,#9c003f)"></i>
<i class="r" style="left:85px;top:316px;width:652px;height:2px;background:linear-gradient(90deg,#003f9c,#00289c 147px,#4c139c 265px,#94009c 368px,#9b009c 378px,#9c008c 402px,#9c007e 428px,#9c0065 489px,#9c0050 563px,#9c0040)"></i>
<i class="r" style="left:86px;top:318px;width:649px;height:2px;background:linear-gradient(90deg,#003e9c,#00279c 146px,#4c139c 265px,#91009c 365px,#9b009c 379px,#9c008c 403px,#9c007e 429px,#9c0065 489px,#9c0051 561px,#9c0041)"></i>
<i class="r" style="left:87px;top:320px;width:647px;height:2px;background:linear-gradient(90deg,#003d9c,#00269c 146px,#4c129c 265px,#8f009c 362px,#9b009c 380px,#9c008c 404px,#9c007e 430px,#9c0066 489px,#9c0052 561px,#9c0042)"></i>
<i class="r" style="left:88px;top:322px;width:644px;height:2px;background:linear-gradient(90deg,#003c9c,#00269c 145px,#45139c 254px,#8c009c 359px,#9b009c 381px,#9c008c 405px,#9c007f 430px,#9c0067 488px,#9c0053 559px,#9c0043)"></i>
<i class="r" style="left:89px;top:324px;width:641px;height:2px;background:linear-gradient(90deg,#003b9c,#00259c 144px,#43139c 252px,#8a009c 357px,#9b009c 382px,#9c007f 431px,#9c0068 488px,#9c0054 557px,#9c0043)"></i>
<i class="r" style="left:90px;top:326px;width:638px;height:2px;background:linear-gradient(90deg,#003a9c,#00249c 144px,#43129c 251px,#87009c 354px,#9b009c 383px,#9c007f 431px,#9c0068 488px,#9c0055 556px,#9c0044)"></i>
<i class="r" style="left:91px;top:328px;width:635px;height:2px;background:linear-gradient(90deg,#00399c,#00249c 143px,#41129c 249px,#85009c 351px,#9b009c 384px,#9c0080 432px,#9c0069 488px,#9c0056 555px,#9c0045)"></i>
<i class="r" style="left:92px;top:330px;width:632px;height:2px;background:linear-gradient(90deg,#00389c,#00239c 142px,#40129c 247px,#82009c 348px,#9b009c 385px,#9c0080 432px,#9c006a 487px,#9c0057 553px,#9c0046)"></i>
<i class="r" style="left:94px;top:332px;width:628px;height:2px;background:linear-gradient(90deg,#00379c,#00229c 141px,#3f119c 244px,#80009c 344px,#9b009c 385px,#9c0080 432px,#9c006a 486px,#9c0057 551px,#9c0047)"></i>
<i class="r" style="left:95px;top:334px;width:625px;height:2px;background:linear-gradient(90deg,#00379c,#00229c 140px,#3d119c 242px,#7d009c 341px,#9b009c 386px,#9c0081 432px,#9c006b 486px,#9c0058 550px,#9c0048)"></i>
<i class="r" style="left:96px;top:336px;width:622px;height:2px;background:linear-gradient(90deg,#00369c,#00219c 139px,#3c119c 240px,#7b009c 338px,#9b009c 387px,#9c0082 432px,#9c006c 485px,#9c0059 548px,#9c0049)"></i>
<i class="r" style="left:97px;top:338px;width:619px;height:2px;background:linear-gradient(90deg,#00359c,#00219c 138px,#3a119c 236px,#78009c 335px,#9b009c 388px,#9c0082 433px,#9c006c 485px,#9c005a 547px,#9c004a)"></i>
<i class="r" style="left:98px;top:340px;width:616px;height:2px;background:linear-gradient(90deg,#00349c,#00209c 138px,#3a109c 237px,#76009c 332px,#9b009c 389px,#9c0082 434px,#9c006d 485px,#9c005b 545px,#9c004b)"></i>
<i class="r" style="left:99px;top:342px;width:613px;height:2px;background:linear-gradient(90deg,#00339c,#001f9c 137px,#39109c 235px,#74009c 329px,#9b009c 390px,#9c0083 434px,#9c006e 484px,#9c005c 543px,#9c004c)"></i>
<i class="r" style="left:100px;top:344px;width:610px;height:2px;background:linear-gradient(90deg,#00339c,#001f9c 136px,#36109c 230px,#71009c 326px,#9b009c 391px,#9c0083 434px,#9c006e 484px,#9c005d 542px,#9c004d)"></i>
<i class="r" style="left:101px;top:346px;width:607px;height:2px;background:linear-gradient(90deg,#00329c,#001e9c 136px,#370f9c 231px,#6f009c 323px,#9b009c 392px,#9c0083 435px,#9c006f 484px,#9c005e 541px,#9c004f)"></i>
<i class="r" style="left:103px;top:348px;width:603px;height:2px;background:linear-gradient(90deg,#00319c,#001e9c 134px,#360f9c 228px,#6d009c 319px,#9b009c 392px,#9c0084 434px,#9c0070 482px,#9c005f 538px,#9c0050)"></i>
<i class="r" style="left:104px;top:350px;width:600px;height:2px;background:linear-gradient(90deg,#00309c,#001d9c 133px,#330f9c 224px,#6b009c 316px,#9b009c 393px,#9c0084 435px,#9c0071 482px,#9c005f 537px,#9c0051)"></i>
<i class="r" style="left:105px;top:352px;width:597px;height:2px;background:linear-gradient(90deg,#00309c,#001c9c 133px,#330f9c 224px,#68009c 313px,#9b009c 394px,#9c0085 435px,#9c0071 481px,#9c0060 535px,#9c0052)"></i>
<i class="r" style="left:106px;top:354px;width:595px;height:2px;background:linear-gradient(90deg,#002f9c,#001c9c 132px,#320e9c 222px,#66009c 310px,#9b009c 395px,#9c0085 436px,#9c0072 481px,#9c0061 534px,#9c0053)"></i>
<i class="r" style="left:107px;top:356px;width:592px;height:2px;background:linear-gradient(90deg,#002e9c,#001b9c 131px,#300e9c 218px,#64009c 307px,#9b009c 396px,#9c0086 436px,#9c0073 481px,#9c0062 533px,#9c0054)"></i>
<i class="r" style="left:108px;top:358px;width:589px;height:2px;background:linear-gradient(90deg,#002d9c,#001b9c 131px,#310e9c 219px,#62009c 304px,#9b009c 397px,#9c0086 437px,#9c0073 481px,#9c0063 531px,#9c0055)"></i>
<i class="r" style="left:109px;top:360px;width:586px;height:2px;background:linear-gradient(90deg,#002d9c,#001a9c 130px,#61009c 302px,#9b009c 398px,#9c0086 437px,#9c0074 480px,#9c0064 530px,#9c0056)"></i>
<i class="r" style="left:110px;top:362px;width:583px;height:2px;background:linear-gradient(90deg,#002c9c,#001a9c 129px,#5f009c 299px,#9b009c 399px,#9c0086 438px,#9c0075 480px,#9c0065 528px,#9c0057)"></i>
<i class="r" style="left:112px;top:364px;width:579px;height:2px;background:linear-gradient(90deg,#002b9c,#00199c 128px,#5d009c 295px,#9b009c 399px,#9c0087 437px,#9c0076 478px,#9c0066 525px,#9c0058)"></i>
<i class="r" style="left:113px;top:366px;width:576px;height:2px;background:linear-gradient(90deg,#002a9c,#00199c 127px,#5b009c 292px,#9b009c 400px,#9c0088 437px,#9c0076 478px,#9c0067 524px,#9c0059)"></i>
<i class="r" style="left:114px;top:368px;width:573px;height:2px;background:linear-gradient(90deg,#002a9c,#00189c 126px,#59009c 289px,#9b009c 401px,#9c0088 438px,#9c0077 477px,#9c0068 522px,#9c005b)"></i>
<i class="r" style="left:115px;top:370px;width:570px;height:2px;background:linear-gradient(90deg,#00299c,#00189c 126px,#57009c 286px,#9b009c 402px,#9c0088 438px,#9c0078 477px,#9c0069 521px,#9c005c)"></i>
<i class="r" style="left:116px;top:372px;width:567px;height:2px;background:linear-gradient(90deg,#00289c,#00179c 125px,#55009c 283px,#9b009c 403px,#9c0089 438px,#9c0079 476px,#9c006a 519px,#9c005d)"></i>
<i class="r" style="left:117px;top:374px;width:564px;height:2px;background:linear-gradient(90deg,#00289c,#00179c 124px,#53009c 280px,#9b009c 404px,#9c0089 439px,#9c0079 476px,#9c006b 518px,#9c005e)"></i>
<i class="r" style="left:119px;top:376px;width:560px;height:2px;background:linear-gradient(90deg,#00279c,#00169c 123px,#52009c 276px,#9b009c 404px,#9c008a 438px,#9c007a 474px,#9c006c 515px,#9c005f)"></i>
<i class="r" style="left:120px;top:378px;width:557px;height:2px;background:linear-gradient(90deg,#00269c,#00169c 122px,#50009c 273px,#9b009c 405px,#9c008a 439px,#9c007b 474px,#9c006d 513px,#9c0061)"></i>
<i class="r" style="left:121px;top:380px;width:554px;height:2px;background:linear-gradient(90deg,#00269c,#00169c 121px,#4e009c 270px,#9b009c 406px,#9c008a 439px,#9c007c 473px,#9c006e 511px,#9c0062)"></i>
<i class="r" style="left:122px;top:382px;width:551px;height:2px;background:linear-gradient(90deg,#00259c,#00159c 121px,#4c009c 267px,#9b009c 407px,#9c008b 439px,#9c007c 472px,#9c0063)"></i>
<i class="r" style="left:123px;top:384px;width:548px;height:2px;background:linear-gradient(90deg,#00259c,#00159c 120px,#4b009c 264px,#9b009c 408px,#9c008b 440px,#9c007d 472px,#9c0064)"></i>
<i class="r" style="left:125px;top:386px;width:544px;height:2px;background:linear-gradient(90deg,#00249c,#00149c 118px,#49009c 260px,#9b009c 408px,#9c008b 439px,#9c007e 470px,#9c0066)"></i>
<i class="r" style="left:126px;top:388px;width:542px;height:2px;background:linear-gradient(90deg,#00239c,#00149c 118px,#47009c 257px,#9b009c 409px,#9c007e 470px,#9c0067)"></i>
<i class="r" style="left:127px;top:390px;width:539px;height:2px;background:linear-gradient(90deg,#00239c,#00139c 117px,#45009c 254px,#9b009c 410px,#9c007f 469px,#9c0068)"></i>
<i class="r" style="left:128px;top:392px;width:536px;height:2px;background:linear-gradient(90deg,#00229c,#00139c 116px,#44009c 251px,#9b009c 411px,#9c0080 469px,#9c0069)"></i>
<i class="r" style="left:129px;top:394px;width:533px;height:2px;background:linear-gradient(90deg,#00219c,#00129c 116px,#42009c 248px,#9b009c 412px,#9c0081 468px,#9c006b)"></i>
<i class="r" style="left:130px;top:396px;width:530px;height:2px;background:linear-gradient(90deg,#00219c,#00129c 115px,#41009c 245px,#9b009c 413px,#9c0081 468px,#9c006c)"></i>
<i class="r" style="left:132px;top:398px;width:526px;height:2px;background:linear-gradient(90deg,#00209c,#00129c 113px,#40009c 242px,#9b009c 413px,#9c0082 466px,#9c006d)"></i>
<i class="r" style="left:133px;top:400px;width:523px;height:2px;background:linear-gradient(90deg,#00209c,#00119c 113px,#3e009c 239px,#9b009c 414px,#9c0083 465px,#9c006f)"></i>
<i class="r" style="left:134px;top:402px;width:520px;height:2px;background:linear-gradient(90deg,#001f9c,#00119c 112px,#3d009c 236px,#9b009c 415px,#9c0084 465px,#9c0070)"></i>
<i class="r" style="left:135px;top:404px;width:517px;height:2px;background:linear-gradient(90deg,#001f9c,#00109c 111px,#3b009c 233px,#9b009c 416px,#9c0085 464px,#9c0072)"></i>
<i class="r" style="left:137px;top:406px;width:513px;height:2px;background:linear-gradient(90deg,#001e9c,#00109c 109px,#3a009c 229px,#9b009c 416px,#9c0086 462px,#9c0073)"></i>
<i class="r" style="left:138px;top:408px;width:510px;height:2px;background:linear-gradient(90deg,#001d9c,#00109c 109px,#38009c 226px,#69009c 323px,#9b009c 417px,#9c0086 462px,#9c0075)"></i>
<i class="r" style="left:139px;top:410px;width:507px;height:2px;background:linear-gradient(90deg,#001d9c,#000f9c 108px,#37009c 223px,#68009c 322px,#9b009c 418px,#9c0087 461px,#9c0076)"></i>
<i class="r" style="left:140px;top:412px;width:504px;height:2px;background:linear-gradient(90deg,#001c9c,#000f9c 107px,#35009c 220px,#68009c 321px,#9b009c 419px,#9c0088 460px,#9c0078)"></i>
<i class="r" style="left:142px;top:414px;width:500px;height:2px;background:linear-gradient(90deg,#001c9c,#000e9c 106px,#34009c 216px,#67009c 319px,#9b009c 419px,#9c0089 458px,#9c0079)"></i>
<i class="r" style="left:143px;top:416px;width:497px;height:2px;background:linear-gradient(90deg,#001b9c,#000e9c 105px,#32009c 213px,#66009c 318px,#9b009c 420px,#9c008a 458px,#9c007b)"></i>
<i class="r" style="left:144px;top:418px;width:494px;height:2px;background:linear-gradient(90deg,#001b9c,#000e9c 104px,#31009c 210px,#65009c 317px,#9b009c 421px,#9c008b 457px,#9c007c)"></i>
<i class="r" style="left:145px;top:420px;width:491px;height:2px;background:linear-gradient(90deg,#001a9c,#000d9c 104px,#30009c 207px,#65009c 316px,#9b009c 422px,#9c008b 456px,#9c007e)"></i>
<i class="r" style="left:146px;top:422px;width:489px;height:2px;background:linear-gradient(90deg,#001a9c,#000d9c 103px,#2e009c 204px,#64009c 315px,#9b009c 423px,#9c007f)"></i>
<i class="r" style="left:148px;top:424px;width:485px;height:2px;background:linear-gradient(90deg,#00199c,#000d9c 101px,#2d009c 200px,#63009c 313px,#9b009c 423px,#9c0080)"></i>
<i class="r" style="left:149px;top:426px;width:482px;height:2px;background:linear-gradient(90deg,#00199c,#000c9c 101px,#2c009c 197px,#63009c 312px,#9b009c 424px,#9c0082)"></i>
<i class="r" style="left:150px;top:428px;width:479px;height:2px;background:linear-gradient(90deg,#00189c,#000c9c 100px,#2a009c 194px,#62009c 311px,#9b009c 425px,#9c0084)"></i>
<i class="r" style="left:151px;top:430px;width:476px;height:2px;background:linear-gradient(90deg,#00189c,#000c9c 99px,#29009c 191px,#61009c 310px,#9b009c 426px,#9c0085)"></i>
<i class="r" style="left:153px;top:432px;width:472px;height:2px;background:linear-gradient(90deg,#00179c,#000b9c 98px,#28009c 187px,#60009c 308px,#9b009c 426px,#9c0087)"></i>
<i class="r" style="left:154px;top:434px;width:469px;height:2px;background:linear-gradient(90deg,#00169c,#000b9c 97px,#27009c 184px,#60009c 307px,#9b009c 427px,#9c0089)"></i>
<i class="r" style="left:155px;top:436px;width:466px;height:2px;background:linear-gradient(90deg,#00169c,#000b9c 96px,#26009c 182px,#60009c 307px,#9b009c 428px,#9c008a)"></i>
<i class="r" style="left:156px;top:438px;width:463px;height:2px;background:linear-gradient(90deg,#00169c,#000a9c 96px,#25009c 179px,#5f009c 306px,#9b009c 429px,#9c008c)"></i>
<i class="r" style="left:158px;top:440px;width:459px;height:2px;background:linear-gradient(90deg,#00159c,#000a9c 94px,#23009c 175px,#5e009c 304px,#9b009c 429px,#9c008e)"></i>
<i class="r" style="left:159px;top:442px;width:456px;height:2px;background:linear-gradient(90deg,#00159c,#000a9c 93px,#22009c 172px,#5e009c 303px,#9b009c 430px,#9c0090)"></i>
<i class="r" style="left:160px;top:444px;width:453px;height:2px;background:linear-gradient(90deg,#00149c,#00099c 93px,#21009c 169px,#5d009c 302px,#9b009c 431px,#9c0091)"></i>
<i class="r" style="left:162px;top:446px;width:449px;height:2px;background:linear-gradient(90deg,#00149c,#00099c 91px,#20009c 165px,#5c009c 300px,#9b009c 431px,#9c0093)"></i>
<i class="r" style="left:163px;top:448px;width:446px;height:2px;background:linear-gradient(90deg,#00139c,#00099c 90px,#1f009c 162px,#5c009c 299px,#9b009c 432px,#9c0095)"></i>
<i class="r" style="left:164px;top:450px;width:443px;height:2px;background:linear-gradient(90deg,#00139c,#00089c 90px,#1d009c 159px,#5b009c 298px,#9b009c 433px,#9c0097)"></i>
<i class="r" style="left:166px;top:452px;width:439px;height:2px;background:linear-gradient(90deg,#00129c,#00089c 88px,#1c009c 155px,#5b009c 296px,#9b009c 433px,#9c0099)"></i>
<i class="r" style="left:167px;top:454px;width:436px;height:2px;background:linear-gradient(90deg,#00129c,#00089c 87px,#1b009c 152px,#55009c 285px,#9c009b)"></i>
<i class="r" style="left:168px;top:456px;width:434px;height:2px;background:linear-gradient(90deg,#00119c,#00079c 87px,#1a009c 149px,#59009c 294px,#9b009c)"></i>
<i class="r" style="left:170px;top:458px;width:430px;height:2px;background:linear-gradient(90deg,#00119c,#00079c 85px,#19009c 145px,#58009c 290px,#99009c)"></i>
<i class="r" style="left:171px;top:460px;width:427px;height:2px;background:linear-gradient(90deg,#00109c,#00079c 84px,#18009c 142px,#56009c 287px,#97009c)"></i>
<i class="r" style="left:172px;top:462px;width:424px;height:2px;background:linear-gradient(90deg,#00109c,#00069c 84px,#17009c 139px,#55009c 284px,#95009c)"></i>
<i class="r" style="left:173px;top:464px;width:421px;height:2px;background:linear-gradient(90deg,#000f9c,#00069c 83px,#16009c 136px,#53009c 281px,#93009c)"></i>
<i class="r" style="left:175px;top:466px;width:417px;height:2px;background:linear-gradient(90deg,#000f9c,#00069c 81px,#15009c 132px,#52009c 277px,#91009c)"></i>
<i class="r" style="left:176px;top:468px;width:414px;height:2px;background:linear-gradient(90deg,#000f9c,#00069c 81px,#14009c 129px,#51009c 274px,#90009c)"></i>
<i class="r" style="left:178px;top:470px;width:410px;height:2px;background:linear-gradient(90deg,#000e9c,#00059c 79px,#13009c 125px,#4f009c 270px,#8e009c)"></i>
<i class="r" style="left:179px;top:472px;width:407px;height:2px;background:linear-gradient(90deg,#000e9c,#00059c 78px,#12009c 122px,#4e009c 267px,#8c009c)"></i>
<i class="r" style="left:180px;top:474px;width:404px;height:2px;background:linear-gradient(90deg,#000d9c,#00059c 78px,#11009c 119px,#4c009c 264px,#8a009c)"></i>
<i class="r" style="left:182px;top:476px;width:400px;height:2px;background:linear-gradient(90deg,#000d9c,#00049c 76px,#10009c 116px,#4b009c 260px,#88009c)"></i>
<i class="r" style="left:183px;top:478px;width:397px;height:2px;background:linear-gradient(90deg,#000c9c,#00049c 75px,#0f009c 113px,#4a009c 257px,#87009c)"></i>
<i class="r" style="left:185px;top:480px;width:393px;height:2px;background:linear-gradient(90deg,#000c9c,#00049c 74px,#0e009c 109px,#48009c 253px,#85009c)"></i>
<i class="r" style="left:186px;top:482px;width:390px;height:2px;background:linear-gradient(90deg,#000c9c,#00049c 73px,#0d009c 106px,#47009c 250px,#83009c)"></i>
<i class="r" style="left:187px;top:484px;width:387px;height:2px;background:linear-gradient(90deg,#000b9c,#00039c 72px,#0c009c 103px,#46009c 247px,#82009c)"></i>
<i class="r" style="left:189px;top:486px;width:383px;height:2px;background:linear-gradient(90deg,#000b9c,#00039c 71px,#0b009c 99px,#45009c 243px,#80009c)"></i>
<i class="r" style="left:190px;top:488px;width:380px;height:2px;background:linear-gradient(90deg,#000a9c,#00039c 70px,#0a009c 96px,#43009c 240px,#7e009c)"></i>
<i class="r" style="left:192px;top:490px;width:377px;height:2px;background:linear-gradient(90deg,#000a9c,#00039c 68px,#09009c 92px,#42009c 237px,#7d009c)"></i>
<i class="r" style="left:193px;top:492px;width:374px;height:2px;background:linear-gradient(90deg,#00099c,#00029c 68px,#08009c 89px,#41009c 234px,#7c009c)"></i>
<i class="r" style="left:194px;top:494px;width:371px;height:2px;background:linear-gradient(90deg,#00099c,#00029c 67px,#07009c 86px,#3c009c 222px,#7a009c)"></i>
<i class="r" style="left:196px;top:496px;width:367px;height:2px;background:linear-gradient(90deg,#00099c,#00029c 65px,#06009c 82px,#3b009c 218px,#79009c)"></i>
<i class="r" style="left:197px;top:498px;width:364px;height:2px;background:linear-gradient(90deg,#00089c,#00019c 65px,#06009c 79px,#3b009c 217px,#77009c)"></i>
<i class="r" style="left:199px;top:500px;width:360px;height:2px;background:linear-gradient(90deg,#00089c,#00019c 63px,#3a009c 214px,#75009c)"></i>
<i class="r" style="left:200px;top:502px;width:357px;height:2px;background:linear-gradient(90deg,#00089c,#00019c 62px,#39009c 212px,#74009c)"></i>
<i class="r" style="left:202px;top:504px;width:353px;height:2px;background:linear-gradient(90deg,#00079c,#00019c 61px,#38009c 209px,#72009c)"></i>
<i class="r" style="left:203px;top:506px;width:350px;height:2px;background:linear-gradient(90deg,#00079c,#00019c 60px,#38009c 207px,#71009c)"></i>
<i class="r" style="left:205px;top:508px;width:346px;height:2px;background:linear-gradient(90deg,#00069c,#00009c 58px,#37009c 204px,#6f009c)"></i>
<i class="r" style="left:206px;top:510px;width:343px;height:2px;background:linear-gradient(90deg,#00069c,#00009c 57px,#36009c 201px,#6e009c)"></i>
<i class="r" style="left:208px;top:512px;width:339px;height:2px;background:linear-gradient(90deg,#00069c,#00009c 56px,#36009c 200px,#6d009c)"></i>
<i class="r" style="left:209px;top:514px;width:336px;height:2px;background:linear-gradient(90deg,#00059c,#00009c 55px,#35009c 198px,#6b009c)"></i>
<i class="r" style="left:211px;top:516px;width:332px;height:2px;background:linear-gradient(90deg,#00059c,#00009c 53px,#34009c 194px,#6a009c)"></i>
<i class="r" style="left:212px;top:518px;width:329px;height:2px;background:linear-gradient(90deg,#00049c,#00009c 53px,#34009c 193px,#68009c)"></i>
<i class="r" style="left:214px;top:520px;width:325px;height:2px;background:linear-gradient(90deg,#00049c,#00009c 51px,#33009c 190px,#67009c)"></i>
<i class="r" style="left:215px;top:522px;width:322px;height:2px;background:linear-gradient(90deg,#00049c,#00009c 50px,#32009c 188px,#66009c)"></i>
<i class="r" style="left:217px;top:524px;width:319px;height:2px;background:linear-gradient(90deg,#00039c,#00009c 49px,#32009c 186px,#65009c)"></i>
<i class="r" style="left:218px;top:526px;width:316px;height:2px;background:linear-gradient(90deg,#00039c,#00009c 48px,#31009c 184px,#63009c)"></i>
<i class="r" style="left:220px;top:528px;width:312px;height:2px;background:linear-gradient(90deg,#00039c,#00009c 46px,#30009c 181px,#62009c)"></i>
<i class="r" style="left:222px;top:530px;width:308px;height:2px;background:linear-gradient(90deg,#00029c,#00009c 45px,#61009c)"></i>
<i class="r" style="left:223px;top:532px;width:305px;height:2px;background:linear-gradient(90deg,#00029c,#00009c 44px,#5f009c)"></i>
<i class="r" style="left:225px;top:534px;width:301px;height:2px;background:linear-gradient(90deg,#00029c,#00009c 42px,#5e009c)"></i>
<i class="r" style="left:226px;top:536px;width:298px;height:2px;background:linear-gradient(90deg,#00019c,#00009c 42px,#5d009c)"></i>
<i class="r" style="left:228px;top:538px;width:294px;height:2px;background:linear-gradient(90deg,#00019c,#00009c 40px,#5b009c)"></i>
<i class="r" style="left:230px;top:540px;width:290px;height:2px;background:linear-gradient(90deg,#00009c,#00009c 38px,#5a009c)"></i>
<i class="r" style="left:231px;top:542px;width:287px;height:2px;background:linear-gradient(90deg,#00009c,#00009c 38px,#59009c)"></i>
<i class="r" style="left:233px;top:544px;width:283px;height:2px;background:linear-gradient(90deg,#00009c,#00009c 36px,#58009c)"></i>
<i class="r" style="left:235px;top:546px;width:279px;height:2px;background:linear-gradient(90deg,#00009c,#00009c 34px,#57009c)"></i>
<i class="r" style="left:236px;top:548px;width:276px;height:2px;background:linear-gradient(90deg,#00009c,#00009c 34px,#55009c)"></i>
<i class="r" style="left:238px;top:550px;width:272px;height:2px;background:linear-gradient(90deg,#00009c,#00009c 32px,#54009c)"></i>
<i class="r" style="left:240px;top:552px;width:268px;height:2px;background:linear-gradient(90deg,#00009c,#00009c 30px,#53009c)"></i>
<i class="r" style="left:241px;top:554px;width:265px;height:2px;background:linear-gradient(90deg,#00009c,#00009c 30px,#52009c)"></i>
<i class="r" style="left:243px;top:556px;width:261px;height:2px;background:linear-gradient(90deg,#00009c,#00009c 28px,#51009c)"></i>
<i class="r" style="left:245px;top:558px;width:258px;height:2px;background:linear-gradient(90deg,#00009c,#00009c 26px,#50009c)"></i>
<i class="r" style="left:247px;top:560px;width:254px;height:2px;background:linear-gradient(90deg,#00009c,#00009c 25px,#4f009c)"></i>
<i class="r" style="left:248px;top:562px;width:251px;height:2px;background:linear-gradient(90deg,#00009c,#00009c 24px,#4d009c)"></i>
<i class="r" style="left:250px;top:564px;width:247px;height:2px;background:linear-gradient(90deg,#00009c,#00009c 22px,#4c009c)"></i>
<i class="r" style="left:252px;top:566px;width:243px;height:2px;background:linear-gradient(90deg,#00009c,#00009c 21px,#4b009c)"></i>
<i class="r" style="left:254px;top:568px;width:239px;height:2px;background:linear-gradient(90deg,#00009c,#00009c 19px,#4a009c)"></i>
<i class="r" style="left:256px;top:570px;width:235px;height:2px;background:linear-gradient(90deg,#00009c,#00009c 17px,#49009c)"></i>
<i class="r" style="left:258px;top:572px;width:231px;height:2px;background:linear-gradient(90deg,#00009c,#00009c 16px,#48009c)"></i>
<i class="r" style="left:259px;top:574px;width:228px;height:2px;background:linear-gradient(90deg,#00009c,#00009c 15px,#47009c)"></i>
<i class="r" style="left:261px;top:576px;width:224px;height:2px;background:linear-gradient(90deg,#00009c,#00009c 13px,#46009c)"></i>
<i class="r" style="left:263px;top:578px;width:220px;height:2px;background:linear-gradient(90deg,#00009c,#00009c 12px,#45009c)"></i>
<i class="r" style="left:265px;top:580px;width:216px;height:2px;background:linear-gradient(90deg,#00009c,#00009c 10px,#44009c)"></i>
<i class="r" style="left:267px;top:582px;width:212px;height:2px;background:linear-gradient(90deg,#00009c,#00009c 8px,#43009c)"></i>
<i class="r" style="left:269px;top:584px;width:208px;height:2px;background:linear-gradient(90deg,#00009c,#00009c 6px,#06009c 24px,#42009c)"></i>
<i class="r" style="left:271px;top:586px;width:204px;height:2px;background:linear-gradient(90deg,#00009c,#0c009c 44px,#41009c)"></i>
<i class="r" style="left:273px;top:588px;width:200px;height:2px;background:linear-gradient(90deg,#00009c,#40009c)"></i>
<i class="r" style="left:275px;top:590px;width:196px;height:2px;background:linear-gradient(90deg,#00009c,#3e009c)"></i>
<i class="r" style="left:277px;top:592px;width:193px;height:2px;background:linear-gradient(90deg,#00009c,#3e009c)"></i>
<i class="r" style="left:279px;top:594px;width:189px;height:2px;background:linear-gradient(90deg,#01009c,#3d009c)"></i>
<i class="r" style="left:282px;top:596px;width:184px;height:2px;background:linear-gradient(90deg,#02009c,#3c009c)"></i>
<i class="r" style="left:284px;top:598px;width:180px;height:2px;background:linear-gradient(90deg,#02009c,#3b009c)"></i>
<i class="r" style="left:286px;top:600px;width:176px;height:2px;background:linear-gradient(90deg,#03009c,#3a009c)"></i>
<i class="r" style="left:288px;top:602px;width:172px;height:2px;background:linear-gradient(90deg,#03009c,#39009c)"></i>
<i class="r" style="left:290px;top:604px;width:168px;height:2px;background:linear-gradient(90deg,#04009c,#38009c)"></i>
<i class="r" style="left:292px;top:606px;width:164px;height:2px;background:linear-gradient(90deg,#04009c,#37009c)"></i>
<i class="r" style="left:295px;top:608px;width:159px;height:2px;background:linear-gradient(90deg,#05009c,#36009c)"></i>
<i class="r" style="left:297px;top:610px;width:155px;height:2px;background:linear-gradient(90deg,#05009c,#35009c)"></i>
<i class="r" style="left:299px;top:612px;width:151px;height:2px;background:linear-gradient(90deg,#06009c,#34009c)"></i>
<i class="r" style="left:301px;top:614px;width:147px;height:2px;background:linear-gradient(90deg,#06009c,#33009c)"></i>
<i class="r" style="left:304px;top:616px;width:142px;height:2px;background:linear-gradient(90deg,#07009c,#32009c)"></i>
<i class="r" style="left:306px;top:618px;width:138px;height:2px;background:linear-gradient(90deg,#08009c,#31009c)"></i>
<i class="r" style="left:308px;top:620px;width:134px;height:2px;background:linear-gradient(90deg,#08009c,#31009c)"></i>
<i class="r" style="left:311px;top:622px;width:129px;height:2px;background:linear-gradient(90deg,#09009c,#30009c)"></i>
<i class="r" style="left:313px;top:624px;width:125px;height:2px;background:linear-gradient(90deg,#09009c,#2f009c)"></i>
<i class="r" style="left:316px;top:626px;width:121px;height:2px;background:linear-gradient(90deg,#0a009c,#2e009c)"></i>
<i class="r" style="left:318px;top:628px;width:117px;height:2px;background:linear-gradient(90deg,#0a009c,#2d009c)"></i>
<i class="r" style="left:320px;top:630px;width:113px;height:2px;background:linear-gradient(90deg,#0b009c,#2d009c)"></i>
<i class="r" style="left:323px;top:632px;width:108px;height:2px;background:linear-gradient(90deg,#0c009c,#2c009c)"></i>
<i class="r" style="left:325px;top:634px;width:104px;height:2px;background:linear-gradient(90deg,#0c009c,#2b009c)"></i>
<i class="r" style="left:328px;top:636px;width:99px;height:2px;background:linear-gradient(90deg,#0d009c,#2a009c)"></i>
<i class="r" style="left:330px;top:638px;width:95px;height:2px;background:linear-gradient(90deg,#0d009c,#29009c)"></i>
<i class="r" style="left:333px;top:640px;width:90px;height:2px;background:linear-gradient(90deg,#0e009c,#28009c)"></i>
<i class="r" style="left:335px;top:642px;width:86px;height:2px;background:linear-gradient(90deg,#0e009c,#27009c)"></i>
<i class="r" style="left:337px;top:644px;width:82px;height:2px;background:linear-gradient(90deg,#0f009c,#27009c)"></i>
<i class="r" style="left:340px;top:646px;width:77px;height:2px;background:linear-gradient(90deg,#10009c,#26009c)"></i>
<i class="r" style="left:342px;top:648px;width:73px;height:2px;background:linear-gradient(90deg,#10009c,#25009c)"></i>
<i class="r" style="left:345px;top:650px;width:68px;height:2px;background:linear-gradient(90deg,#11009c,#24009c)"></i>
<i class="r" style="left:347px;top:652px;width:64px;height:2px;background:linear-gradient(90deg,#11009c,#23009c)"></i>
<i class="r" style="left:350px;top:654px;width:59px;height:2px;background:linear-gradient(90deg,#12009c,#23009c)"></i>
<i class="r" style="left:352px;top:656px;width:55px;height:2px;background:linear-gradient(90deg,#12009c,#22009c)"></i>
<i class="r" style="left:354px;top:658px;width:51px;height:2px;background:linear-gradient(90deg,#13009c,#21009c)"></i>
<i class="r" style="left:357px;top:660px;width:47px;height:2px;background:linear-gradient(90deg,#13009c,#21009c)"></i>
<i class="r" style="left:359px;top:662px;width:43px;height:2px;background:linear-gradient(90deg,#14009c,#20009c)"></i>
<i class="r" style="left:361px;top:664px;width:39px;height:2px;background:linear-gradient(90deg,#14009c,#1f009c)"></i>
<i class="r" style="left:364px;top:666px;width:34px;height:2px;background:linear-gradient(90deg,#15009c,#1e009c)"></i>
<i class="r" style="left:366px;top:668px;width:30px;height:2px;background:linear-gradient(90deg,#15009c,#1e009c)"></i>
<i class="r" style="left:369px;top:670px;width:25px;height:2px;background:linear-gradient(90deg,#16009c,#1d009c)"></i>
<i class="r" style="left:371px;top:672px;width:21px;height:2px;background:linear-gradient(90deg,#16009c,#1c009c)"></i>
<i class="r" style="left:374px;top:674px;width:16px;height:2px;background:linear-gradient(90deg,#17009c,#1b009c)"></i>
<i class="r" style="left:377px;top:676px;width:11px;height:2px;background:linear-gradient(90deg,#18009c,#1b009c)"></i>
</div></div>
<div class="b" style="left:1641px;top:275px;width:903px;height:694px;overflow:hidden"><div class="b" style="left:0;top:0;width:100%;height:100%;clip-path:polygon(746.6px 84.9px,147.5px 24.3px,263.2px 511.7px)">
<i class="r" style="left:145px;top:23px;width:12px;height:2px;background:linear-gradient(90deg,#00ff00,#00ff00)"></i>
<i class="r" style="left:145px;top:25px;width:32px;height:2px;background:linear-gradient(90deg,#00ff00,#00ff00)"></i>
<i class="r" style="left:146px;top:27px;width:51px;height:2px;background:linear-gradient(90deg,#00ff00,#00ff00 39px,#14ff00)"></i>
<i class="r" style="left:146px;top:29px;width:70px;height:2px;background:linear-gradient(90deg,#00ff00,#00ff00 39px,#34ff00)"></i>
<i class="r" style="left:147px;top:31px;width:89px;height:2px;background:linear-gradient(90deg,#00ff00,#01ff00 39px,#2dff00 65px,#5aff00)"></i>
<i class="r" style="left:147px;top:33px;width:109px;height:2px;background:linear-gradient(90deg,#00ff00,#00ff00 39px,#3fff00 75px,#82ff00)"></i>
<i class="r" style="left:148px;top:35px;width:128px;height:2px;background:linear-gradient(90deg,#00ff00,#01ff00 39px,#2aff00 63px,#53ff00 85px,#80ff00 107px,#afff00)"></i>
<i class="r" style="left:148px;top:37px;width:147px;height:2px;background:linear-gradient(90deg,#00ff00,#01ff00 39px,#33ff00 68px,#69ff00 96px,#a1ff00 122px,#deff00)"></i>
<i class="r" style="left:148px;top:39px;width:167px;height:2px;background:linear-gradient(90deg,#00ff02,#00ff00 39px,#3aff00 72px,#78ff00 103px,#b9ff00 132px,#feff00 159px,#ffeb00)"></i>
<i class="r" style="left:149px;top:41px;width:186px;height:2px;background:linear-gradient(90deg,#00ff05,#01ff00 39px,#3aff00 71px,#77ff00 102px,#b9ff00 131px,#ffff00 158px,#ffdd00 172px,#ffc100)"></i>
<i class="r" style="left:149px;top:43px;width:206px;height:2px;background:linear-gradient(90deg,#00ff08,#01ff03 39px,#39ff00 71px,#77ff00 102px,#b9ff00 131px,#ffff00 158px,#ffe300 169px,#ffcc00 180px,#ffb600 192px,#ffa100)"></i>
<i class="r" style="left:150px;top:45px;width:224px;height:2px;background:linear-gradient(90deg,#00ff0b,#00ff06 38px,#39ff02 70px,#77ff00 101px,#b7ff00 129px,#fdff00 156px,#fffe00 157px,#ffd800 173px,#ffbb00 188px,#ffa000 205px,#ff8800)"></i>
<i class="r" style="left:150px;top:47px;width:244px;height:2px;background:linear-gradient(90deg,#00ff0e,#01ff09 39px,#3aff05 71px,#77ff00 101px,#b5ff00 128px,#fffe00 157px,#ffe700 166px,#ffd300 175px,#ffaf00 195px,#ff8f00 218px,#ff7300)"></i>
<i class="r" style="left:151px;top:49px;width:263px;height:2px;background:linear-gradient(90deg,#00ff11,#01ff0c 38px,#38ff08 69px,#75ff04 99px,#b3ff00 126px,#feff00 155px,#fffd00 156px,#ffe400 166px,#ffcc00 177px,#ffb600 189px,#ffa300 201px,#ff9100 215px,#ff8000 230px,#ff6200)"></i>
<i class="r" style="left:151px;top:51px;width:283px;height:2px;background:linear-gradient(90deg,#00ff14,#00ff10 38px,#3aff0c 70px,#77ff07 100px,#b8ff03 128px,#feff00 155px,#ffe100 167px,#ffc800 179px,#ffaf00 193px,#ff9900 208px,#ff8600 224px,#ff7300 242px,#ff6200 262px,#ff5400)"></i>
<i class="r" style="left:152px;top:53px;width:302px;height:2px;background:linear-gradient(90deg,#00ff17,#00ff13 37px,#01ff13 38px,#3bff0f 70px,#79ff0b 100px,#baff06 128px,#ffff02 154px,#ffde00 167px,#ffc100 181px,#ffa800 196px,#ff9100 213px,#ff7b00 232px,#ff6800 253px,#ff5700 276px,#ff4700)"></i>
<i class="r" style="left:152px;top:55px;width:321px;height:2px;background:linear-gradient(90deg,#00ff1a,#01ff16 38px,#39ff12 69px,#77ff0e 99px,#b8ff0a 127px,#ffff06 154px,#ffdb03 168px,#ffbd00 183px,#ffa200 200px,#ff8900 219px,#ff7300 240px,#ff5f00 264px,#ff4d00 291px,#ff3d00)"></i>
<i class="r" style="left:153px;top:57px;width:340px;height:2px;background:linear-gradient(90deg,#00ff1d,#00ff19 37px,#39ff16 68px,#77ff12 98px,#b6ff0e 125px,#fffe0a 153px,#ffd906 168px,#ffb903 184px,#ff9b00 203px,#ff8200 224px,#ff6b00 248px,#ff5600 275px,#ff4400 306px,#ff3400)"></i>
<i class="r" style="left:153px;top:59px;width:360px;height:2px;background:linear-gradient(90deg,#00ff20,#00ff1c 37px,#01ff1c 38px,#3aff19 69px,#76ff16 98px,#b3ff12 124px,#feff0e 152px,#fffe0e 153px,#ffd60a 169px,#ffb306 187px,#ff9402 208px,#ff7a00 231px,#ff6300 257px,#ff4e00 287px,#ff3c00 321px,#ff2c00)"></i>
<i class="r" style="left:154px;top:61px;width:379px;height:2px;background:linear-gradient(90deg,#00ff23,#01ff20 37px,#38ff1d 67px,#74ff1a 96px,#b1ff17 122px,#d8ff15 137px,#feff13 151px,#fffd12 152px,#ffe810 160px,#ffd30d 169px,#ffaf09 188px,#ff9005 210px,#ff7401 235px,#ff5c00 264px,#ff4700 297px,#ff3500 335px,#ff2500)"></i>
<i class="r" style="left:154px;top:63px;width:398px;height:2px;background:linear-gradient(90deg,#00ff26,#00ff23 37px,#3aff20 68px,#78ff1d 98px,#b9ff1a 125px,#ffff17 151px,#ffe714 160px,#ffd311 169px,#ffbf0e 179px,#ffad0c 189px,#ff8c07 213px,#ff6f03 240px,#ff5600 272px,#ff4100 308px,#ff2e00 350px,#ff1e00)"></i>
<i class="r" style="left:155px;top:65px;width:417px;height:2px;background:linear-gradient(90deg,#00ff29,#00ff26 36px,#01ff26 37px,#3bff24 68px,#78ff21 97px,#b9ff1e 124px,#ffff1b 150px,#ffe717 159px,#ffd214 168px,#ffbc11 179px,#ffa90e 190px,#ff8709 215px,#ff6a05 244px,#ff5101 278px,#ff3b00 318px,#ff2800 364px,#ff1900)"></i>
<i class="r" style="left:155px;top:67px;width:437px;height:2px;background:linear-gradient(90deg,#00ff2c,#01ff2a 37px,#39ff27 67px,#76ff25 96px,#b6ff22 123px,#fffe1f 150px,#ffe61b 159px,#ffcf18 169px,#ffba14 180px,#ffa611 192px,#ff930e 205px,#ff820b 219px,#ff6506 250px,#ff4c02 286px,#ff3600 329px,#ff2300 379px,#ff1300)"></i>
<i class="r" style="left:156px;top:69px;width:456px;height:2px;background:linear-gradient(90deg,#00ff2f,#00ff2d 36px,#38ff2b 66px,#76ff29 95px,#b4ff27 121px,#fffe24 149px,#ffe31f 159px,#ffcd1b 169px,#ffb617 181px,#ffa213 193px,#ff9010 206px,#ff7e0d 221px,#ff6008 254px,#ff4603 293px,#ff3100 339px,#ff1e00 393px,#ff0f00)"></i>
<i class="r" style="left:156px;top:71px;width:475px;height:2px;background:linear-gradient(90deg,#00ff32,#00ff30 36px,#02ff30 37px,#3aff2f 67px,#76ff2d 95px,#b2ff2b 120px,#d6ff2a 134px,#feff28 148px,#fffd28 149px,#ffe323 159px,#ffca1e 170px,#ffb31a 182px,#ff9f16 195px,#ff8c12 209px,#ff7b0f 224px,#ff6a0c 241px,#ff5c09 259px,#ff4204 300px,#ff2c00 349px,#ff1a00 407px,#ff0a00)"></i>
<i class="r" style="left:157px;top:73px;width:494px;height:2px;background:linear-gradient(90deg,#00ff36,#01ff34 36px,#3aff32 66px,#78ff31 95px,#baff2f 122px,#ffff2d 147px,#ffe227 158px,#ffc922 169px,#ffb31d 181px,#ff9c19 195px,#ff8915 210px,#ff7711 226px,#ff670e 243px,#ff580b 262px,#ff3e05 306px,#ff2801 358px,#ff1600 420px,#ff0600)"></i>
<i class="r" style="left:157px;top:75px;width:514px;height:2px;background:linear-gradient(90deg,#00ff39,#00ff37 36px,#39ff36 66px,#78ff35 95px,#baff33 122px,#ffff31 147px,#ffe12b 158px,#ffc925 169px,#ffb020 182px,#ff9a1b 196px,#ff8717 211px,#ff7513 228px,#ff6410 246px,#ff550c 266px,#ff3b07 312px,#ff2402 368px,#ff1200 434px,#ff0300)"></i>
<i class="r" style="left:158px;top:77px;width:533px;height:2px;background:linear-gradient(90deg,#00ff3c,#00ff3b 35px,#02ff3b 36px,#3bff3a 66px,#78ff39 94px,#b7ff37 120px,#fffe36 146px,#ffe12f 157px,#ffc629 169px,#ffae23 182px,#ff971e 197px,#ff8319 213px,#ff7115 230px,#ff6011 249px,#ff510e 270px,#ff3707 319px,#ff2102 378px,#ff0e00 452px,#ff0000)"></i>
<i class="r" style="left:158px;top:79px;width:553px;height:2px;background:linear-gradient(90deg,#00ff3f,#01ff3f 36px,#39ff3e 65px,#75ff3d 93px,#b5ff3c 119px,#fffe3a 146px,#ffe033 157px,#ffc32c 170px,#ffaa26 184px,#ff9420 199px,#ff7f1b 216px,#ff6d16 234px,#ff5c12 254px,#ff4d0f 276px,#ff3e0b 302px,#ff3108 330px,#ff1b02 397px,#ff1100 435px,#ff0500 497px,#ff0000 527px,#ff0000)"></i>
<i class="r" style="left:158px;top:81px;width:572px;height:2px;background:linear-gradient(90deg,#00ff43,#00ff42 36px,#38ff41 65px,#75ff41 93px,#b2ff40 118px,#feff3f 145px,#fffd3f 146px,#ffdd36 158px,#ffc12f 171px,#ffa828 185px,#ff9022 201px,#ff7c1d 218px,#ff6918 237px,#ff5914 258px,#ff4910 282px,#ff3a0c 310px,#ff2c08 341px,#ff1502 415px,#ff0c00 457px,#ff0000 525px,#ff0000)"></i>
<i class="r" style="left:159px;top:83px;width:590px;height:2px;background:linear-gradient(90deg,#00ff46,#00ff46 35px,#02ff46 36px,#3aff45 65px,#75ff45 92px,#b0ff44 116px,#d6ff44 130px,#feff44 144px,#fffd43 145px,#ffdd3a 157px,#ffc032 170px,#ffa62b 185px,#ff8f25 201px,#ff791f 219px,#ff661a 239px,#ff5515 261px,#ff4511 286px,#ff360d 317px,#ff2809 351px,#ff1c06 389px,#ff1103 432px,#ff0000 522px,#ff0000)"></i>
<i class="r" style="left:159px;top:85px;width:590px;height:2px;background:linear-gradient(90deg,#00ff4a,#01ff49 36px,#39ff49 65px,#77ff49 93px,#b8ff49 119px,#ffff48 144px,#ffde3f 156px,#ffc237 169px,#ffa72f 184px,#ff8f28 200px,#ff7a22 218px,#ff671d 238px,#ff5518 260px,#ff4513 285px,#ff360e 316px,#ff280a 350px,#ff1c07 388px,#ff1104 431px,#ff0000 520px,#ff0000)"></i>
<i class="r" style="left:160px;top:87px;width:587px;height:2px;background:linear-gradient(90deg,#00ff4d,#01ff4d 35px,#39ff4d 64px,#77ff4d 92px,#b8ff4d 118px,#ffff4d 143px,#ffde43 155px,#ffc13a 168px,#ffa632 183px,#ff8f2b 199px,#ff7925 217px,#ff661f 237px,#ff551a 259px,#ff4515 284px,#ff3510 315px,#ff270c 349px,#ff1b08 387px,#ff1005 430px,#ff0000 518px,#ff0000)"></i>
<i class="r" style="left:160px;top:89px;width:584px;height:2px;background:linear-gradient(90deg,#00ff51,#00ff51 35px,#39ff51 64px,#77ff51 92px,#b6ff52 117px,#fffe52 143px,#ffdd47 155px,#ffc03e 168px,#ffa536 183px,#ff8e2e 199px,#ff7927 217px,#ff6621 237px,#ff541c 259px,#ff4517 283px,#ff3612 313px,#ff280e 347px,#ff1b0a 385px,#ff1006 428px,#ff0001 516px,#ff0000)"></i>
<i class="r" style="left:161px;top:91px;width:581px;height:2px;background:linear-gradient(90deg,#00ff54,#01ff55 35px,#3aff55 64px,#77ff56 91px,#b3ff56 115px,#feff57 141px,#fffd56 142px,#ffdd4b 154px,#ffc042 167px,#ffa639 181px,#ff8f32 197px,#ff792a 215px,#ff6624 235px,#ff551e 257px,#ff4519 281px,#ff3614 311px,#ff280f 345px,#ff1b0b 383px,#ff1108 425px,#ff0002 513px,#ff0000)"></i>
<i class="r" style="left:161px;top:93px;width:579px;height:2px;background:linear-gradient(90deg,#00ff58,#01ff58 35px,#38ff59 63px,#74ff5a 90px,#b1ff5b 114px,#d7ff5b 128px,#feff5c 141px,#fffd5b 142px,#ffdc50 154px,#ffbf46 167px,#ffa63d 181px,#ff8e35 197px,#ff792d 215px,#ff6526 235px,#ff5420 257px,#ff451b 281px,#ff3516 311px,#ff2711 345px,#ff1b0d 383px,#ff1009 425px,#ff0003 511px,#ff0000)"></i>
<i class="r" style="left:162px;top:95px;width:576px;height:2px;background:linear-gradient(90deg,#00ff5b,#00ff5c 34px,#3aff5d 63px,#76ff5e 90px,#b9ff5f 116px,#ffff61 140px,#ffde55 152px,#ffc14a 165px,#ffa741 179px,#ff8f38 195px,#ff7930 213px,#ff6729 232px,#ff5523 254px,#ff451d 278px,#ff3618 308px,#ff2813 341px,#ff1b0e 379px,#ff110a 421px,#ff0004 508px,#ff0001)"></i>
<i class="r" style="left:162px;top:97px;width:573px;height:2px;background:linear-gradient(90deg,#00ff5f,#01ff60 35px,#3bff61 64px,#79ff63 91px,#b9ff64 116px,#ffff66 140px,#ffe05a 151px,#ffc24f 164px,#ffa845 178px,#ff903c 194px,#ff7a33 212px,#ff672c 231px,#ff5526 253px,#ff4520 277px,#ff361a 307px,#ff2815 340px,#ff1c10 377px,#ff110c 419px,#ff0006 506px,#ff0002)"></i>
<i class="r" style="left:163px;top:99px;width:570px;height:2px;background:linear-gradient(90deg,#00ff62,#01ff64 34px,#39ff65 62px,#76ff67 89px,#b7ff69 114px,#fffe6a 139px,#ffdf5e 150px,#ffc152 163px,#ffa748 177px,#ff8f3f 193px,#ff7936 211px,#ff662f 230px,#ff5528 252px,#ff4522 276px,#ff361c 305px,#ff2816 338px,#ff1c11 375px,#ff100d 417px,#ff0007 503px,#ff0003)"></i>
<i class="r" style="left:163px;top:101px;width:568px;height:2px;background:linear-gradient(90deg,#00ff66,#00ff68 34px,#38ff6a 62px,#76ff6c 89px,#b4ff6d 113px,#fdff70 138px,#fffe6f 139px,#ffdf63 150px,#ffc156 163px,#ffa74c 177px,#ff8e42 193px,#ff7939 211px,#ff6631 230px,#ff552a 251px,#ff4524 275px,#ff361e 304px,#ff2818 337px,#ff1b13 374px,#ff100e 416px,#ff0008 501px,#ff0004)"></i>
<i class="r" style="left:164px;top:103px;width:565px;height:2px;background:linear-gradient(90deg,#00ff6a,#00ff6c 33px,#01ff6c 34px,#3aff6e 62px,#76ff70 88px,#b1ff72 111px,#d6ff73 124px,#feff75 137px,#fffd74 138px,#ffde67 149px,#ffc05a 162px,#ffa64f 176px,#ff8e45 192px,#ff783c 210px,#ff6534 229px,#ff542d 250px,#ff4426 274px,#ff351f 303px,#ff271a 336px,#ff1b14 373px,#ff1010 414px,#ff0009 498px,#ff0005)"></i>
<i class="r" style="left:164px;top:105px;width:562px;height:2px;background:linear-gradient(90deg,#00ff6e,#01ff70 34px,#38ff72 61px,#73ff75 87px,#afff77 110px,#d7ff78 124px,#feff7a 137px,#fffc79 138px,#ffdd6b 149px,#ffbf5e 162px,#ffa553 176px,#ff8d48 192px,#ff783f 209px,#ff6537 228px,#ff542f 249px,#ff4528 273px,#ff3521 302px,#ff271b 335px,#ff1b16 371px,#ff1011 412px,#ff000a 496px,#ff0006)"></i>
<i class="r" style="left:165px;top:107px;width:559px;height:2px;background:linear-gradient(90deg,#00ff71,#00ff74 33px,#39ff77 61px,#78ff79 88px,#baff7c 113px,#ffff7f 136px,#ffdf71 147px,#ffc163 160px,#ffa657 174px,#ff8f4d 189px,#ff7a43 206px,#ff673a 225px,#ff5532 246px,#ff452b 270px,#ff3624 299px,#ff281d 332px,#ff1b18 368px,#ff1013 409px,#ff000b 493px,#ff0007)"></i>
<i class="r" style="left:165px;top:109px;width:557px;height:2px;background:linear-gradient(90deg,#00ff75,#00ff78 33px,#01ff78 34px,#3bff7b 62px,#78ff7e 88px,#b8ff81 112px,#fffe84 136px,#ffdf75 147px,#ffc067 160px,#ffa65b 174px,#ff8f50 189px,#ff7946 206px,#ff663d 225px,#ff5534 246px,#ff452d 269px,#ff3626 298px,#ff281f 330px,#ff1c1a 366px,#ff1114 407px,#ff000c 491px,#ff0008)"></i>
<i class="r" style="left:166px;top:111px;width:554px;height:2px;background:linear-gradient(90deg,#00ff79,#01ff7c 33px,#39ff7f 60px,#75ff83 86px,#b5ff86 110px,#fffe89 135px,#ffde7a 146px,#ffc06b 159px,#ffa55e 173px,#ff8e53 188px,#ff7949 205px,#ff663f 224px,#ff5437 245px,#ff452f 268px,#ff3528 297px,#ff2821 329px,#ff1b1b 365px,#ff1016 406px,#ff000e 488px,#ff0009)"></i>
<i class="r" style="left:166px;top:113px;width:551px;height:2px;background:linear-gradient(90deg,#00ff7d,#00ff81 33px,#38ff84 60px,#75ff87 86px,#b2ff8b 109px,#feff8f 134px,#fffd8e 135px,#ffdd7e 146px,#ffbf6f 159px,#ffa562 173px,#ff8d56 188px,#ff784b 205px,#ff6642 223px,#ff5439 244px,#ff4532 267px,#ff352a 296px,#ff2723 328px,#ff1b1d 364px,#ff1017 404px,#ff000f 486px,#ff000a)"></i>
<i class="r" style="left:167px;top:115px;width:548px;height:2px;background:linear-gradient(90deg,#00ff81,#00ff85 32px,#02ff85 33px,#3aff88 60px,#75ff8c 85px,#b0ff90 107px,#d6ff92 120px,#feff95 133px,#fffd94 134px,#ffdd83 145px,#ffc074 157px,#ffa666 171px,#ff8e5a 186px,#ff794f 203px,#ff6645 221px,#ff553c 242px,#ff4534 265px,#ff362c 293px,#ff2825 325px,#ff1b1e 361px,#ff1019 401px,#ff0010 483px,#ff000b)"></i>
<i class="r" style="left:167px;top:117px;width:546px;height:2px;background:linear-gradient(90deg,#00ff85,#01ff89 33px,#3aff8d 60px,#77ff91 86px,#b8ff96 110px,#ffff9a 133px,#ffdf89 144px,#ffc27a 156px,#ffa76b 170px,#ff8f5e 185px,#ff7952 202px,#ff6748 220px,#ff553f 241px,#ff4536 264px,#ff362e 292px,#ff2827 324px,#ff1b20 360px,#ff101a 400px,#ff0011 481px,#ff000c)"></i>
<i class="r" style="left:167px;top:119px;width:543px;height:2px;background:linear-gradient(90deg,#00ff89,#00ff8d 33px,#39ff91 60px,#77ff96 86px,#b9ff9b 110px,#ffffa0 133px,#ffde8e 144px,#ffc17e 156px,#ffa66f 170px,#ff8e61 185px,#ff7955 202px,#ff664b 220px,#ff5542 240px,#ff4539 263px,#ff3630 291px,#ff2829 323px,#ff1b22 358px,#ff101c 398px,#ff0013 479px,#ff000d)"></i>
<i class="r" style="left:168px;top:121px;width:540px;height:2px;background:linear-gradient(90deg,#00ff8d,#00ff92 32px,#02ff92 33px,#3bff96 60px,#77ff9b 85px,#b6ffa0 108px,#fffea5 132px,#ffdd92 143px,#ffc182 155px,#ffa773 168px,#ff8f66 183px,#ff7959 200px,#ff664e 218px,#ff5545 238px,#ff453b 261px,#ff3633 289px,#ff282b 320px,#ff1c24 355px,#ff111d 395px,#ff0014 476px,#ff000f)"></i>
<i class="r" style="left:168px;top:123px;width:538px;height:2px;background:linear-gradient(90deg,#00ff91,#01ff96 33px,#38ff9b 59px,#75ffa0 84px,#b3ffa5 107px,#fdffab 131px,#fffdaa 132px,#ffdd97 143px,#ffc086 155px,#ffa677 168px,#ff8f69 183px,#ff795c 200px,#ff6651 218px,#ff5547 238px,#ff453e 261px,#ff3534 289px,#ff282c 320px,#ff1b25 355px,#ff101f 394px,#ff0015 474px,#ff0010)"></i>
<i class="r" style="left:169px;top:125px;width:535px;height:2px;background:linear-gradient(90deg,#00ff95,#00ff9b 32px,#38ff9f 58px,#74ffa5 83px,#b0ffaa 105px,#d7ffad 118px,#feffb1 130px,#fffdb0 131px,#ffdc9c 142px,#ffbf8a 154px,#ffa67b 167px,#ff8e6c 182px,#ff785f 199px,#ff6554 217px,#ff5449 237px,#ff4540 259px,#ff3537 287px,#ff272e 318px,#ff1b27 353px,#ff1020 392px,#ff0016 471px,#ff0011)"></i>
<i class="r" style="left:169px;top:127px;width:532px;height:2px;background:linear-gradient(90deg,#00ff99,#00ff9f 32px,#02ff9f 33px,#3cffa5 60px,#79ffaa 85px,#b9ffb0 108px,#ffffb7 130px,#ffdea2 141px,#ffc190 153px,#ffa780 166px,#ff8f71 181px,#ff7a64 197px,#ff6658 215px,#ff554d 235px,#ff4643 257px,#ff363a 284px,#ff2831 315px,#ff1c29 350px,#ff1122 389px,#ff0018 469px,#ff0012)"></i>
<i class="r" style="left:170px;top:129px;width:529px;height:2px;background:linear-gradient(90deg,#00ff9e,#01ffa4 32px,#39ffa9 58px,#77ffaf 83px,#b7ffb6 106px,#ffffbc 129px,#ffe0a9 139px,#ffc296 151px,#ffa885 164px,#ff8f75 179px,#ff7a67 195px,#ff675b 213px,#ff5550 233px,#ff4545 256px,#ff363b 283px,#ff2832 314px,#ff1c2b 348px,#ff1024 387px,#ff0019 466px,#ff0013)"></i>
<i class="r" style="left:170px;top:131px;width:527px;height:2px;background:linear-gradient(90deg,#00ffa2,#00ffa8 32px,#39ffae 58px,#77ffb4 83px,#b7ffbb 106px,#fffec2 129px,#ffe0ae 139px,#ffc29a 151px,#ffa789 164px,#ff8f79 179px,#ff7a6b 195px,#ff665e 213px,#ff5552 233px,#ff4548 255px,#ff363e 282px,#ff2835 313px,#ff1b2c 347px,#ff1025 386px,#ff001a 464px,#ff0014)"></i>
<i class="r" style="left:171px;top:133px;width:524px;height:2px;background:linear-gradient(90deg,#00ffa6,#00ffad 31px,#02ffad 32px,#3bffb3 58px,#76ffba 82px,#b4ffc0 104px,#fdffc8 127px,#fffdc7 128px,#ffdfb3 138px,#ffc19e 150px,#ffa78d 163px,#ff8e7c 178px,#ff796e 194px,#ff6661 212px,#ff5455 232px,#ff454a 254px,#ff3540 281px,#ff2736 312px,#ff1b2e 346px,#ff1027 384px,#ff001c 462px,#ff0015)"></i>
<i class="r" style="left:171px;top:135px;width:521px;height:2px;background:linear-gradient(90deg,#00ffab,#01ffb2 32px,#38ffb8 57px,#74ffbf 81px,#b1ffc6 103px,#d6ffca 115px,#feffce 127px,#fffdcd 128px,#ffdeb8 138px,#ffc0a3 150px,#ffa691 163px,#ff8d80 178px,#ff7871 194px,#ff6563 212px,#ff5458 231px,#ff454d 253px,#ff3542 280px,#ff2839 310px,#ff1b30 344px,#ff1028 382px,#ff001d 460px,#ff0017)"></i>
<i class="r" style="left:172px;top:137px;width:518px;height:2px;background:linear-gradient(90deg,#00ffaf,#00ffb6 31px,#38ffbd 56px,#73ffc4 80px,#aeffcb 101px,#d7ffd0 114px,#feffd5 126px,#fffcd3 127px,#ffdebd 137px,#ffc0a7 149px,#ffa595 162px,#ff8e84 176px,#ff7975 192px,#ff6567 210px,#ff555b 229px,#ff4550 251px,#ff3544 278px,#ff273b 308px,#ff1b32 342px,#ff102a 380px,#ff001e 457px,#ff0018)"></i>
<i class="r" style="left:172px;top:139px;width:516px;height:2px;background:linear-gradient(90deg,#00ffb4,#00ffbb 31px,#02ffbb 32px,#3cffc3 58px,#79ffca 82px,#bbffd2 105px,#ffffdb 126px,#ffe0c4 136px,#ffc1ad 148px,#ffa69a 161px,#ff8f89 175px,#ff7979 191px,#ff676b 208px,#ff565f 227px,#ff4653 249px,#ff3647 276px,#ff283d 306px,#ff1c34 339px,#ff112c 377px,#ff0020 455px,#ff0019)"></i>
<i class="r" style="left:173px;top:141px;width:513px;height:2px;background:linear-gradient(90deg,#00ffb8,#01ffc0 31px,#39ffc7 56px,#76ffcf 80px,#b5ffd7 102px,#fffee1 125px,#ffdfc9 135px,#ffc0b2 147px,#ffa69e 160px,#ff8e8c 174px,#ff797c 190px,#ff666e 207px,#ff5561 226px,#ff4555 248px,#ff3549 275px,#ff273f 305px,#ff1b36 338px,#ff102d 376px,#ff0021 452px,#ff001a)"></i>
<i class="r" style="left:173px;top:143px;width:510px;height:2px;background:linear-gradient(90deg,#00ffbd,#01ffc5 31px,#39ffcd 56px,#76ffd5 80px,#b5ffdd 102px,#fffee6 125px,#ffdece 135px,#ffc0b7 147px,#ffa5a2 160px,#ff8e90 174px,#ff787f 190px,#ff6571 207px,#ff5464 226px,#ff4558 247px,#ff364c 273px,#ff2841 303px,#ff1b38 336px,#ff102f 374px,#ff0023 450px,#ff001b)"></i>
<i class="r" style="left:174px;top:145px;width:507px;height:2px;background:linear-gradient(90deg,#00ffc1,#00ffca 30px,#02ffca 31px,#3bffd2 56px,#76ffda 79px,#b2ffe3 100px,#feffee 123px,#fffdec 124px,#ffded3 134px,#ffbfbb 146px,#ffa6a8 158px,#ff8f95 172px,#ff7983 188px,#ff6675 205px,#ff5567 224px,#ff445a 246px,#ff354e 272px,#ff2743 302px,#ff1b39 335px,#ff1031 372px,#ff0024 447px,#ff001d)"></i>
<i class="r" style="left:174px;top:147px;width:505px;height:2px;background:linear-gradient(90deg,#00ffc6,#01ffcf 31px,#3affd7 56px,#75ffe0 79px,#afffe9 99px,#d5ffee 111px,#fefff4 123px,#fffcf2 124px,#ffddd9 134px,#ffbec0 146px,#ffa5ac 158px,#ff8e98 172px,#ff7887 188px,#ff6577 205px,#ff546a 224px,#ff455d 245px,#ff3551 271px,#ff2846 300px,#ff1b3c 333px,#ff1033 370px,#ff0025 445px,#ff001e)"></i>
<i class="r" style="left:175px;top:149px;width:501px;height:2px;background:linear-gradient(90deg,#00ffcb,#01ffd4 30px,#3affdd 55px,#78ffe6 79px,#b9fff0 101px,#fffffb 122px,#ffdcde 133px,#ffc0c6 144px,#ffa7b1 156px,#ff8f9d 170px,#ff7a8c 185px,#ff677c 202px,#ff556e 221px,#ff4561 242px,#ff3654 268px,#ff2848 297px,#ff1b3e 330px,#ff1135 366px,#ff0027 442px,#ff001f)"></i>
<i class="r" style="left:175px;top:151px;width:499px;height:2px;background:linear-gradient(90deg,#00ffcf,#00ffd9 30px,#02ffd9 31px,#39ffe2 55px,#72ffeb 77px,#b0fff5 98px,#eeffff 117px,#fffbfe 123px,#ffdbe3 133px,#ffbdc9 145px,#ffa4b4 157px,#ff8ca0 171px,#ff788e 186px,#ff657e 203px,#ff5470 222px,#ff4462 243px,#ff3555 269px,#ff274a 298px,#ff1b3f 331px,#ff1036 367px,#ff0028 440px,#ff0021)"></i>
<i class="r" style="left:176px;top:153px;width:496px;height:2px;background:linear-gradient(90deg,#00ffd4,#00ffde 29px,#01ffde 30px,#34ffe7 52px,#67ffef 72px,#94fff7 88px,#c6ffff 104px,#fff3fe 124px,#ffd5e4 134px,#ffb8ca 146px,#ffa0b5 158px,#ff89a1 172px,#ff7590 187px,#ff627f 204px,#ff5171 223px,#ff4364 243px,#ff3457 269px,#ff264b 298px,#ff1037 366px,#ff002a 437px,#ff0022)"></i>
<i class="r" style="left:176px;top:155px;width:494px;height:2px;background:linear-gradient(90deg,#00ffd9,#01ffe4 30px,#25ffea 46px,#4dfff0 62px,#75fff7 77px,#a0ffff 92px,#ffecfe 126px,#ffcfe4 136px,#ffb3cb 148px,#ff9bb6 160px,#ff85a2 174px,#ff7291 189px,#ff6081 206px,#ff4f72 225px,#ff4165 245px,#ff3258 271px,#ff254c 300px,#ff0f38 368px,#ff002b 435px,#ff0023)"></i>
<i class="r" style="left:176px;top:157px;width:491px;height:2px;background:linear-gradient(90deg,#00ffde,#00ffe9 30px,#3dfff3 56px,#80ffff 81px,#ffe5fe 128px,#ffc9e4 138px,#ffaecb 150px,#ff97b7 162px,#ff82a3 176px,#ff6f92 191px,#ff5d82 208px,#ff4d73 227px,#ff3f67 247px,#ff3159 273px,#ff244e 301px,#ff0e3a 369px,#ff002d 433px,#ff0025)"></i>
<i class="r" style="left:177px;top:159px;width:488px;height:2px;background:linear-gradient(90deg,#00ffe3,#00ffee 29px,#01ffee 30px,#2efff6 49px,#5effff 68px,#a6f1ff 96px,#ffdefe 129px,#ffc3e5 139px,#ffa9cc 151px,#ff93b8 163px,#ff7ea4 177px,#ff6c93 192px,#ff5b83 209px,#ff4b74 228px,#ff3d68 248px,#ff2f5a 274px,#ff234f 302px,#ff0d3b 369px,#ff002f 430px,#ff0026)"></i>
<i class="r" style="left:177px;top:161px;width:486px;height:2px;background:linear-gradient(90deg,#00ffe8,#01fff4 30px,#3effff 56px,#96eeff 91px,#ffd8fe 131px,#ffbee5 141px,#ffa4cd 153px,#ff8fb9 165px,#ff7ba5 179px,#ff6994 194px,#ff5884 211px,#ff4a76 229px,#ff3c69 249px,#ff2e5c 275px,#ff2250 303px,#ff0d3c 370px,#ff0030 428px,#ff0027)"></i>
<i class="r" style="left:178px;top:163px;width:483px;height:2px;background:linear-gradient(90deg,#00ffed,#00fff9 29px,#20ffff 43px,#88eaff 86px,#ffd2fe 132px,#ffb8e6 142px,#ffa0ce 154px,#ff8bba 166px,#ff78a6 180px,#ff6695 195px,#ff5685 212px,#ff3a6b 250px,#ff2c5d 276px,#ff2051 304px,#ff0c3d 370px,#ff0032 425px,#ff0029)"></i>
<i class="r" style="left:178px;top:165px;width:480px;height:2px;background:linear-gradient(90deg,#00fff2,#00fffe 29px,#02ffff 30px,#79e7ff 81px,#ffcbfe 134px,#ffb3e6 144px,#ff9bce 156px,#ff87ba 168px,#ff74a7 182px,#ff6396 197px,#ff5487 213px,#ff396c 251px,#ff2c5f 276px,#ff2053 304px,#ff0c3f 370px,#ff0033 423px,#ff002a)"></i>
<i class="r" style="left:179px;top:167px;width:477px;height:2px;background:linear-gradient(90deg,#00fff8,#00ffff 17px,#01faff 29px,#79e2ff 81px,#ffc5fe 135px,#ffaee6 145px,#ff97cf 157px,#ff84bb 169px,#ff71a8 183px,#ff6197 198px,#ff5288 214px,#ff376d 252px,#ff2a60 277px,#ff1f54 305px,#ff0b40 371px,#ff0035 420px,#ff002b)"></i>
<i class="r" style="left:179px;top:169px;width:475px;height:2px;background:linear-gradient(90deg,#00fffd,#00ffff 6px,#00f5ff 29px,#78dcff 82px,#ffc0fe 137px,#ffa9e7 147px,#ff93cf 159px,#ff80bc 171px,#ff6ea9 185px,#ff5e98 200px,#ff5089 216px,#ff366f 254px,#ff2961 279px,#ff1d55 307px,#ff0a41 372px,#ff0037 418px,#ff002d)"></i>
<i class="r" style="left:180px;top:171px;width:472px;height:2px;background:linear-gradient(90deg,#00fcff,#00f0ff 28px,#02efff 29px,#7ad6ff 83px,#ffbafe 138px,#ffa4e7 148px,#ff90d2 159px,#ff7ebe 171px,#ff6dad 184px,#ff5e9d 198px,#ff508d 214px,#ff3873 249px,#ff2a65 274px,#ff1f59 302px,#ff0b43 367px,#ff0038 415px,#ff002e)"></i>
<i class="r" style="left:180px;top:173px;width:469px;height:2px;background:linear-gradient(90deg,#00f7ff,#01eaff 29px,#7ad1ff 84px,#ffb5fe 140px,#ffa0e8 150px,#ff8cd2 161px,#ff7bbf 173px,#ff6aad 186px,#ff4e8f 215px,#ff3675 250px,#ff2967 275px,#ff1e5a 302px,#ff0a45 366px,#ff003a 414px,#ff0030)"></i>
<i class="r" style="left:181px;top:175px;width:466px;height:2px;background:linear-gradient(90deg,#00f2ff,#00e6ff 28px,#79ccff 84px,#ffaffe 141px,#ff9be8 151px,#ff88d3 162px,#ff77c0 174px,#ff69b0 186px,#ff4d91 215px,#ff3577 250px,#ff2868 275px,#ff1d5c 302px,#ff0a46 366px,#ff003b 411px,#ff0031)"></i>
<i class="r" style="left:181px;top:177px;width:464px;height:2px;background:linear-gradient(90deg,#00edff,#00e1ff 28px,#02e1ff 29px,#79c7ff 85px,#ffaafe 143px,#ff97e8 153px,#ff85d4 164px,#ff74c1 176px,#ff66b0 188px,#ff4b92 217px,#ff3478 252px,#ff2769 277px,#ff1c5d 304px,#ff0947 368px,#ff003d 409px,#ff0033)"></i>
<i class="r" style="left:182px;top:179px;width:460px;height:2px;background:linear-gradient(90deg,#00e8ff,#01dcff 28px,#7bc2ff 86px,#ffa5fe 144px,#ff92e9 154px,#ff81d4 165px,#ff71c1 177px,#ff63b1 189px,#ff4993 218px,#ff3279 252px,#ff266b 276px,#ff1b5f 303px,#ff0949 366px,#ff003f 406px,#ff0034)"></i>
<i class="r" style="left:182px;top:181px;width:458px;height:2px;background:linear-gradient(90deg,#00e4ff,#00d8ff 28px,#7bbeff 87px,#ffa1fe 146px,#ff8ee9 156px,#ff7dd5 167px,#ff6dc2 179px,#ff60b2 191px,#ff4694 220px,#ff317b 253px,#ff256d 277px,#ff1b60 304px,#ff084a 367px,#ff0041 404px,#ff0036)"></i>
<i class="r" style="left:183px;top:183px;width:455px;height:2px;background:linear-gradient(90deg,#00dfff,#00d4ff 27px,#02d3ff 28px,#7ab9ff 87px,#ff9cfe 147px,#ff8ae9 157px,#ff7ad5 168px,#ff6ac3 180px,#ff5db3 192px,#ff4495 221px,#ff307c 254px,#ff246e 278px,#ff1961 305px,#ff074b 368px,#ff0042 401px,#ff0037)"></i>
<i class="r" style="left:183px;top:185px;width:453px;height:2px;background:linear-gradient(90deg,#00dbff,#01cfff 28px,#7ab5ff 88px,#ff97fe 149px,#ff86e9 159px,#ff76d6 170px,#ff67c3 182px,#ff5bb4 194px,#ff4397 222px,#ff2f7e 255px,#ff236f 279px,#ff1962 306px,#ff064c 369px,#ff0044 399px,#ff0039)"></i>
<i class="r" style="left:184px;top:187px;width:449px;height:2px;background:linear-gradient(90deg,#00d6ff,#00cbff 27px,#7ab1ff 88px,#ff93fe 150px,#ff82ea 160px,#ff74d8 170px,#ff65c5 182px,#ff59b6 194px,#ff4298 222px,#ff2d7f 255px,#ff2271 279px,#ff1864 305px,#ff064e 367px,#ff0046 396px,#ff003a)"></i>
<i class="r" style="left:184px;top:189px;width:447px;height:2px;background:linear-gradient(90deg,#00d2ff,#00c7ff 27px,#02c7ff 28px,#7bacff 90px,#ff8ffe 152px,#ff7fea 162px,#ff71d8 172px,#ff56b6 196px,#ff4099 224px,#ff2c81 256px,#ff2172 280px,#ff1766 306px,#ff064f 368px,#ff0048 394px,#ff003c)"></i>
<i class="r" style="left:185px;top:191px;width:444px;height:2px;background:linear-gradient(90deg,#00ceff,#01c3ff 27px,#7ba8ff 90px,#ff8aff 153px,#ff7bea 163px,#ff6dd9 173px,#ff54b7 197px,#ff3e9b 224px,#ff2b82 256px,#ff2074 280px,#ff1667 306px,#ff0550 368px,#ff004a 391px,#ff003e)"></i>
<i class="r" style="left:185px;top:193px;width:442px;height:2px;background:linear-gradient(90deg,#00caff,#00c0ff 27px,#7ba4ff 91px,#ff86ff 155px,#ff77eb 165px,#ff6ad9 175px,#ff51b8 199px,#ff3c9c 226px,#ff2a83 258px,#ff1f75 282px,#ff1568 308px,#ff0451 370px,#ff004c 389px,#ff003f)"></i>
<i class="r" style="left:186px;top:195px;width:438px;height:2px;background:linear-gradient(90deg,#00c6ff,#00bcff 26px,#02bcff 27px,#7aa0ff 91px,#ff82ff 156px,#ff74eb 166px,#ff67da 176px,#ff50ba 199px,#ff3b9e 226px,#ff2985 257px,#ff1e77 281px,#ff156a 307px,#ff0453 368px,#ff004e 386px,#ff0041)"></i>
<i class="r" style="left:186px;top:197px;width:436px;height:2px;background:linear-gradient(90deg,#00c3ff,#01b8ff 27px,#7c9cff 93px,#ff7eff 158px,#ff64da 178px,#ff4dba 201px,#ff399e 228px,#ff2886 259px,#ff1d78 283px,#ff146b 309px,#ff0354 370px,#ff0050 384px,#ff0043)"></i>
<i class="r" style="left:186px;top:199px;width:434px;height:2px;background:linear-gradient(90deg,#00bfff,#00b5ff 27px,#7c99ff 94px,#ff7bff 160px,#ff61da 180px,#ff4bbb 203px,#ff379f 230px,#ff2788 260px,#ff1c79 284px,#ff136c 310px,#ff0355 370px,#ff0052 382px,#ff0044)"></i>
<i class="r" style="left:187px;top:201px;width:431px;height:2px;background:linear-gradient(90deg,#00bcff,#00b1ff 26px,#02b1ff 27px,#7b95ff 94px,#ff77ff 161px,#ff5edb 181px,#ff48bc 204px,#ff36a1 230px,#ff2589 260px,#ff1b7b 284px,#ff126d 310px,#ff0256 370px,#ff0053 380px,#ff0046)"></i>
<i class="r" style="left:187px;top:203px;width:428px;height:2px;background:linear-gradient(90deg,#00b8ff,#01aeff 27px,#7b92ff 95px,#ff73ff 163px,#ff5bdb 183px,#ff47be 205px,#ff35a3 231px,#ff248b 261px,#ff1b7d 284px,#ff116f 310px,#ff0258 370px,#ff0055 378px,#ff0048)"></i>
<i class="r" style="left:188px;top:205px;width:425px;height:2px;background:linear-gradient(90deg,#00b5ff,#00abff 26px,#7b8fff 95px,#ff70ff 164px,#ff58dc 184px,#ff45be 206px,#ff33a3 232px,#ff238c 261px,#ff1a7e 284px,#ff1170 310px,#ff0159 370px,#ff004a)"></i>
<i class="r" style="left:188px;top:207px;width:423px;height:2px;background:linear-gradient(90deg,#00b2ff,#00a8ff 26px,#02a7ff 27px,#7c8bff 97px,#ff6cff 166px,#ff56dc 186px,#ff42bf 208px,#ff32a5 233px,#ff228e 262px,#ff197f 285px,#ff1072 311px,#ff005a 371px,#ff004b)"></i>
<i class="r" style="left:189px;top:209px;width:420px;height:2px;background:linear-gradient(90deg,#00aeff,#01a4ff 26px,#7c88ff 97px,#ff69ff 167px,#ff54de 186px,#ff41c0 208px,#ff30a7 233px,#ff218f 262px,#ff1881 285px,#ff0f73 311px,#ff005c 369px,#ff004d)"></i>
<i class="r" style="left:189px;top:211px;width:417px;height:2px;background:linear-gradient(90deg,#00abff,#00a2ff 26px,#7b85ff 98px,#ff66ff 169px,#ff51de 188px,#ff3fc1 210px,#ff2fa8 234px,#ff2192 262px,#ff1783 285px,#ff0f75 310px,#ff005e 367px,#ff004f)"></i>
<i class="r" style="left:190px;top:213px;width:414px;height:2px;background:linear-gradient(90deg,#00a8ff,#009fff 25px,#3b91ff 61px,#7b82ff 98px,#ff63ff 170px,#ff4fdf 189px,#ff3dc3 210px,#ff2eaa 234px,#ff2093 262px,#ff0f78 308px,#ff0060 364px,#ff0051)"></i>
<i class="r" style="left:190px;top:215px;width:412px;height:2px;background:linear-gradient(90deg,#00a5ff,#019cff 26px,#7d7eff 100px,#ff60ff 172px,#ff4cdf 191px,#ff3bc3 212px,#ff2cab 236px,#ff1f95 263px,#ff0e79 308px,#ff0062 362px,#ff0053)"></i>
<i class="r" style="left:191px;top:217px;width:408px;height:2px;background:linear-gradient(90deg,#00a2ff,#0099ff 25px,#7c7cff 100px,#ff5dff 173px,#ff4adf 192px,#ff39c4 213px,#ff2aab 237px,#ff1e96 263px,#ff0e7b 307px,#ff0065 359px,#ff0055)"></i>
<i class="r" style="left:191px;top:219px;width:406px;height:2px;background:linear-gradient(90deg,#009fff,#0096ff 25px,#7a79ff 100px,#ff5aff 175px,#ff48e1 193px,#ff38c6 214px,#ff29ad 238px,#ff1d98 264px,#ff0d7d 307px,#ff0067 357px,#ff0057)"></i>
<i class="r" style="left:192px;top:221px;width:403px;height:2px;background:linear-gradient(90deg,#009cff,#0193ff 25px,#7c76ff 101px,#ff57ff 176px,#ff46e1 194px,#ff36c6 215px,#ff28ae 238px,#ff1c99 264px,#ff0d7f 305px,#ff0069 354px,#ff0059)"></i>
<i class="r" style="left:192px;top:223px;width:401px;height:2px;background:linear-gradient(90deg,#009aff,#0091ff 25px,#7b73ff 102px,#ff54ff 178px,#ff43e2 196px,#ff34c7 217px,#ff26af 240px,#ff1b9b 265px,#ff0d81 305px,#ff006c 352px,#ff005b)"></i>
<i class="r" style="left:193px;top:225px;width:397px;height:2px;background:linear-gradient(90deg,#0097ff,#008eff 24px,#7b71ff 102px,#ff51ff 179px,#ff41e2 197px,#ff33c8 217px,#ff26b1 239px,#ff1a9d 264px,#ff0c84 303px,#ff006e 349px,#ff005d)"></i>
<i class="r" style="left:193px;top:227px;width:395px;height:2px;background:linear-gradient(90deg,#0094ff,#018cff 25px,#7c6eff 104px,#ff4eff 181px,#ff3fe2 199px,#ff31c9 219px,#ff24b2 241px,#ff199e 265px,#ff0c86 303px,#ff0070 347px,#ff005f)"></i>
<i class="r" style="left:194px;top:229px;width:392px;height:2px;background:linear-gradient(90deg,#0092ff,#0189ff 24px,#7c6bff 104px,#ff4cff 182px,#ff3ce3 200px,#ff2fca 219px,#ff23b4 241px,#ff18a0 265px,#ff0b87 302px,#ff0073 344px,#ff0061)"></i>
<i class="r" style="left:194px;top:231px;width:390px;height:2px;background:linear-gradient(90deg,#008fff,#0087ff 24px,#7c69ff 105px,#ff49ff 184px,#ff3ae3 202px,#ff2dcb 221px,#ff22b5 242px,#ff17a1 266px,#ff0b89 302px,#ff0075 343px,#ff0063)"></i>
<i class="r" style="left:195px;top:233px;width:386px;height:2px;background:linear-gradient(90deg,#008dff,#0184ff 24px,#7d66ff 106px,#ff46ff 185px,#ff39e4 202px,#ff2ccc 221px,#ff21b7 242px,#ff17a3 265px,#ff0b8c 300px,#ff0077 340px,#ff0065)"></i>
<i class="r" style="left:195px;top:235px;width:384px;height:2px;background:linear-gradient(90deg,#008aff,#0182ff 24px,#7d64ff 107px,#ff44ff 187px,#ff37e5 204px,#ff2acd 223px,#ff20b8 243px,#ff16a5 266px,#ff0a8e 300px,#ff007a 338px,#ff0067)"></i>
<i class="r" style="left:195px;top:237px;width:382px;height:2px;background:linear-gradient(90deg,#0088ff,#0080ff 24px,#7d62ff 108px,#ff42ff 189px,#ff35e5 206px,#ff29ce 224px,#ff1fba 244px,#ff15a6 267px,#ff0a90 299px,#ff007c 336px,#ff006a)"></i>
<i class="r" style="left:196px;top:239px;width:379px;height:2px;background:linear-gradient(90deg,#0086ff,#017eff 24px,#7c5fff 108px,#bc50ff 149px,#ff3fff 190px,#ff32e5 207px,#ff27cf 225px,#ff1dba 245px,#ff14a7 267px,#ff0992 298px,#ff007f 333px,#ff006c)"></i>
<i class="r" style="left:196px;top:241px;width:376px;height:2px;background:linear-gradient(90deg,#0084ff,#017bff 24px,#7c5dff 109px,#bb4dff 150px,#ff3dff 192px,#ff31e7 208px,#ff26d0 226px,#ff1cbc 246px,#ff13aa 267px,#ff0994 297px,#ff0082 331px,#ff006e)"></i>
<i class="r" style="left:197px;top:243px;width:373px;height:2px;background:linear-gradient(90deg,#0081ff,#0079ff 23px,#7c5bff 109px,#bc4bff 151px,#ff3aff 193px,#ff2fe7 209px,#ff24d1 227px,#ff1bbd 246px,#ff12ab 267px,#ff0996 296px,#ff0084 328px,#ff0070)"></i>
<i class="r" style="left:197px;top:245px;width:371px;height:2px;background:linear-gradient(90deg,#007fff,#0177ff 24px,#7d58ff 111px,#bd49ff 153px,#ff38ff 195px,#ff2de7 211px,#ff23d2 228px,#ff1abf 247px,#ff11ac 268px,#ff0899 295px,#ff0087 326px,#ff0073)"></i>
<i class="r" style="left:198px;top:247px;width:367px;height:2px;background:linear-gradient(90deg,#007dff,#0175ff 23px,#7d56ff 111px,#bc47ff 153px,#ff36ff 196px,#ff2ce9 211px,#ff22d4 228px,#ff19c0 247px,#ff11ae 267px,#ff089b 294px,#ff008a 323px,#ff0075)"></i>
<i class="r" style="left:198px;top:249px;width:365px;height:2px;background:linear-gradient(90deg,#007bff,#0073ff 23px,#7c54ff 112px,#bc44ff 155px,#ff34ff 198px,#ff2ae9 213px,#ff20d4 230px,#ff18c1 248px,#ff10b0 268px,#ff089d 293px,#ff008d 321px,#ff0078)"></i>
<i class="r" style="left:199px;top:251px;width:362px;height:2px;background:linear-gradient(90deg,#0079ff,#0171ff 23px,#7e52ff 113px,#bd42ff 156px,#ff32ff 199px,#ff28e9 214px,#ff1fd6 230px,#ff17c3 248px,#ff0fb2 267px,#ff07a0 291px,#ff008f 318px,#ff007a)"></i>
<i class="r" style="left:199px;top:253px;width:360px;height:2px;background:linear-gradient(90deg,#0077ff,#016fff 23px,#3e60ff 69px,#7d50ff 114px,#be40ff 158px,#ff30ff 201px,#ff26e9 216px,#ff1ed6 232px,#ff16c4 249px,#ff0eb3 268px,#ff07a2 291px,#ff0092 316px,#ff007c)"></i>
<i class="r" style="left:200px;top:255px;width:356px;height:2px;background:linear-gradient(90deg,#0075ff,#006dff 22px,#3d5eff 68px,#7d4eff 114px,#bd3eff 158px,#ff2dff 202px,#ff25eb 216px,#ff1cd7 232px,#ff15c6 249px,#ff0eb5 267px,#ff07a5 289px,#ff0095 313px,#ff007f)"></i>
<i class="r" style="left:200px;top:257px;width:354px;height:2px;background:linear-gradient(90deg,#0073ff,#016bff 23px,#7d4cff 115px,#bd3cff 160px,#ff2bff 204px,#ff23eb 218px,#ff1bd8 234px,#ff0db7 268px,#ff0098 311px,#ff0082)"></i>
<i class="r" style="left:201px;top:259px;width:351px;height:2px;background:linear-gradient(90deg,#0071ff,#016aff 22px,#7d4aff 115px,#bc3aff 160px,#ff29ff 205px,#ff21eb 219px,#ff1ad9 234px,#ff0cb9 267px,#ff009b 308px,#ff0084)"></i>
<i class="r" style="left:201px;top:261px;width:349px;height:2px;background:linear-gradient(90deg,#006fff,#0068ff 22px,#7c49ff 116px,#bd38ff 162px,#ff28ff 207px,#ff19db 235px,#ff0bba 268px,#ff009e 306px,#ff0087)"></i>
<i class="r" style="left:202px;top:263px;width:345px;height:2px;background:linear-gradient(90deg,#006dff,#0166ff 22px,#7d46ff 117px,#be36ff 163px,#ff26ff 208px,#ff18dc 235px,#ff0bbc 267px,#ff00a2 303px,#ff008a)"></i>
<i class="r" style="left:202px;top:265px;width:343px;height:2px;background:linear-gradient(90deg,#006bff,#0164ff 22px,#7d45ff 118px,#bd35ff 164px,#ff24ff 210px,#ff16dc 237px,#ff0abe 268px,#ff00a4 302px,#ff008c)"></i>
<i class="r" style="left:203px;top:267px;width:340px;height:2px;background:linear-gradient(90deg,#0069ff,#0063ff 21px,#3e53ff 70px,#7d43ff 118px,#bd33ff 165px,#ff22ff 211px,#ff15de 237px,#ff09c0 267px,#ff00a7 299px,#ff008f)"></i>
<i class="r" style="left:203px;top:269px;width:338px;height:2px;background:linear-gradient(90deg,#0068ff,#0161ff 22px,#7d41ff 119px,#bc31ff 166px,#ff20ff 213px,#ff13de 239px,#ff09c1 268px,#ff00ab 297px,#ff0092)"></i>
<i class="r" style="left:204px;top:271px;width:334px;height:2px;background:linear-gradient(90deg,#0066ff,#015fff 21px,#3f50ff 71px,#7e3fff 120px,#bd2fff 167px,#ff1eff 214px,#ff12df 239px,#ff08c3 267px,#ff00ae 294px,#ff0095)"></i>
<i class="r" style="left:204px;top:273px;width:332px;height:2px;background:linear-gradient(90deg,#0064ff,#005eff 21px,#3f4eff 72px,#7e3eff 121px,#be2dff 169px,#ff1dff 216px,#ff11e1 240px,#ff07c6 267px,#ff00b1 292px,#ff0098)"></i>
<i class="r" style="left:204px;top:275px;width:330px;height:2px;background:linear-gradient(90deg,#0063ff,#015cff 22px,#7d3cff 122px,#bd2cff 170px,#ff1bff 218px,#ff10e1 242px,#ff06c7 268px,#ff00b5 290px,#ff009b)"></i>
<i class="r" style="left:205px;top:277px;width:326px;height:2px;background:linear-gradient(90deg,#0061ff,#015bff 21px,#7d3bff 122px,#bd2aff 171px,#ff19ff 219px,#ff0fe2 242px,#ff06c9 267px,#ff00b8 287px,#ff009e)"></i>
<i class="r" style="left:205px;top:279px;width:324px;height:2px;background:linear-gradient(90deg,#005fff,#0059ff 21px,#7d39ff 123px,#be28ff 173px,#ff17ff 221px,#ff0ee4 243px,#ff05cb 267px,#ff00bc 285px,#ff00a1)"></i>
<i class="r" style="left:206px;top:281px;width:321px;height:2px;background:linear-gradient(90deg,#005eff,#0157ff 21px,#3f48ff 73px,#7e37ff 124px,#be27ff 174px,#ff16ff 222px,#ff0ce4 244px,#ff04cd 267px,#ff00c0 282px,#ff00a4)"></i>
<i class="r" style="left:206px;top:283px;width:319px;height:2px;background:linear-gradient(90deg,#005cff,#0156ff 21px,#3f46ff 74px,#7e36ff 125px,#be25ff 175px,#ff14ff 224px,#ff0be5 245px,#ff04cf 267px,#ff00c3 280px,#ff00a7)"></i>
<i class="r" style="left:207px;top:285px;width:315px;height:2px;background:linear-gradient(90deg,#005bff,#0055ff 20px,#3e45ff 73px,#7d34ff 125px,#be23ff 176px,#ff13ff 225px,#ff09e1 250px,#ff00c7 277px,#ff00ab)"></i>
<i class="r" style="left:207px;top:287px;width:313px;height:2px;background:linear-gradient(90deg,#0059ff,#0153ff 21px,#7d33ff 126px,#bd22ff 177px,#ff11ff 227px,#ff08e3 250px,#ff00cb 275px,#ff00ae)"></i>
<i class="r" style="left:208px;top:289px;width:310px;height:2px;background:linear-gradient(90deg,#0058ff,#0152ff 20px,#7d31ff 126px,#be20ff 178px,#ff10ff 228px,#ff07e6 249px,#ff00cf 272px,#ff00b1)"></i>
<i class="r" style="left:208px;top:291px;width:308px;height:2px;background:linear-gradient(90deg,#0056ff,#0050ff 20px,#7d30ff 127px,#bd1fff 179px,#ff0eff 230px,#ff07e8 249px,#ff00d3 270px,#ff00b4)"></i>
<i class="r" style="left:209px;top:293px;width:304px;height:2px;background:linear-gradient(90deg,#0055ff,#014fff 20px,#7e2eff 128px,#be1eff 180px,#ff0dff 231px,#ff06e9 249px,#ff00d7 267px,#ff00b8)"></i>
<i class="r" style="left:209px;top:295px;width:302px;height:2px;background:linear-gradient(90deg,#0053ff,#014eff 20px,#3e3eff 75px,#7d2dff 129px,#be1cff 182px,#ff0bff 233px,#ff00db 265px,#ff00bb)"></i>
<i class="r" style="left:210px;top:297px;width:299px;height:2px;background:linear-gradient(90deg,#0052ff,#004cff 19px,#3f3cff 75px,#7d2cff 129px,#bd1bff 182px,#ff0aff 234px,#ff00df 262px,#ff00bf)"></i>
<i class="r" style="left:210px;top:299px;width:297px;height:2px;background:linear-gradient(90deg,#0051ff,#004bff 19px,#3e3bff 75px,#7d2aff 130px,#be19ff 184px,#ff08ff 236px,#ff00e4 260px,#ff00c2)"></i>
<i class="r" style="left:211px;top:301px;width:293px;height:2px;background:linear-gradient(90deg,#004fff,#004aff 18px,#0449ff 22px,#7f28ff 132px,#be18ff 185px,#ff07ff 237px,#ff00e8 257px,#ff00c7)"></i>
<i class="r" style="left:211px;top:303px;width:291px;height:2px;background:linear-gradient(90deg,#004eff,#0049ff 18px,#0448ff 22px,#7f27ff 133px,#bf16ff 187px,#ff05ff 239px,#ff00eb 256px,#ff00ca)"></i>
<i class="r" style="left:212px;top:305px;width:288px;height:2px;background:linear-gradient(90deg,#004cff,#0047ff 18px,#0945ff 26px,#8125ff 135px,#ff04ff 240px,#ff00f0 253px,#ff00ce)"></i>
<i class="r" style="left:212px;top:307px;width:285px;height:2px;background:linear-gradient(90deg,#004bff,#0046ff 18px,#0744ff 25px,#8124ff 136px,#ff03ff 242px,#ff00f4 251px,#ff00d2)"></i>
<i class="r" style="left:213px;top:309px;width:282px;height:2px;background:linear-gradient(90deg,#004aff,#0045ff 17px,#0c42ff 29px,#8322ff 138px,#ff01ff 243px,#ff00ea 262px,#ff00d6)"></i>
<i class="r" style="left:213px;top:311px;width:280px;height:2px;background:linear-gradient(90deg,#0049ff,#0044ff 18px,#0b41ff 29px,#8321ff 139px,#ff00ff 245px,#ff00da)"></i>
<i class="r" style="left:214px;top:313px;width:277px;height:2px;background:linear-gradient(90deg,#0047ff,#0043ff 17px,#103eff 33px,#861fff 142px,#ff00ff 246px,#ff00de)"></i>
<i class="r" style="left:214px;top:315px;width:274px;height:2px;background:linear-gradient(90deg,#0046ff,#0041ff 18px,#0f3eff 32px,#841eff 142px,#f500ff 240px,#ff00ff 248px,#ff00e3)"></i>
<i class="r" style="left:214px;top:317px;width:272px;height:2px;background:linear-gradient(90deg,#0045ff,#0040ff 18px,#0d3dff 31px,#841dff 143px,#f100ff 238px,#ff00ff 250px,#ff00e7)"></i>
<i class="r" style="left:215px;top:319px;width:269px;height:2px;background:linear-gradient(90deg,#0044ff,#003fff 17px,#123aff 35px,#861bff 145px,#ec00ff 235px,#ff00ff 251px,#ff00eb)"></i>
<i class="r" style="left:215px;top:321px;width:267px;height:2px;background:linear-gradient(90deg,#0043ff,#003eff 18px,#7d1dff 138px,#e700ff 233px,#ff00ff 253px,#ff00f0)"></i>
<i class="r" style="left:216px;top:323px;width:263px;height:2px;background:linear-gradient(90deg,#0041ff,#003dff 17px,#6f1fff 125px,#e300ff 230px,#ff00ff 254px,#ff00f5)"></i>
<i class="r" style="left:216px;top:325px;width:261px;height:2px;background:linear-gradient(90deg,#0040ff,#013cff 18px,#6e1fff 125px,#e000ff 229px,#ff00ff 256px,#ff00fa)"></i>
<i class="r" style="left:217px;top:327px;width:258px;height:2px;background:linear-gradient(90deg,#003fff,#003bff 17px,#1535ff 38px,#771bff 134px,#db00ff 226px,#ff00fe)"></i>
<i class="r" style="left:217px;top:329px;width:256px;height:2px;background:linear-gradient(90deg,#003eff,#003aff 17px,#1534ff 38px,#741bff 132px,#d700ff 224px,#fb00ff)"></i>
<i class="r" style="left:218px;top:331px;width:252px;height:2px;background:linear-gradient(90deg,#003dff,#0039ff 16px,#1533ff 38px,#731aff 131px,#d300ff 221px,#f600ff)"></i>
<i class="r" style="left:218px;top:333px;width:250px;height:2px;background:linear-gradient(90deg,#003cff,#0038ff 16px,#1034ff 33px,#6d1aff 127px,#cf00ff 219px,#f100ff)"></i>
<i class="r" style="left:219px;top:335px;width:247px;height:2px;background:linear-gradient(90deg,#003bff,#0037ff 16px,#1132ff 34px,#6c1aff 126px,#cb00ff 216px,#ed00ff)"></i>
<i class="r" style="left:219px;top:337px;width:245px;height:2px;background:linear-gradient(90deg,#003aff,#0036ff 16px,#0c33ff 29px,#681aff 123px,#c700ff 214px,#e900ff)"></i>
<i class="r" style="left:220px;top:339px;width:241px;height:2px;background:linear-gradient(90deg,#0039ff,#0035ff 15px,#0d31ff 29px,#6619ff 121px,#c300ff 211px,#e300ff)"></i>
<i class="r" style="left:220px;top:341px;width:239px;height:2px;background:linear-gradient(90deg,#0038ff,#0034ff 16px,#0832ff 24px,#6219ff 118px,#bf00ff 209px,#df00ff)"></i>
<i class="r" style="left:221px;top:343px;width:236px;height:2px;background:linear-gradient(90deg,#0037ff,#0033ff 15px,#0930ff 25px,#6119ff 117px,#bb00ff 206px,#db00ff)"></i>
<i class="r" style="left:221px;top:345px;width:233px;height:2px;background:linear-gradient(90deg,#0036ff,#0032ff 15px,#0331ff 19px,#5c19ff 113px,#b800ff 204px,#d600ff)"></i>
<i class="r" style="left:222px;top:347px;width:230px;height:2px;background:linear-gradient(90deg,#0035ff,#0031ff 15px,#0530ff 20px,#5b18ff 112px,#b400ff 201px,#d200ff)"></i>
<i class="r" style="left:222px;top:349px;width:228px;height:2px;background:linear-gradient(90deg,#0034ff,#0130ff 16px,#5818ff 109px,#b000ff 199px,#ce00ff)"></i>
<i class="r" style="left:223px;top:351px;width:225px;height:2px;background:linear-gradient(90deg,#0033ff,#012fff 16px,#5618ff 107px,#ad00ff 196px,#ca00ff)"></i>
<i class="r" style="left:223px;top:353px;width:222px;height:2px;background:linear-gradient(90deg,#0032ff,#002eff 15px,#5417ff 106px,#a900ff 194px,#c600ff)"></i>
<i class="r" style="left:223px;top:355px;width:220px;height:2px;background:linear-gradient(90deg,#0031ff,#012dff 16px,#5217ff 105px,#a600ff 192px,#c200ff)"></i>
<i class="r" style="left:224px;top:357px;width:217px;height:2px;background:linear-gradient(90deg,#0030ff,#012cff 15px,#5017ff 103px,#a300ff 189px,#be00ff)"></i>
<i class="r" style="left:224px;top:359px;width:215px;height:2px;background:linear-gradient(90deg,#002fff,#002cff 15px,#4f16ff 102px,#9f00ff 187px,#bb00ff)"></i>
<i class="r" style="left:225px;top:361px;width:211px;height:2px;background:linear-gradient(90deg,#002eff,#002bff 14px,#4d16ff 100px,#9c00ff 184px,#b600ff)"></i>
<i class="r" style="left:225px;top:363px;width:209px;height:2px;background:linear-gradient(90deg,#002dff,#012aff 15px,#4c15ff 100px,#9900ff 182px,#b300ff)"></i>
<i class="r" style="left:226px;top:365px;width:206px;height:2px;background:linear-gradient(90deg,#002cff,#0029ff 14px,#4a15ff 98px,#9600ff 179px,#af00ff)"></i>
<i class="r" style="left:226px;top:367px;width:204px;height:2px;background:linear-gradient(90deg,#002cff,#0028ff 14px,#4815ff 96px,#9200ff 177px,#ac00ff)"></i>
<i class="r" style="left:227px;top:369px;width:200px;height:2px;background:linear-gradient(90deg,#002bff,#0127ff 14px,#4714ff 95px,#8f00ff 174px,#a800ff)"></i>
<i class="r" style="left:227px;top:371px;width:198px;height:2px;background:linear-gradient(90deg,#002aff,#0027ff 14px,#4614ff 94px,#8d00ff 173px,#a400ff)"></i>
<i class="r" style="left:228px;top:373px;width:195px;height:2px;background:linear-gradient(90deg,#0029ff,#0026ff 13px,#4413ff 92px,#8a00ff 170px,#a100ff)"></i>
<i class="r" style="left:228px;top:375px;width:192px;height:2px;background:linear-gradient(90deg,#0028ff,#0125ff 14px,#4313ff 92px,#8700ff 168px,#9d00ff)"></i>
<i class="r" style="left:229px;top:377px;width:189px;height:2px;background:linear-gradient(90deg,#0027ff,#0024ff 13px,#4212ff 90px,#8400ff 165px,#9a00ff)"></i>
<i class="r" style="left:229px;top:379px;width:187px;height:2px;background:linear-gradient(90deg,#0027ff,#0024ff 13px,#4012ff 89px,#8100ff 163px,#9700ff)"></i>
<i class="r" style="left:230px;top:381px;width:184px;height:2px;background:linear-gradient(90deg,#0026ff,#0123ff 13px,#3f12ff 87px,#7e00ff 160px,#9400ff)"></i>
<i class="r" style="left:230px;top:383px;width:181px;height:2px;background:linear-gradient(90deg,#0025ff,#0022ff 13px,#7c00ff 158px,#9000ff)"></i>
<i class="r" style="left:231px;top:385px;width:178px;height:2px;background:linear-gradient(90deg,#0024ff,#0021ff 12px,#7900ff 155px,#8d00ff)"></i>
<i class="r" style="left:231px;top:387px;width:176px;height:2px;background:linear-gradient(90deg,#0023ff,#0121ff 13px,#7600ff 153px,#8a00ff)"></i>
<i class="r" style="left:232px;top:389px;width:173px;height:2px;background:linear-gradient(90deg,#0023ff,#0020ff 12px,#7300ff 150px,#8700ff)"></i>
<i class="r" style="left:232px;top:391px;width:170px;height:2px;background:linear-gradient(90deg,#0022ff,#001fff 12px,#7100ff 148px,#8400ff)"></i>
<i class="r" style="left:232px;top:393px;width:168px;height:2px;background:linear-gradient(90deg,#0021ff,#011eff 13px,#6e00ff 146px,#8100ff)"></i>
<i class="r" style="left:233px;top:395px;width:165px;height:2px;background:linear-gradient(90deg,#0020ff,#001eff 12px,#6b00ff 143px,#7e00ff)"></i>
<i class="r" style="left:233px;top:397px;width:163px;height:2px;background:linear-gradient(90deg,#0020ff,#001dff 12px,#6900ff 141px,#7b00ff)"></i>
<i class="r" style="left:234px;top:399px;width:159px;height:2px;background:linear-gradient(90deg,#001fff,#011cff 12px,#6600ff 138px,#7800ff)"></i>
<i class="r" style="left:234px;top:401px;width:157px;height:2px;background:linear-gradient(90deg,#001eff,#001cff 12px,#6400ff 136px,#7500ff)"></i>
<i class="r" style="left:235px;top:403px;width:154px;height:2px;background:linear-gradient(90deg,#001eff,#001bff 11px,#6100ff 133px,#7300ff)"></i>
<i class="r" style="left:235px;top:405px;width:151px;height:2px;background:linear-gradient(90deg,#001dff,#011aff 12px,#5f00ff 131px,#6f00ff)"></i>
<i class="r" style="left:236px;top:407px;width:148px;height:2px;background:linear-gradient(90deg,#001cff,#001aff 11px,#5c00ff 128px,#6d00ff)"></i>
<i class="r" style="left:236px;top:409px;width:146px;height:2px;background:linear-gradient(90deg,#001cff,#0019ff 11px,#5a00ff 126px,#6a00ff)"></i>
<i class="r" style="left:237px;top:411px;width:143px;height:2px;background:linear-gradient(90deg,#001bff,#0119ff 11px,#5800ff 123px,#6800ff)"></i>
<i class="r" style="left:237px;top:413px;width:140px;height:2px;background:linear-gradient(90deg,#001aff,#0018ff 11px,#5500ff 121px,#6400ff)"></i>
<i class="r" style="left:238px;top:415px;width:137px;height:2px;background:linear-gradient(90deg,#0019ff,#0017ff 10px,#5300ff 118px,#6200ff)"></i>
<i class="r" style="left:238px;top:417px;width:135px;height:2px;background:linear-gradient(90deg,#0019ff,#0117ff 11px,#5100ff 117px,#6000ff)"></i>
<i class="r" style="left:239px;top:419px;width:132px;height:2px;background:linear-gradient(90deg,#0018ff,#0016ff 10px,#4f00ff 114px,#5d00ff)"></i>
<i class="r" style="left:239px;top:421px;width:129px;height:2px;background:linear-gradient(90deg,#0018ff,#0016ff 10px,#4d00ff 112px,#5a00ff)"></i>
<i class="r" style="left:240px;top:423px;width:126px;height:2px;background:linear-gradient(90deg,#0017ff,#0015ff 9px,#4b00ff 109px,#5800ff)"></i>
<i class="r" style="left:240px;top:425px;width:124px;height:2px;background:linear-gradient(90deg,#0016ff,#0014ff 10px,#4900ff 107px,#5600ff)"></i>
<i class="r" style="left:241px;top:427px;width:121px;height:2px;background:linear-gradient(90deg,#0016ff,#0014ff 9px,#4600ff 104px,#5300ff)"></i>
<i class="r" style="left:241px;top:429px;width:118px;height:2px;background:linear-gradient(90deg,#0015ff,#0013ff 9px,#4400ff 102px,#5000ff)"></i>
<i class="r" style="left:242px;top:431px;width:115px;height:2px;background:linear-gradient(90deg,#0014ff,#0013ff 9px,#4200ff 99px,#4e00ff)"></i>
<i class="r" style="left:242px;top:433px;width:113px;height:2px;background:linear-gradient(90deg,#0014ff,#0012ff 9px,#4000ff 97px,#4c00ff)"></i>
<i class="r" style="left:242px;top:435px;width:111px;height:2px;background:linear-gradient(90deg,#0013ff,#0012ff 9px,#3e00ff 95px,#4a00ff)"></i>
<i class="r" style="left:243px;top:437px;width:107px;height:2px;background:linear-gradient(90deg,#0013ff,#0011ff 9px,#3c00ff 92px,#4700ff)"></i>
<i class="r" style="left:243px;top:439px;width:105px;height:2px;background:linear-gradient(90deg,#0012ff,#0010ff 9px,#3a00ff 90px,#4500ff)"></i>
<i class="r" style="left:244px;top:441px;width:102px;height:2px;background:linear-gradient(90deg,#0012ff,#0010ff 8px,#3800ff 87px,#4300ff)"></i>
<i class="r" style="left:244px;top:443px;width:99px;height:2px;background:linear-gradient(90deg,#0011ff,#010fff 9px,#3600ff 85px,#4000ff)"></i>
<i class="r" style="left:245px;top:445px;width:96px;height:2px;background:linear-gradient(90deg,#0010ff,#000fff 8px,#3400ff 82px,#3e00ff)"></i>
<i class="r" style="left:245px;top:447px;width:94px;height:2px;background:linear-gradient(90deg,#0010ff,#000eff 8px,#3200ff 80px,#3c00ff)"></i>
<i class="r" style="left:246px;top:449px;width:91px;height:2px;background:linear-gradient(90deg,#000fff,#010eff 8px,#3000ff 77px,#3a00ff)"></i>
<i class="r" style="left:246px;top:451px;width:88px;height:2px;background:linear-gradient(90deg,#000fff,#000dff 8px,#2f00ff 75px,#3800ff)"></i>
<i class="r" style="left:247px;top:453px;width:85px;height:2px;background:linear-gradient(90deg,#000eff,#000dff 7px,#2d00ff 72px,#3600ff)"></i>
<i class="r" style="left:247px;top:455px;width:83px;height:2px;background:linear-gradient(90deg,#000eff,#010cff 8px,#2b00ff 70px,#3400ff)"></i>
<i class="r" style="left:248px;top:457px;width:80px;height:2px;background:linear-gradient(90deg,#000dff,#000cff 7px,#2900ff 67px,#3200ff)"></i>
<i class="r" style="left:248px;top:459px;width:77px;height:2px;background:linear-gradient(90deg,#000dff,#000bff 7px,#2700ff 65px,#3000ff)"></i>
<i class="r" style="left:249px;top:461px;width:74px;height:2px;background:linear-gradient(90deg,#000cff,#010bff 7px,#2600ff 62px,#2e00ff)"></i>
<i class="r" style="left:249px;top:463px;width:72px;height:2px;background:linear-gradient(90deg,#000cff,#000aff 7px,#2400ff 61px,#2c00ff)"></i>
<i class="r" style="left:250px;top:465px;width:69px;height:2px;background:linear-gradient(90deg,#000bff,#000aff 6px,#2300ff 58px,#2a00ff)"></i>
<i class="r" style="left:250px;top:467px;width:66px;height:2px;background:linear-gradient(90deg,#000bff,#0109ff 7px,#2100ff 56px,#2800ff)"></i>
<i class="r" style="left:251px;top:469px;width:63px;height:2px;background:linear-gradient(90deg,#000aff,#0009ff 6px,#1f00ff 53px,#2600ff)"></i>
<i class="r" style="left:251px;top:471px;width:61px;height:2px;background:linear-gradient(90deg,#000aff,#0008ff 6px,#1e00ff 51px,#2400ff)"></i>
<i class="r" style="left:251px;top:473px;width:58px;height:2px;background:linear-gradient(90deg,#0009ff,#0108ff 7px,#1c00ff 49px,#2200ff)"></i>
<i class="r" style="left:252px;top:475px;width:55px;height:2px;background:linear-gradient(90deg,#0009ff,#0007ff 6px,#1a00ff 46px,#2000ff)"></i>
<i class="r" style="left:252px;top:477px;width:53px;height:2px;background:linear-gradient(90deg,#0008ff,#0007ff 6px,#1900ff 44px,#1f00ff)"></i>
<i class="r" style="left:253px;top:479px;width:50px;height:2px;background:linear-gradient(90deg,#0008ff,#0007ff 5px,#1d00ff)"></i>
<i class="r" style="left:253px;top:481px;width:47px;height:2px;background:linear-gradient(90deg,#0007ff,#0006ff 6px,#1b00ff)"></i>
<i class="r" style="left:254px;top:483px;width:44px;height:2px;background:linear-gradient(90deg,#0007ff,#0006ff 5px,#1900ff)"></i>
<i class="r" style="left:254px;top:485px;width:42px;height:2px;background:linear-gradient(90deg,#0006ff,#0005ff 5px,#1700ff)"></i>
<i class="r" style="left:255px;top:487px;width:39px;height:2px;background:linear-gradient(90deg,#0006ff,#0005ff 5px,#1600ff)"></i>
<i class="r" style="left:255px;top:489px;width:36px;height:2px;background:linear-gradient(90deg,#0005ff,#0004ff 5px,#1400ff)"></i>
<i class="r" style="left:256px;top:491px;width:33px;height:2px;background:linear-gradient(90deg,#0005ff,#0004ff 4px,#1200ff)"></i>
<i class="r" style="left:256px;top:493px;width:31px;height:2px;background:linear-gradient(90deg,#0004ff,#0003ff 5px,#1100ff)"></i>
<i class="r" style="left:257px;top:495px;width:28px;height:2px;background:linear-gradient(90deg,#0004ff,#0003ff 4px,#0f00ff)"></i>
<i class="r" style="left:257px;top:497px;width:25px;height:2px;background:linear-gradient(90deg,#0003ff,#0003ff 4px,#0d00ff)"></i>
<i class="r" style="left:258px;top:499px;width:22px;height:2px;background:linear-gradient(90deg,#0003ff,#0002ff 4px,#0b00ff)"></i>
<i class="r" style="left:258px;top:501px;width:20px;height:2px;background:linear-gradient(90deg,#0003ff,#0002ff 4px,#0a00ff)"></i>
<i class="r" style="left:259px;top:503px;width:16px;height:2px;background:linear-gradient(90deg,#0002ff,#0002ff 3px,#0800ff)"></i>
<i class="r" style="left:259px;top:505px;width:14px;height:2px;background:linear-gradient(90deg,#0002ff,#0001ff 4px,#0600ff)"></i>
<i class="r" style="left:260px;top:507px;width:11px;height:2px;background:linear-gradient(90deg,#0001ff,#0500ff)"></i>
<i class="r" style="left:260px;top:509px;width:9px;height:2px;background:linear-gradient(90deg,#0001ff,#0400ff)"></i>
<i class="r" style="left:260px;top:511px;width:6px;height:2px;background:linear-gradient(90deg,#0000ff,#0200ff)"></i>
</div></div>
<svg style="left:0;top:0" width="2560" height="1552" viewBox="0 0 2560 1552"><clipPath id="pc"><rect x="1641" y="275" width="903" height="694"/></clipPath><g clip-path="url(#pc)"><circle cx="1640" cy="970" r="5.6" fill="#000"/></g><g fill="none" stroke="#fff" stroke-width="2"><rect x="1779.0" y="289.4" width="19" height="19.2"/><rect x="1939.0" y="305.0" width="19" height="19.2"/><rect x="1906.1" y="325.8" width="19" height="19.2"/><rect x="1854.1" y="339.4" width="19" height="19.2"/><rect x="1902.2" y="358.9" width="19" height="19.2"/><rect x="1975.5" y="323.7" width="19" height="19.2"/><rect x="2014.2" y="331.9" width="19" height="19.2"/><rect x="2006.0" y="381.8" width="19" height="19.2"/><rect x="1981.1" y="389.4" width="19" height="19.2"/><rect x="1864.1" y="408.8" width="19" height="19.2"/><rect x="1812.1" y="433.9" width="19" height="19.2"/><rect x="2081.0" y="339.4" width="19" height="19.2"/><rect x="2102.6" y="398.9" width="19" height="19.2"/><rect x="2206.4" y="377.9" width="19" height="19.2"/><rect x="1835.0" y="481.9" width="19" height="19.2"/><rect x="1893.0" y="471.9" width="19" height="19.2"/><rect x="1921.4" y="477.9" width="19" height="19.2"/><rect x="1972.1" y="508.9" width="19" height="19.2"/><rect x="1895.0" y="550.9" width="19" height="19.2"/><rect x="2066.0" y="468.4" width="19" height="19.2"/><rect x="2120.0" y="577.8" width="19" height="19.2"/><rect x="1898.6" y="627.8" width="19" height="19.2"/><rect x="1895.1" y="776.4" width="19" height="19.2"/><rect x="2378.2" y="349.0" width="19" height="19.2"/></g><g stroke="#000" stroke-width="1.6"><circle cx="1767.6" cy="297.0" r="5.5" fill="#00ff00"/><circle cx="1944.5" cy="316.4" r="5.5" fill="#ffff00"/><circle cx="1908.1" cy="326.0" r="5.5" fill="#a3be52"/><circle cx="1819.6" cy="335.4" r="5.5" fill="#5c9452"/><circle cx="1902.2" cy="358.5" r="5.5" fill="#576c43"/><circle cx="2008.2" cy="324.0" r="5.5" fill="#ecca4d"/><circle cx="2012.2" cy="393.5" r="5.5" fill="#c29682"/><circle cx="1842.5" cy="414.4" r="5.5" fill="#7cc0ad"/><circle cx="1804.0" cy="441.4" r="5.5" fill="#00ffff"/><circle cx="2042.5" cy="381.3" r="5.5" fill="#735244"/><circle cx="2067.5" cy="333.3" r="5.5" fill="#dfa547"/><circle cx="2139.1" cy="341.5" r="5.5" fill="#d67e2c"/><circle cx="2175.6" cy="403.0" r="5.5" fill="#b85c63"/><circle cx="2281.7" cy="381.4" r="5.5" fill="#a3393d"/><circle cx="1819.5" cy="495.4" r="5.5" fill="#2684a7"/><circle cx="1890.5" cy="487.5" r="5.5" fill="#627a9d"/><circle cx="1937.1" cy="495.4" r="5.5" fill="#8580b1"/><circle cx="1983.1" cy="541.4" r="5.5" fill="#5a3e6c"/><circle cx="1898.5" cy="578.1" r="5.5" fill="#505ba6"/><circle cx="2121.5" cy="474.1" r="5.5" fill="#af5b93"/><circle cx="2148.5" cy="585.4" r="5.5" fill="#ff00ff"/><circle cx="1902.1" cy="668.6" r="5.5" fill="#383d94"/><circle cx="1904.1" cy="830.0" r="5.5" fill="#0000ff"/><circle cx="2375.7" cy="358.4" r="5.5" fill="#ff0000"/><circle cx="1936.8" cy="423.4" r="5.5" fill="#e6e6e6"/><circle cx="1932.8" cy="424.1" r="5.5" fill="#fff"/><circle cx="1939.3" cy="427.2" r="5.5" fill="#d1d1d1"/><circle cx="1940.8" cy="426" r="5.5" fill="#bababa"/><circle cx="1940.5" cy="424.1" r="5.5" fill="#9e9e9e"/></g><rect x="1927" y="416.2" width="19" height="19.5" fill="none" stroke="#000" stroke-width="2"/></svg>
<div class="b" style="left:2251.5px;top:722.0px;width:288.5px;height:192.5px;background:#333;"></div>
<div class="b" style="left:2255.0px;top:726.0px;width:281.0px;height:185.0px;background:#222;box-sizing:border-box;border:2px solid #9a9a9a;"></div>
<div class="b" style="left:2257px;top:728px;width:277px;height:181px;overflow:hidden"><div class="b" style="left:0;top:0;width:100%;height:100%;clip-path:polygon(-753.2px -557.0px,-742.6px -550.9px,-732.0px -544.7px,-721.4px -538.6px,-710.8px -532.4px,-700.2px -526.2px,-689.6px -519.9px,-679.1px -513.7px,-668.5px -507.5px,-657.9px -501.2px,-647.4px -494.9px,-636.8px -488.6px,-626.3px -482.3px,-615.7px -476.0px,-605.2px -469.6px,-594.6px -463.3px,-584.1px -456.9px,-573.5px -450.5px,-563.0px -444.1px,-552.4px -437.7px,-541.9px -431.3px,-531.3px -424.9px,-520.8px -418.4px,-510.2px -412.0px,-499.7px -405.5px,-489.1px -399.0px,-478.5px -392.5px,-468.0px -386.0px,-457.4px -379.5px,-446.9px -373.0px,-436.3px -366.4px,-425.7px -359.9px,-415.1px -353.3px,-404.5px -346.7px,-394.0px -340.2px,-383.4px -333.6px,-372.8px -327.0px,-362.2px -320.3px,-351.6px -313.7px,-341.0px -307.1px,-330.4px -300.5px,-319.8px -293.8px,-309.2px -287.2px,-298.6px -280.5px,-288.0px -273.8px,-277.4px -267.1px,-266.9px -260.5px,-256.3px -253.8px,-245.7px -247.1px,-235.1px -240.4px,-224.6px -233.7px,-214.0px -227.0px,-203.4px -220.2px,-192.9px -213.5px,-182.3px -206.8px,-171.8px -200.1px,-161.3px -193.3px,-150.7px -186.6px,-140.2px -179.8px,-129.7px -173.1px,-119.2px -166.3px,-108.6px -159.6px,-98.1px -152.8px,-87.6px -146.1px,-77.1px -139.3px,-66.6px -132.6px,-56.1px -125.8px,-45.5px -119.1px,-35.0px -112.3px,-24.5px -105.6px,-14.0px -98.8px,-3.5px -92.0px,7.0px -85.3px,17.5px -78.5px,28.0px -71.8px,38.5px -65.0px,49.0px -58.3px,59.5px -51.5px,70.0px -44.8px,80.5px -38.0px,90.9px -31.3px,101.4px -24.5px,111.9px -17.8px,122.3px -11.1px,132.7px -4.3px,143.2px 2.4px,153.6px 9.1px,164.0px 15.9px,174.4px 22.6px,184.8px 29.3px,195.1px 36.0px,205.5px 42.7px,215.8px 49.4px,226.1px 56.1px,236.5px 62.8px,246.8px 69.5px,257.0px 76.2px,267.3px 82.9px,277.6px 89.5px,287.8px 96.2px,298.1px 102.8px,308.3px 109.5px,318.5px 116.1px,328.7px 122.8px,338.8px 129.4px,349.0px 136.0px,359.1px 142.6px,369.3px 149.2px,379.4px 155.8px,389.5px 162.4px,399.6px 168.9px,409.6px 175.5px,419.7px 182.0px,429.7px 188.6px,439.7px 195.1px,449.7px 201.6px,459.7px 208.1px,469.7px 214.6px,479.6px 221.1px,489.6px 227.5px,499.5px 234.0px,509.3px 240.4px,519.2px 246.9px,529.0px 253.3px,538.9px 259.7px,548.7px 266.1px,558.4px 272.4px,568.2px 278.8px,577.9px 285.2px,587.7px 291.5px,597.3px 297.8px,607.0px 304.1px,616.6px 310.4px,626.3px 316.7px,635.9px 322.9px,645.4px 329.2px,655.0px 335.4px,664.5px 341.6px,673.9px 347.7px,683.4px 353.9px,692.8px 360.0px,702.2px 366.1px,711.6px 372.2px,720.9px 378.3px,730.3px 384.4px,739.5px 390.4px,748.8px 396.4px,758.0px 402.4px,767.2px 408.4px,776.4px 414.3px,785.5px 420.2px,794.6px 426.1px,803.7px 432.0px,812.7px 437.9px,821.7px 443.7px,830.7px 449.5px,839.6px 455.3px,848.5px 461.1px,857.3px 466.8px,866.2px 472.5px,874.9px 478.2px,883.7px 483.9px,892.4px 489.6px,901.0px 495.2px,909.7px 500.9px,918.3px 506.5px,926.8px 512.0px,935.3px 517.6px,943.8px 523.1px,952.2px 528.6px,960.5px 534.1px,968.8px 539.5px,977.1px 544.9px,985.3px 550.2px,993.4px 555.6px,1001.5px 560.9px,1009.5px 566.1px,1017.5px 571.3px,1025.4px 576.5px,1033.2px 581.6px,1041.0px 586.7px,1041.0px 1872.0px,-857.0px 1872.0px,-857.0px -557.0px)">
<i class="r" style="left:0;top:0px;width:277px;background:linear-gradient(90deg,#6e9c00,#9b9c00 220px,#9c9000)"></i>
<i class="r" style="left:0;top:3px;width:277px;background:linear-gradient(90deg,#6f9c00,#9c9c00 218px,#9c8f00)"></i>
<i class="r" style="left:0;top:6px;width:277px;background:linear-gradient(90deg,#6f9c00,#9c9c00 215px,#9c8f00)"></i>
<i class="r" style="left:0;top:9px;width:277px;background:linear-gradient(90deg,#709c00,#9b9c00 212px,#9c8e00)"></i>
<i class="r" style="left:0;top:12px;width:277px;background:linear-gradient(90deg,#709c00,#9b9c00 209px,#9c8e00)"></i>
<i class="r" style="left:0;top:15px;width:277px;background:linear-gradient(90deg,#719c00,#9c9b00 207px,#9c8d00)"></i>
<i class="r" style="left:0;top:18px;width:277px;background:linear-gradient(90deg,#719c00,#9c9c00 204px,#9c8d00)"></i>
<i class="r" style="left:0;top:21px;width:277px;background:linear-gradient(90deg,#729c00,#9c9c00 201px,#9c8c00)"></i>
<i class="r" style="left:0;top:24px;width:277px;background:linear-gradient(90deg,#729c00,#9b9c00 198px,#9c8c00)"></i>
<i class="r" style="left:0;top:27px;width:277px;background:linear-gradient(90deg,#739c00,#9b9c00 195px,#9c8b00)"></i>
<i class="r" style="left:0;top:30px;width:277px;background:linear-gradient(90deg,#739c00,#9c9c00 193px,#9c8b00)"></i>
<i class="r" style="left:0;top:33px;width:277px;background:linear-gradient(90deg,#749c00,#9c9c00 190px,#9c8a00)"></i>
<i class="r" style="left:0;top:36px;width:277px;background:linear-gradient(90deg,#749c00,#9b9c00 187px,#9c8900)"></i>
<i class="r" style="left:0;top:39px;width:277px;background:linear-gradient(90deg,#759c00,#9b9c00 184px,#9c8900)"></i>
<i class="r" style="left:0;top:42px;width:277px;background:linear-gradient(90deg,#759c00,#9c9b00 182px,#9c8800)"></i>
<i class="r" style="left:0;top:45px;width:277px;background:linear-gradient(90deg,#769c00,#9c9c00 179px,#9c8800)"></i>
<i class="r" style="left:0;top:48px;width:277px;background:linear-gradient(90deg,#769c00,#9c9c00 176px,#9c8700)"></i>
<i class="r" style="left:0;top:51px;width:277px;background:linear-gradient(90deg,#779c00,#9b9c00 173px,#9c8700)"></i>
<i class="r" style="left:0;top:54px;width:277px;background:linear-gradient(90deg,#779c00,#9c9b00 171px,#9c8600)"></i>
<i class="r" style="left:0;top:57px;width:277px;background:linear-gradient(90deg,#789c00,#9c9c00 168px,#9c8600)"></i>
<i class="r" style="left:0;top:60px;width:277px;background:linear-gradient(90deg,#789c00,#9c9c00 165px,#9c8500)"></i>
<i class="r" style="left:0;top:63px;width:277px;background:linear-gradient(90deg,#799c00,#9b9c00 162px,#9c8500)"></i>
<i class="r" style="left:0;top:66px;width:277px;background:linear-gradient(90deg,#799c00,#9b9c00 159px,#9c8400)"></i>
<i class="r" style="left:0;top:69px;width:277px;background:linear-gradient(90deg,#7a9c00,#9c9b00 157px,#9c8400)"></i>
<i class="r" style="left:0;top:72px;width:277px;background:linear-gradient(90deg,#7a9c00,#9c9c00 154px,#9c8300)"></i>
<i class="r" style="left:0;top:75px;width:277px;background:linear-gradient(90deg,#7b9c00,#9c9c00 151px,#9c8300)"></i>
<i class="r" style="left:0;top:78px;width:277px;background:linear-gradient(90deg,#7b9c00,#9b9c00 148px,#9c8200)"></i>
<i class="r" style="left:0;top:81px;width:277px;background:linear-gradient(90deg,#7c9c00,#9c9b00 146px,#9c8200)"></i>
<i class="r" style="left:0;top:84px;width:277px;background:linear-gradient(90deg,#7c9c00,#9c9c00 143px,#9c8100)"></i>
<i class="r" style="left:0;top:87px;width:277px;background:linear-gradient(90deg,#7d9c00,#9c9c00 140px,#9c8000)"></i>
<i class="r" style="left:0;top:90px;width:277px;background:linear-gradient(90deg,#7d9c00,#9b9c00 137px,#9c8000)"></i>
<i class="r" style="left:0;top:93px;width:277px;background:linear-gradient(90deg,#7e9c00,#9c9b00 135px,#9c7f00)"></i>
<i class="r" style="left:0;top:96px;width:277px;background:linear-gradient(90deg,#7e9c00,#9c9b00 132px,#9c7f00)"></i>
<i class="r" style="left:0;top:99px;width:277px;background:linear-gradient(90deg,#7f9c00,#9c9c00 129px,#9c7e00)"></i>
<i class="r" style="left:0;top:102px;width:277px;background:linear-gradient(90deg,#809c00,#9b9c00 126px,#9c7e00)"></i>
<i class="r" style="left:0;top:105px;width:277px;background:linear-gradient(90deg,#809c00,#9c9b00 124px,#9c7d00)"></i>
<i class="r" style="left:0;top:108px;width:277px;background:linear-gradient(90deg,#819c00,#9c9b00 121px,#9c7d00)"></i>
<i class="r" style="left:0;top:111px;width:277px;background:linear-gradient(90deg,#819c00,#9c9c00 118px,#9c8b00 194px,#9c7c00)"></i>
<i class="r" style="left:0;top:114px;width:277px;background:linear-gradient(90deg,#829c00,#9c9c00 115px,#9c8b00 193px,#9c7c00)"></i>
<i class="r" style="left:0;top:117px;width:277px;background:linear-gradient(90deg,#829c00,#9b9c00 112px,#9c8b00 192px,#9c7b00)"></i>
<i class="r" style="left:0;top:120px;width:277px;background:linear-gradient(90deg,#839c00,#9c9b00 110px,#9c8a00 190px,#9c7b00)"></i>
<i class="r" style="left:0;top:123px;width:277px;background:linear-gradient(90deg,#839c00,#9c9c00 107px,#9c8a00 188px,#9c7a00)"></i>
<i class="r" style="left:0;top:126px;width:277px;background:linear-gradient(90deg,#849c00,#9c9c00 104px,#9c8a00 187px,#9c7a00)"></i>
<i class="r" style="left:0;top:129px;width:277px;background:linear-gradient(90deg,#859c00,#9b9c00 101px,#9c8900 186px,#9c7900)"></i>
<i class="r" style="left:0;top:132px;width:277px;background:linear-gradient(90deg,#859c00,#9c9b00 99px,#9c8900 184px,#9c7900)"></i>
<i class="r" style="left:0;top:135px;width:277px;background:linear-gradient(90deg,#869c00,#9c9b00 96px,#9c8900 182px,#9c7800)"></i>
<i class="r" style="left:0;top:138px;width:277px;background:linear-gradient(90deg,#869c00,#9c9c00 93px,#9c8900 180px,#9c7800)"></i>
<i class="r" style="left:0;top:141px;width:277px;background:linear-gradient(90deg,#879c00,#9c9c00 90px,#9c8900 179px,#9c7700)"></i>
<i class="r" style="left:0;top:144px;width:277px;background:linear-gradient(90deg,#879c00,#9c9b00 88px,#9c8800 178px,#9c7700)"></i>
<i class="r" style="left:0;top:147px;width:277px;background:linear-gradient(90deg,#889c00,#9c9b00 85px,#9c8800 176px,#9c7600)"></i>
<i class="r" style="left:0;top:150px;width:277px;background:linear-gradient(90deg,#899c00,#9c9c00 82px,#9c8800 174px,#9c7600)"></i>
<i class="r" style="left:0;top:153px;width:277px;background:linear-gradient(90deg,#899c00,#9c9c00 79px,#9c8700 173px,#9c7500)"></i>
<i class="r" style="left:0;top:156px;width:277px;background:linear-gradient(90deg,#8a9c00,#9b9c00 76px,#9c8700 172px,#9c7500)"></i>
<i class="r" style="left:0;top:159px;width:277px;background:linear-gradient(90deg,#8a9c00,#9c9b00 74px,#9c8700 170px,#9c7500)"></i>
<i class="r" style="left:0;top:162px;width:277px;background:linear-gradient(90deg,#8b9c00,#9c9b00 71px,#9c8700 168px,#9c7400)"></i>
<i class="r" style="left:0;top:165px;width:277px;background:linear-gradient(90deg,#8c9c00,#9c9c00 68px,#9c8600 167px,#9c7400)"></i>
<i class="r" style="left:0;top:168px;width:277px;background:linear-gradient(90deg,#8c9c00,#9c9c00 65px,#9c8600 165px,#9c7300)"></i>
<i class="r" style="left:0;top:171px;width:277px;background:linear-gradient(90deg,#8d9c00,#9c9b00 63px,#9c8600 164px,#9c7300)"></i>
<i class="r" style="left:0;top:174px;width:277px;background:linear-gradient(90deg,#8d9c00,#9c9b00 60px,#9c8600 162px,#9c7200)"></i>
<i class="r" style="left:0;top:177px;width:277px;background:linear-gradient(90deg,#8e9c00,#9c9c00 57px,#9c8500 160px,#9c7200)"></i>
<i class="r" style="left:0;top:180px;width:277px;background:linear-gradient(90deg,#8f9c00,#9c9c00 54px,#9c8500 159px,#9c7100)"></i>
</div></div>
<div class="b" style="left:2257px;top:728px;width:277px;height:181px;overflow:hidden"><div class="b" style="left:0;top:0;width:100%;height:100%;clip-path:polygon(1480.1px 871.8px,-818.7px -468.3px,-1456.1px 1812.7px)">
<i class="r" style="left:0;top:0px;width:277px;background:linear-gradient(90deg,#b5ff00,#ffff00 220px,#ffec00)"></i>
<i class="r" style="left:0;top:3px;width:277px;background:linear-gradient(90deg,#b6ff00,#ffff00 218px,#ffeb00)"></i>
<i class="r" style="left:0;top:6px;width:277px;background:linear-gradient(90deg,#b7ff00,#ffff00 215px,#ffea00)"></i>
<i class="r" style="left:0;top:9px;width:277px;background:linear-gradient(90deg,#b7ff00,#ffff00 212px,#ffe900)"></i>
<i class="r" style="left:0;top:12px;width:277px;background:linear-gradient(90deg,#b8ff00,#ffff00 209px,#ffe800)"></i>
<i class="r" style="left:0;top:15px;width:277px;background:linear-gradient(90deg,#b9ff00,#ffff00 207px,#ffe800)"></i>
<i class="r" style="left:0;top:18px;width:277px;background:linear-gradient(90deg,#baff00,#ffff00 204px,#ffe700)"></i>
<i class="r" style="left:0;top:21px;width:277px;background:linear-gradient(90deg,#baff00,#ffff00 201px,#ffe600)"></i>
<i class="r" style="left:0;top:24px;width:277px;background:linear-gradient(90deg,#bbff00,#ffff00 198px,#ffe500)"></i>
<i class="r" style="left:0;top:27px;width:277px;background:linear-gradient(90deg,#bcff00,#ffff00 195px,#ffe400)"></i>
<i class="r" style="left:0;top:30px;width:277px;background:linear-gradient(90deg,#bdff00,#ffff00 193px,#ffe300)"></i>
<i class="r" style="left:0;top:33px;width:277px;background:linear-gradient(90deg,#beff00,#ffff00 190px,#ffe200)"></i>
<i class="r" style="left:0;top:36px;width:277px;background:linear-gradient(90deg,#beff00,#ffff00 187px,#ffe100)"></i>
<i class="r" style="left:0;top:39px;width:277px;background:linear-gradient(90deg,#bfff00,#ffff00 184px,#ffe000)"></i>
<i class="r" style="left:0;top:42px;width:277px;background:linear-gradient(90deg,#c0ff00,#ffff00 182px,#ffe000)"></i>
<i class="r" style="left:0;top:45px;width:277px;background:linear-gradient(90deg,#c1ff00,#ffff00 179px,#ffdf00)"></i>
<i class="r" style="left:0;top:48px;width:277px;background:linear-gradient(90deg,#c2ff00,#ffff00 176px,#ffde00)"></i>
<i class="r" style="left:0;top:51px;width:277px;background:linear-gradient(90deg,#c2ff00,#ffff00 173px,#ffdd00)"></i>
<i class="r" style="left:0;top:54px;width:277px;background:linear-gradient(90deg,#c3ff00,#ffff00 171px,#ffdc00)"></i>
<i class="r" style="left:0;top:57px;width:277px;background:linear-gradient(90deg,#c4ff00,#ffff00 168px,#ffdb00)"></i>
<i class="r" style="left:0;top:60px;width:277px;background:linear-gradient(90deg,#c5ff00,#ffff00 165px,#ffda00)"></i>
<i class="r" style="left:0;top:63px;width:277px;background:linear-gradient(90deg,#c6ff00,#ffff00 162px,#ffd900)"></i>
<i class="r" style="left:0;top:66px;width:277px;background:linear-gradient(90deg,#c7ff00,#ffff00 159px,#ffd900)"></i>
<i class="r" style="left:0;top:69px;width:277px;background:linear-gradient(90deg,#c7ff00,#ffff00 157px,#ffd800)"></i>
<i class="r" style="left:0;top:72px;width:277px;background:linear-gradient(90deg,#c8ff00,#ffff00 154px,#ffea00 213px,#ffd700)"></i>
<i class="r" style="left:0;top:75px;width:277px;background:linear-gradient(90deg,#c9ff00,#ffff00 151px,#ffe900 213px,#ffd600)"></i>
<i class="r" style="left:0;top:78px;width:277px;background:linear-gradient(90deg,#caff00,#ffff00 148px,#ffe900 212px,#ffd500)"></i>
<i class="r" style="left:0;top:81px;width:277px;background:linear-gradient(90deg,#cbff00,#ffff00 146px,#ffe900 209px,#ffd400)"></i>
<i class="r" style="left:0;top:84px;width:277px;background:linear-gradient(90deg,#ccff00,#ffff00 143px,#ffe800 208px,#ffd300)"></i>
<i class="r" style="left:0;top:87px;width:277px;background:linear-gradient(90deg,#cdff00,#ffff00 140px,#ffe800 206px,#ffd300)"></i>
<i class="r" style="left:0;top:90px;width:277px;background:linear-gradient(90deg,#cdff00,#ffff00 137px,#ffe700 206px,#ffd200)"></i>
<i class="r" style="left:0;top:93px;width:277px;background:linear-gradient(90deg,#ceff00,#ffff00 135px,#ffe700 203px,#ffd100)"></i>
<i class="r" style="left:0;top:96px;width:277px;background:linear-gradient(90deg,#cfff00,#ffff00 132px,#ffe700 202px,#ffd000)"></i>
<i class="r" style="left:0;top:99px;width:277px;background:linear-gradient(90deg,#d0ff00,#ffff00 129px,#ffe600 200px,#ffcf00)"></i>
<i class="r" style="left:0;top:102px;width:277px;background:linear-gradient(90deg,#d1ff00,#ffff00 126px,#ffe600 199px,#ffce00)"></i>
<i class="r" style="left:0;top:105px;width:277px;background:linear-gradient(90deg,#d2ff00,#ffff00 124px,#ffe500 197px,#ffce00)"></i>
<i class="r" style="left:0;top:108px;width:277px;background:linear-gradient(90deg,#d3ff00,#ffff00 121px,#ffe500 196px,#ffcd00)"></i>
<i class="r" style="left:0;top:111px;width:277px;background:linear-gradient(90deg,#d4ff00,#ffff00 118px,#ffe400 194px,#ffcc00)"></i>
<i class="r" style="left:0;top:114px;width:277px;background:linear-gradient(90deg,#d5ff00,#ffff00 115px,#ffe400 193px,#ffcb00)"></i>
<i class="r" style="left:0;top:117px;width:277px;background:linear-gradient(90deg,#d6ff00,#ffff00 112px,#ffe300 192px,#ffca00)"></i>
<i class="r" style="left:0;top:120px;width:277px;background:linear-gradient(90deg,#d6ff00,#ffff00 110px,#ffe300 190px,#ffca00)"></i>
<i class="r" style="left:0;top:123px;width:277px;background:linear-gradient(90deg,#d7ff00,#ffff00 107px,#ffe300 188px,#ffc900)"></i>
<i class="r" style="left:0;top:126px;width:277px;background:linear-gradient(90deg,#d8ff00,#ffff00 104px,#ffe200 187px,#ffc800)"></i>
<i class="r" style="left:0;top:129px;width:277px;background:linear-gradient(90deg,#d9ff00,#ffff00 101px,#ffe100 186px,#ffc700)"></i>
<i class="r" style="left:0;top:132px;width:277px;background:linear-gradient(90deg,#daff00,#ffff00 99px,#ffe100 184px,#ffc600)"></i>
<i class="r" style="left:0;top:135px;width:277px;background:linear-gradient(90deg,#dbff00,#ffff00 96px,#ffe100 182px,#ffc500)"></i>
<i class="r" style="left:0;top:138px;width:277px;background:linear-gradient(90deg,#dcff00,#ffff00 93px,#ffe000 180px,#ffc500)"></i>
<i class="r" style="left:0;top:141px;width:277px;background:linear-gradient(90deg,#ddff00,#ffff00 90px,#ffe000 179px,#ffc400)"></i>
<i class="r" style="left:0;top:144px;width:277px;background:linear-gradient(90deg,#deff00,#ffff00 88px,#ffdf00 178px,#ffc300)"></i>
<i class="r" style="left:0;top:147px;width:277px;background:linear-gradient(90deg,#dfff00,#ffff00 85px,#ffdf00 176px,#ffc200)"></i>
<i class="r" style="left:0;top:150px;width:277px;background:linear-gradient(90deg,#e0ff00,#ffff00 82px,#ffdf00 174px,#ffc100)"></i>
<i class="r" style="left:0;top:153px;width:277px;background:linear-gradient(90deg,#e1ff00,#ffff00 79px,#ffde00 173px,#ffc100)"></i>
<i class="r" style="left:0;top:156px;width:277px;background:linear-gradient(90deg,#e2ff00,#ffff00 76px,#ffdd00 172px,#ffc000)"></i>
<i class="r" style="left:0;top:159px;width:277px;background:linear-gradient(90deg,#e3ff00,#ffff00 74px,#ffdd00 170px,#ffbf00)"></i>
<i class="r" style="left:0;top:162px;width:277px;background:linear-gradient(90deg,#e4ff00,#ffff00 71px,#ffdd00 168px,#ffbe00)"></i>
<i class="r" style="left:0;top:165px;width:277px;background:linear-gradient(90deg,#e5ff00,#ffff00 68px,#ffdc00 167px,#ffbd00)"></i>
<i class="r" style="left:0;top:168px;width:277px;background:linear-gradient(90deg,#e6ff00,#ffff00 65px,#ffdc00 165px,#ffbd00)"></i>
<i class="r" style="left:0;top:171px;width:277px;background:linear-gradient(90deg,#e7ff00,#ffff00 63px,#ffdb00 164px,#ffbc00)"></i>
<i class="r" style="left:0;top:174px;width:277px;background:linear-gradient(90deg,#e8ff00,#ffff00 60px,#ffdb00 162px,#ffbb00)"></i>
<i class="r" style="left:0;top:177px;width:277px;background:linear-gradient(90deg,#e9ff00,#ffff00 57px,#ffdb00 160px,#ffba00)"></i>
<i class="r" style="left:0;top:180px;width:277px;background:linear-gradient(90deg,#eaff00,#ffff00 54px,#ffda00 159px,#ffba00)"></i>
</div></div>
<svg style="left:0;top:0" width="2560" height="1552" viewBox="0 0 2560 1552"><rect x="2385.2" y="808.2" width="19" height="19" fill="none" stroke="#fff" stroke-width="2"/><circle cx="2369.6" cy="813.8" r="5.2" fill="#ffff00" stroke="#000" stroke-width="1.5"/></svg>
<div class="b" style="left:2183.5px;top:924.0px;width:357.0px;height:39.5px;background:#333;"></div>
<span class="t" style="left:2184.0px;top:930.7px;font-size:28.2px;line-height:28.2px;color:#f2f2f2;letter-spacing:-0.096px;">RGB Triplet: 255, 255, 0</span>
<div class="b" style="left:201.0px;top:1490px;width:65.8px;height:61.5px;border-radius:5px;background:linear-gradient(#a6a6a6,#8a8a8a 45%,#626262)"></div>
<div class="b" style="left:206.0px;top:1495.3px;width:56px;height:36px;border-radius:3px;background:#ffffff;box-shadow:inset 1px 1px 1.5px rgba(0,0,0,.35)"></div>
<span class="t" style="left:219.1px;top:1536.9px;font-size:11.2px;line-height:11.2px;color:#242424;letter-spacing:0.433px;-webkit-text-stroke:.4px #242424;">White</span>
<div class="b" style="left:268.9px;top:1490px;width:65.8px;height:61.5px;border-radius:5px;background:linear-gradient(#a6a6a6,#8a8a8a 45%,#626262)"></div>
<div class="b" style="left:273.9px;top:1495.3px;width:56px;height:36px;border-radius:3px;background:#e6e6e6;box-shadow:inset 1px 1px 1.5px rgba(0,0,0,.35)"></div>
<span class="t" style="left:282.7px;top:1536.9px;font-size:11.2px;line-height:11.2px;color:#242424;letter-spacing:-0.261px;-webkit-text-stroke:.4px #242424;">Gray 80</span>
<div class="b" style="left:336.7px;top:1490px;width:65.8px;height:61.5px;border-radius:5px;background:linear-gradient(#a6a6a6,#8a8a8a 45%,#626262)"></div>
<div class="b" style="left:341.7px;top:1495.3px;width:56px;height:36px;border-radius:3px;background:#d1d1d1;box-shadow:inset 1px 1px 1.5px rgba(0,0,0,.35)"></div>
<span class="t" style="left:350.5px;top:1536.9px;font-size:11.2px;line-height:11.2px;color:#242424;letter-spacing:-0.251px;-webkit-text-stroke:.4px #242424;">Gray 65</span>
<div class="b" style="left:404.6px;top:1490px;width:65.8px;height:61.5px;border-radius:5px;background:linear-gradient(#a6a6a6,#8a8a8a 45%,#626262)"></div>
<div class="b" style="left:409.6px;top:1495.3px;width:56px;height:36px;border-radius:3px;background:#bababa;box-shadow:inset 1px 1px 1.5px rgba(0,0,0,.35)"></div>
<span class="t" style="left:418.4px;top:1536.9px;font-size:11.2px;line-height:11.2px;color:#242424;letter-spacing:-0.261px;-webkit-text-stroke:.4px #242424;">Gray 50</span>
<div class="b" style="left:472.4px;top:1490px;width:65.8px;height:61.5px;border-radius:5px;background:linear-gradient(#a6a6a6,#8a8a8a 45%,#626262)"></div>
<div class="b" style="left:477.4px;top:1495.3px;width:56px;height:36px;border-radius:3px;background:#9e9e9e;box-shadow:inset 1px 1px 1.5px rgba(0,0,0,.35)"></div>
<span class="t" style="left:486.2px;top:1536.9px;font-size:11.2px;line-height:11.2px;color:#242424;letter-spacing:-0.251px;-webkit-text-stroke:.4px #242424;">Gray 35</span>
<div class="b" style="left:540.3px;top:1490px;width:65.8px;height:61.5px;border-radius:5px;background:linear-gradient(#a6a6a6,#8a8a8a 45%,#626262)"></div>
<div class="b" style="left:545.3px;top:1495.3px;width:56px;height:36px;border-radius:3px;background:#000000;box-shadow:inset 1px 1px 1.5px rgba(0,0,0,.35)"></div>
<span class="t" style="left:559.5px;top:1536.9px;font-size:11.2px;line-height:11.2px;color:#242424;letter-spacing:-0.161px;-webkit-text-stroke:.4px #242424;">Black</span>
<div class="b" style="left:608.2px;top:1490px;width:65.8px;height:61.5px;border-radius:5px;background:linear-gradient(#a6a6a6,#8a8a8a 45%,#626262)"></div>
<div class="b" style="left:613.2px;top:1495.3px;width:56px;height:36px;border-radius:3px;background:#735244;box-shadow:inset 1px 1px 1.5px rgba(0,0,0,.35)"></div>
<span class="t" style="left:616.8px;top:1536.9px;font-size:11.2px;line-height:11.2px;color:#242424;letter-spacing:-0.011px;-webkit-text-stroke:.4px #242424;">Dark Skin</span>
<div class="b" style="left:676.0px;top:1490px;width:65.8px;height:61.5px;border-radius:5px;background:linear-gradient(#a6a6a6,#8a8a8a 45%,#626262)"></div>
<div class="b" style="left:681.0px;top:1495.3px;width:56px;height:36px;border-radius:3px;background:#c29682;box-shadow:inset 1px 1px 1.5px rgba(0,0,0,.35)"></div>
<span class="t" style="left:684.5px;top:1536.9px;font-size:11.2px;line-height:11.2px;color:#242424;letter-spacing:-0.033px;-webkit-text-stroke:.4px #242424;">Light Skin</span>
<div class="b" style="left:743.9px;top:1490px;width:65.8px;height:61.5px;border-radius:5px;background:linear-gradient(#a6a6a6,#8a8a8a 45%,#626262)"></div>
<div class="b" style="left:748.9px;top:1495.3px;width:56px;height:36px;border-radius:3px;background:#627a9d;box-shadow:inset 1px 1px 1.5px rgba(0,0,0,.35)"></div>
<span class="t" style="left:755.0px;top:1536.9px;font-size:11.2px;line-height:11.2px;color:#242424;letter-spacing:-0.184px;-webkit-text-stroke:.4px #242424;">Blue Sky</span>
<div class="b" style="left:811.7px;top:1490px;width:65.8px;height:61.5px;border-radius:5px;background:linear-gradient(#a6a6a6,#8a8a8a 45%,#626262)"></div>
<div class="b" style="left:816.7px;top:1495.3px;width:56px;height:36px;border-radius:3px;background:#576c43;box-shadow:inset 1px 1px 1.5px rgba(0,0,0,.35)"></div>
<span class="t" style="left:826.6px;top:1536.9px;font-size:11.2px;line-height:11.2px;color:#242424;letter-spacing:-0.165px;-webkit-text-stroke:.4px #242424;">Foliage</span>
<div class="b" style="left:879.6px;top:1490px;width:65.8px;height:61.5px;border-radius:5px;background:linear-gradient(#a6a6a6,#8a8a8a 45%,#626262)"></div>
<div class="b" style="left:884.6px;top:1495.3px;width:56px;height:36px;border-radius:3px;background:#8580b1;box-shadow:inset 1px 1px 1.5px rgba(0,0,0,.35)"></div>
<span class="t" style="left:882.5px;top:1536.9px;font-size:11.2px;line-height:11.2px;color:#242424;letter-spacing:0.043px;-webkit-text-stroke:.4px #242424;">Blue Flower</span>
<div class="b" style="left:947.5px;top:1490px;width:65.8px;height:61.5px;border-radius:5px;background:linear-gradient(#a6a6a6,#8a8a8a 45%,#626262)"></div>
<div class="b" style="left:952.5px;top:1495.3px;width:56px;height:36px;border-radius:3px;background:#7cc0ad;box-shadow:inset 1px 1px 1.5px rgba(0,0,0,.35)"></div>
<span class="t" style="left:948.1px;top:1536.9px;font-size:11.2px;line-height:11.2px;color:#242424;letter-spacing:-0.024px;-webkit-text-stroke:.4px #242424;">Bluish Green</span>
<div class="b" style="left:1015.3px;top:1490px;width:65.8px;height:61.5px;border-radius:5px;background:linear-gradient(#a6a6a6,#8a8a8a 45%,#626262)"></div>
<div class="b" style="left:1020.3px;top:1495.3px;width:56px;height:36px;border-radius:3px;background:#d67e2c;box-shadow:inset 1px 1px 1.5px rgba(0,0,0,.35)"></div>
<span class="t" style="left:1030.2px;top:1536.9px;font-size:11.2px;line-height:11.2px;color:#242424;letter-spacing:-0.220px;-webkit-text-stroke:.4px #242424;">Orange</span>
<div class="b" style="left:1083.2px;top:1490px;width:65.8px;height:61.5px;border-radius:5px;background:linear-gradient(#a6a6a6,#8a8a8a 45%,#626262)"></div>
<div class="b" style="left:1088.2px;top:1495.3px;width:56px;height:36px;border-radius:3px;background:#505ba6;box-shadow:inset 1px 1px 1.5px rgba(0,0,0,.35)"></div>
<span class="t" style="left:1082.9px;top:1536.9px;font-size:11.2px;line-height:11.2px;color:#242424;letter-spacing:0.006px;-webkit-text-stroke:.4px #242424;">Purplish Blue</span>
<div class="b" style="left:1151.0px;top:1490px;width:65.8px;height:61.5px;border-radius:5px;background:linear-gradient(#a6a6a6,#8a8a8a 45%,#626262)"></div>
<div class="b" style="left:1156.0px;top:1495.3px;width:56px;height:24px;border-radius:3px;background:#b85c63;box-shadow:inset 1px 1px 1.5px rgba(0,0,0,.35)"></div>
<span class="t" style="left:1158.3px;top:1524.8px;font-size:11.2px;line-height:11.2px;color:#242424;letter-spacing:0.432px;-webkit-text-stroke:.4px #242424;">Moderate</span>
<span class="t" style="left:1158.3px;top:1536.9px;font-size:11.2px;line-height:11.2px;color:#242424;letter-spacing:-0.342px;-webkit-text-stroke:.4px #242424;">Red</span>
<div class="b" style="left:1218.9px;top:1490px;width:65.8px;height:61.5px;border-radius:5px;background:linear-gradient(#a6a6a6,#8a8a8a 45%,#626262)"></div>
<div class="b" style="left:1223.9px;top:1495.3px;width:56px;height:36px;border-radius:3px;background:#5a3e6c;box-shadow:inset 1px 1px 1.5px rgba(0,0,0,.35)"></div>
<span class="t" style="left:1235.0px;top:1536.9px;font-size:11.2px;line-height:11.2px;color:#242424;letter-spacing:0.215px;-webkit-text-stroke:.4px #242424;">Purple</span>
<div class="b" style="left:1286.8px;top:1490px;width:65.8px;height:61.5px;border-radius:5px;background:linear-gradient(#a6a6a6,#8a8a8a 45%,#626262)"></div>
<div class="b" style="left:1291.8px;top:1495.3px;width:56px;height:36px;border-radius:3px;background:#a3be52;box-shadow:inset 1px 1px 1.5px rgba(0,0,0,.35)"></div>
<span class="t" style="left:1287.0px;top:1536.9px;font-size:11.2px;line-height:11.2px;color:#242424;letter-spacing:-0.027px;-webkit-text-stroke:.4px #242424;">Yellow Green</span>
<div class="b" style="left:1354.6px;top:1490px;width:65.8px;height:61.5px;border-radius:5px;background:linear-gradient(#a6a6a6,#8a8a8a 45%,#626262)"></div>
<div class="b" style="left:1359.6px;top:1495.3px;width:56px;height:24px;border-radius:3px;background:#dfa547;box-shadow:inset 1px 1px 1.5px rgba(0,0,0,.35)"></div>
<span class="t" style="left:1368.9px;top:1524.8px;font-size:11.2px;line-height:11.2px;color:#242424;letter-spacing:-0.220px;-webkit-text-stroke:.4px #242424;">Orange</span>
<span class="t" style="left:1369.2px;top:1536.9px;font-size:11.2px;line-height:11.2px;color:#242424;letter-spacing:0.210px;-webkit-text-stroke:.4px #242424;">Yellow</span>
<div class="b" style="left:1422.5px;top:1490px;width:65.8px;height:61.5px;border-radius:5px;background:linear-gradient(#a6a6a6,#8a8a8a 45%,#626262)"></div>
<div class="b" style="left:1427.5px;top:1495.3px;width:56px;height:36px;border-radius:3px;background:#383d94;box-shadow:inset 1px 1px 1.5px rgba(0,0,0,.35)"></div>
<span class="t" style="left:1443.7px;top:1536.9px;font-size:11.2px;line-height:11.2px;color:#242424;letter-spacing:0.248px;-webkit-text-stroke:.4px #242424;">Blue</span>
<div class="b" style="left:1490.3px;top:1490px;width:65.8px;height:61.5px;border-radius:5px;background:linear-gradient(#a6a6a6,#8a8a8a 45%,#626262)"></div>
<div class="b" style="left:1495.3px;top:1495.3px;width:56px;height:36px;border-radius:3px;background:#5c9452;box-shadow:inset 1px 1px 1.5px rgba(0,0,0,.35)"></div>
<span class="t" style="left:1508.0px;top:1536.9px;font-size:11.2px;line-height:11.2px;color:#242424;letter-spacing:-0.076px;-webkit-text-stroke:.4px #242424;">Green</span>
<div class="b" style="left:1558.2px;top:1490px;width:65.8px;height:61.5px;border-radius:5px;background:linear-gradient(#a6a6a6,#8a8a8a 45%,#626262)"></div>
<div class="b" style="left:1563.2px;top:1495.3px;width:56px;height:36px;border-radius:3px;background:#a3393d;box-shadow:inset 1px 1px 1.5px rgba(0,0,0,.35)"></div>
<span class="t" style="left:1581.2px;top:1536.9px;font-size:11.2px;line-height:11.2px;color:#242424;letter-spacing:-0.342px;-webkit-text-stroke:.4px #242424;">Red</span>
<div class="b" style="left:1626.1px;top:1490px;width:65.8px;height:61.5px;border-radius:5px;background:linear-gradient(#a6a6a6,#8a8a8a 45%,#626262)"></div>
<div class="b" style="left:1631.1px;top:1495.3px;width:56px;height:36px;border-radius:3px;background:#ecca4d;box-shadow:inset 1px 1px 1.5px rgba(0,0,0,.35)"></div>
<span class="t" style="left:1642.4px;top:1536.9px;font-size:11.2px;line-height:11.2px;color:#242424;letter-spacing:0.210px;-webkit-text-stroke:.4px #242424;">Yellow</span>
<div class="b" style="left:1693.9px;top:1490px;width:65.8px;height:61.5px;border-radius:5px;background:linear-gradient(#a6a6a6,#8a8a8a 45%,#626262)"></div>
<div class="b" style="left:1698.9px;top:1495.3px;width:56px;height:36px;border-radius:3px;background:#af5b93;box-shadow:inset 1px 1px 1.5px rgba(0,0,0,.35)"></div>
<span class="t" style="left:1704.1px;top:1536.9px;font-size:11.2px;line-height:11.2px;color:#242424;letter-spacing:0.170px;-webkit-text-stroke:.4px #242424;">Magenta</span>
<div class="b" style="left:1761.8px;top:1490px;width:65.8px;height:61.5px;border-radius:5px;background:linear-gradient(#a6a6a6,#8a8a8a 45%,#626262)"></div>
<div class="b" style="left:1766.8px;top:1495.3px;width:56px;height:36px;border-radius:3px;background:#2684a7;box-shadow:inset 1px 1px 1.5px rgba(0,0,0,.35)"></div>
<span class="t" style="left:1782.3px;top:1536.9px;font-size:11.2px;line-height:11.2px;color:#242424;letter-spacing:-0.340px;-webkit-text-stroke:.4px #242424;">Cyan</span>
<div class="b" style="left:1829.6px;top:1490px;width:65.8px;height:61.5px;border-radius:5px;background:linear-gradient(#a6a6a6,#8a8a8a 45%,#626262)"></div>
<div class="b" style="left:1834.6px;top:1495.3px;width:56px;height:36px;border-radius:3px;background:#ff0000;box-shadow:inset 1px 1px 1.5px rgba(0,0,0,.35)"></div>
<span class="t" style="left:1837.8px;top:1536.9px;font-size:11.2px;line-height:11.2px;color:#242424;letter-spacing:-0.399px;-webkit-text-stroke:.4px #242424;">100% Red</span>
<div class="b" style="left:1897.5px;top:1490px;width:65.8px;height:61.5px;border-radius:5px;background:linear-gradient(#a6a6a6,#8a8a8a 45%,#626262)"></div>
<div class="b" style="left:1902.5px;top:1495.3px;width:56px;height:36px;border-radius:3px;background:#00ff00;box-shadow:inset 1px 1px 1.5px rgba(0,0,0,.35)"></div>
<span class="t" style="left:1900.1px;top:1536.9px;font-size:11.2px;line-height:11.2px;color:#242424;letter-spacing:-0.242px;-webkit-text-stroke:.4px #242424;">100% Green</span>
<div class="b" style="left:1965.4px;top:1490px;width:65.8px;height:61.5px;border-radius:5px;background:linear-gradient(#a6a6a6,#8a8a8a 45%,#626262)"></div>
<div class="b" style="left:1970.4px;top:1495.3px;width:56px;height:36px;border-radius:3px;background:#0000ff;box-shadow:inset 1px 1px 1.5px rgba(0,0,0,.35)"></div>
<span class="t" style="left:1971.9px;top:1536.9px;font-size:11.2px;line-height:11.2px;color:#242424;letter-spacing:-0.195px;-webkit-text-stroke:.4px #242424;">100% Blue</span>
<div class="b" style="left:2033.2px;top:1490px;width:65.8px;height:61.5px;border-radius:5px;background:linear-gradient(#a6a6a6,#8a8a8a 45%,#626262)"></div>
<div class="b" style="left:2038.2px;top:1495.3px;width:56px;height:36px;border-radius:3px;background:#00ffff;box-shadow:inset 1px 1px 1.5px rgba(0,0,0,.35)"></div>
<span class="t" style="left:2038.8px;top:1536.9px;font-size:11.2px;line-height:11.2px;color:#242424;letter-spacing:-0.411px;-webkit-text-stroke:.4px #242424;">100% Cyan</span>
<div class="b" style="left:2101.1px;top:1490px;width:65.8px;height:61.5px;border-radius:5px;background:linear-gradient(#a6a6a6,#8a8a8a 45%,#626262)"></div>
<div class="b" style="left:2106.1px;top:1495.3px;width:56px;height:24px;border-radius:3px;background:#ff00ff;box-shadow:inset 1px 1px 1.5px rgba(0,0,0,.35)"></div>
<span class="t" style="left:2108.5px;top:1524.8px;font-size:11.2px;line-height:11.2px;color:#242424;letter-spacing:0.187px;-webkit-text-stroke:.4px #242424;">100%</span>
<span class="t" style="left:2108.5px;top:1536.9px;font-size:11.2px;line-height:11.2px;color:#242424;letter-spacing:0.170px;-webkit-text-stroke:.4px #242424;">Magenta</span>
<div class="b" style="left:2168.9px;top:1490px;width:65.8px;height:61.5px;border-radius:5px;background:#1c1c1c"></div>
<div class="b" style="left:2173.9px;top:1495.3px;width:56px;height:36px;border-radius:3px;background:#ffff00;box-shadow:inset 1px 1px 1.5px rgba(0,0,0,.35)"></div>
<span class="t" style="left:2170.5px;top:1536.9px;font-size:11.2px;line-height:11.2px;color:#fff;font-weight:700;letter-spacing:-0.424px;">100% Yellow</span>
<div class="b" style="left:2237px;top:1509px;width:48px;height:43px;border-radius:5px 0 0 0;background:linear-gradient(#8e8e8e,#6a6a6a)"></div>
<div class="b" style="left:2245px;top:1514.5px;width:31px;height:30px;box-sizing:border-box;border:2.2px solid #333;border-radius:4px;background:linear-gradient(#a0a0a0,#888)"></div>
<div class="b" style="left:2254.0px;top:1522.8px;width:14.0px;height:13.8px;background:#000;"></div>
<div class="b" style="left:2286px;top:1489.5px;width:274px;height:30px;background:linear-gradient(#8a8a8a,#767676)"></div>
<div class="b" style="left:2299.3px;top:1495px;width:19px;height:19px;border-radius:50%;background:linear-gradient(#6e6e6e,#8c8c8c)"></div>
<div class="b" style="left:2331.0px;top:1489.5px;width:1.2px;height:30.0px;background:#5a5a5a;"></div>
<div class="b" style="left:2344.9px;top:1495px;width:19px;height:19px;border-radius:50%;background:linear-gradient(#6e6e6e,#8c8c8c)"></div>
<div class="b" style="left:2376.6px;top:1489.5px;width:1.2px;height:30.0px;background:#5a5a5a;"></div>
<div class="b" style="left:2390.5px;top:1495px;width:19px;height:19px;border-radius:50%;background:linear-gradient(#6e6e6e,#8c8c8c)"></div>
<div class="b" style="left:2422.2px;top:1489.5px;width:1.2px;height:30.0px;background:#5a5a5a;"></div>
<div class="b" style="left:2436.1px;top:1495px;width:19px;height:19px;border-radius:50%;background:linear-gradient(#6e6e6e,#8c8c8c)"></div>
<div class="b" style="left:2468.4px;top:1489.5px;width:45.6px;height:30.0px;background:#2a2a2a;"></div>
<div class="b" style="left:2467.8px;top:1489.5px;width:1.2px;height:30.0px;background:#5a5a5a;"></div>
<div class="b" style="left:2481.7px;top:1495px;width:19px;height:19px;border-radius:50%;background:linear-gradient(#444,#333)"></div>
<div class="b" style="left:2513.4px;top:1489.5px;width:1.2px;height:30.0px;background:#5a5a5a;"></div>
<div class="b" style="left:2527.3px;top:1495px;width:19px;height:19px;border-radius:50%;background:linear-gradient(#6e6e6e,#8c8c8c)"></div>
<div class="b" style="left:2286px;top:1521px;width:136px;height:31px;border-radius:5px 0 0 0;background:linear-gradient(#a4a4a4,#8c8c8c 50%,#747474);box-shadow:inset 0 1px 0 #bbb"></div>
<div class="b" style="left:2422.5px;top:1521px;width:138px;height:31px;background:linear-gradient(#a4a4a4,#8c8c8c 50%,#747474);box-shadow:inset 0 1px 0 #bbb"></div>
<div class="b" style="left:2421.8px;top:1521.0px;width:1.2px;height:31.0px;background:#5c5c5c;"></div>
<div class="b" style="left:2307.0px;top:1526px;width:19.4px;height:19.4px;border-radius:50%;background:linear-gradient(#787878,#9a9a9a)"></div>
<span class="t" style="left:2311.4px;top:1525.1px;font-size:19px;line-height:19px;color:#3a3a3a;">«</span>
<div class="b" style="left:2520.3px;top:1526px;width:19.4px;height:19.4px;border-radius:50%;background:linear-gradient(#787878,#9a9a9a)"></div>
<span class="t" style="left:2524.7px;top:1525.1px;font-size:19px;line-height:19px;color:#3a3a3a;">»</span>
<span class="t" style="left:2341.6px;top:1524.8px;font-size:22px;line-height:22px;color:#333;letter-spacing:1.033px;">Back</span>
<span class="t" style="left:2448.8px;top:1524.8px;font-size:22px;line-height:22px;color:#333;letter-spacing:2.817px;">Next</span>
<svg style="left:0;top:0" width="2560" height="1552" viewBox="0 0 2560 1552" fill="none" stroke-linejoin="round" stroke-linecap="round"><mask id="wmk" maskUnits="userSpaceOnUse" x="2150" y="1440" width="410" height="112"><rect x="2150" y="1440" width="410" height="112" fill="#fff"/><polyline points="2225.9,1482.6 2176.9,1471.2 2177.0,1519.0 2208.2,1535.5 2262.9,1517.5 2232.4,1511.6" stroke="#000" stroke-width="5.2"/><polyline points="2225.7,1482.6 2226.9,1509.0 2188.1,1512.9" stroke="#000" stroke-width="3.2"/><polygon points="2188.6,1487.5 2197.0,1483.6 2206.8,1493.3 2231.4,1467.3 2233.7,1469.0 2211.9,1501.8 2204.8,1507.3 2196.4,1491.4" fill="#000"/><text x="2231.8" y="1507.7" font-family="Liberation Sans, sans-serif" font-weight="700" font-size="33.5" style="letter-spacing:0.755px" fill="#000">NOTEBOOK</text><text x="2429.1" y="1507.7" font-family="Liberation Sans, sans-serif" font-weight="700" font-size="33.5" style="letter-spacing:0.454px" fill="#000">CHECK</text></mask><g mask="url(#wmk)"><polyline points="2225.9,1482.6 2176.9,1471.2 2177.0,1519.0 2208.2,1535.5 2262.9,1517.5 2232.4,1511.6" stroke="rgba(225,220,220,.55)" stroke-width="7.8"/><polyline points="2225.7,1482.6 2226.9,1509.0 2188.1,1512.9" stroke="rgba(225,220,220,.55)" stroke-width="5.8"/><polygon points="2188.6,1487.5 2197.0,1483.6 2206.8,1493.3 2231.4,1467.3 2233.7,1469.0 2211.9,1501.8 2204.8,1507.3 2196.4,1491.4" stroke="rgba(215,215,215,.6)" stroke-width="2.4"/><text x="2231.8" y="1507.7" font-family="Liberation Sans, sans-serif" font-weight="700" font-size="33.5" style="letter-spacing:0.755px" stroke="rgba(230,222,222,.55)" stroke-width="2.8">NOTEBOOK</text><text x="2429.1" y="1507.7" font-family="Liberation Sans, sans-serif" font-weight="700" font-size="33.5" style="letter-spacing:0.454px" stroke="rgba(230,230,230,.55)" stroke-width="2.8">CHECK</text></g><polyline points="2225.9,1482.6 2176.9,1471.2 2177.0,1519.0 2208.2,1535.5 2262.9,1517.5 2232.4,1511.6" stroke="rgba(186,30,40,.54)" stroke-width="5.4"/><polyline points="2225.7,1482.6 2226.9,1509.0 2188.1,1512.9" stroke="rgba(186,30,40,.54)" stroke-width="3.4"/><polygon points="2188.6,1487.5 2197.0,1483.6 2206.8,1493.3 2231.4,1467.3 2233.7,1469.0 2211.9,1501.8 2204.8,1507.3 2196.4,1491.4" fill="rgba(31,31,31,.6)"/><text x="2231.8" y="1507.7" font-family="Liberation Sans, sans-serif" font-weight="700" font-size="33.5" style="letter-spacing:0.755px" fill="rgba(186,30,40,.54)">NOTEBOOK</text><text x="2429.1" y="1507.7" font-family="Liberation Sans, sans-serif" font-weight="700" font-size="33.5" style="letter-spacing:0.454px" fill="rgba(36,36,36,.62)">CHECK</text></svg>
</body></html>
